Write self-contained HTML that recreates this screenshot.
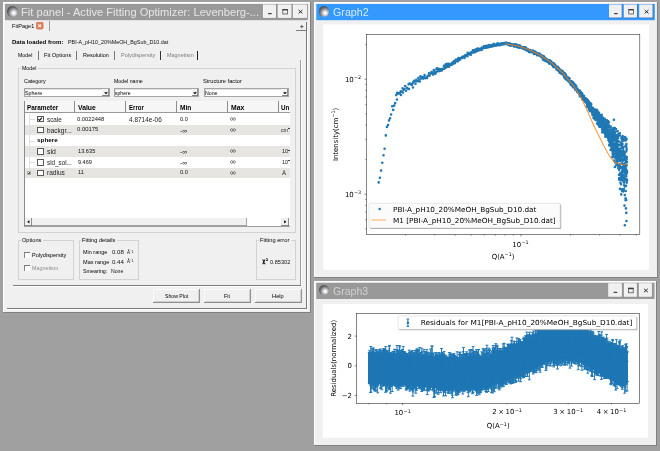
<!DOCTYPE html>
<html lang="en"><head><meta charset="utf-8"><title>SasView - Fit panel</title>
<style>
html,body{margin:0;padding:0;}
body{width:660px;height:451px;overflow:hidden;background:#a0a0a0;position:relative;font-family:"Liberation Sans",sans-serif;}
#root{position:absolute;left:0;top:0;width:660px;height:451px;will-change:transform;}
.r{position:absolute;display:block;}
.t{position:absolute;display:block;white-space:nowrap;}
</style></head><body><div id="root">
<div class="r" style="left:3.00px;top:2.00px;width:307.00px;height:310.30px;background:#f0f0f0;box-shadow:0.6px 0.6px 0 0.4px #808080;"></div>
<div class="r" style="left:3.00px;top:2.00px;width:307.00px;height:1.00px;background:#ffffff;"></div>
<div class="r" style="left:3.00px;top:2.00px;width:1.00px;height:310.30px;background:#ffffff;"></div>
<svg class="r" style="left:0;top:0" width="660" height="451" viewBox="0 0 660 451"><rect x="5.00" y="4.00" width="302.80" height="16.2" fill="#999999"/><rect x="263.00" y="4.50" width="13.50" height="13.80" fill="#8a8a8a"/><rect x="263.00" y="4.50" width="12.90" height="13.20" fill="#ffffff"/><rect x="263.50" y="5.00" width="12.40" height="12.70" fill="#f0f0f0"/><rect x="268.15" y="13.00" width="3.5" height="1.2" fill="#3a3a3a"/><rect x="277.70" y="4.50" width="14.20" height="13.80" fill="#8a8a8a"/><rect x="277.70" y="4.50" width="13.60" height="13.20" fill="#ffffff"/><rect x="278.20" y="5.00" width="13.10" height="12.70" fill="#f0f0f0"/><rect x="282.80" y="9.40" width="4.6" height="4.6" stroke="#4a4a4a" stroke-width="0.75" fill="none"/><rect x="282.50" y="9.00" width="5.2" height="1.4" fill="#3a3a3a"/><rect x="293.00" y="4.50" width="14.40" height="13.80" fill="#8a8a8a"/><rect x="293.00" y="4.50" width="13.80" height="13.20" fill="#ffffff"/><rect x="293.50" y="5.00" width="13.30" height="12.70" fill="#f0f0f0"/><path d="M298.60 10.00 L302.40 13.40 M302.40 10.00 L298.60 13.40" stroke="#2c2c2c" stroke-width="1.0" fill="none"/></svg>
<div class="r" style="left:7.20px;top:6.00px;width:10.6px;height:10.6px;border-radius:50%;background:radial-gradient(circle at 62% 64%, #ffffff 0%, #f4f4f4 13%, #b0b0b4 34%, #66666c 58%, #44444a 80%, #3a3a40 100%);"></div>
<span class="t" style="left:21.30px;top:5.96px;font-size:11.4px;line-height:13.68px;color:#e6e6e6;font-family:'Liberation Sans', sans-serif;transform:scaleX(0.9765);transform-origin:0 50%;">Fit panel - Active Fitting Optimizer: Levenberg-...</span>
<span class="t" style="left:12.00px;top:22.72px;font-size:5.8px;line-height:6.96px;color:#000;font-family:'Liberation Sans', sans-serif;transform:scaleX(0.9606);transform-origin:0 50%;">FitPage1</span>
<svg class="r" style="left:36.3px;top:22.3px" width="7.4" height="7.4" viewBox="0 0 7.4 7.4"><rect x="0.3" y="0.3" width="6.8" height="6.8" rx="1.4" fill="#e0805c" stroke="#c8623c" stroke-width="0.6"/><path d="M2.3 2.3 L5.1 5.1 M5.1 2.3 L2.3 5.1" stroke="#fff4e8" stroke-width="1.1"/></svg>
<div class="r" style="left:49.00px;top:21.30px;width:1.10px;height:10.00px;background:#9c9c9c;"></div>
<div class="r" style="left:296.40px;top:21.80px;width:10.40px;height:9.00px;background:#f0f0f0;box-shadow:inset -0.8px -0.8px 0 #555;"></div>
<svg class="r" style="left:298px;top:23px" width="8" height="8" viewBox="0 0 8 8"><path d="M2.1 3.6h3.4M3.8 1.9v3.4" stroke="#333" stroke-width="0.7" fill="none"/></svg>
<div class="r" style="left:306.20px;top:30.00px;width:0.80px;height:279.00px;background:#7a7a7a;"></div>
<div class="r" style="left:307.00px;top:30.00px;width:0.80px;height:279.80px;background:#ffffff;"></div>
<div class="r" style="left:7.00px;top:308.20px;width:300.00px;height:0.80px;background:#7a7a7a;"></div>
<div class="r" style="left:7.00px;top:309.00px;width:300.80px;height:0.80px;background:#ffffff;"></div>
<span class="t" style="left:12.00px;top:38.72px;font-size:5.8px;line-height:6.96px;color:#000;font-weight:bold;font-family:'Liberation Sans', sans-serif;transform:scaleX(1.0445);transform-origin:0 50%;">Data loaded from:</span>
<span class="t" style="left:68.00px;top:38.72px;font-size:5.8px;line-height:6.96px;color:#111;font-family:'Liberation Sans', sans-serif;transform:scaleX(0.9286);transform-origin:0 50%;">PBI-A_pH10_20%MeOH_BgSub_D10.dat</span>
<span class="t" style="left:18.00px;top:51.92px;font-size:5.8px;line-height:6.96px;color:#000;font-family:'Liberation Sans', sans-serif;transform:scaleX(0.9052);transform-origin:0 50%;">Model</span>
<div class="r" style="left:38.20px;top:51.00px;width:0.80px;height:9.00px;background:#777;"></div>
<span class="t" style="left:44.00px;top:51.92px;font-size:5.8px;line-height:6.96px;color:#000;font-family:'Liberation Sans', sans-serif;transform:scaleX(0.9735);transform-origin:0 50%;">Fit Options</span>
<div class="r" style="left:76.40px;top:51.00px;width:0.80px;height:9.00px;background:#777;"></div>
<span class="t" style="left:83.00px;top:51.92px;font-size:5.8px;line-height:6.96px;color:#000;font-family:'Liberation Sans', sans-serif;transform:scaleX(0.9414);transform-origin:0 50%;">Resolution</span>
<div class="r" style="left:114.20px;top:51.00px;width:0.80px;height:9.00px;background:#777;"></div>
<span class="t" style="left:120.50px;top:51.92px;font-size:5.8px;line-height:6.96px;color:#7c7c7c;font-family:'Liberation Sans', sans-serif;transform:scaleX(0.9586);transform-origin:0 50%;">Polydispersity</span>
<div class="r" style="left:160.10px;top:51.00px;width:0.80px;height:9.00px;background:#333;"></div>
<span class="t" style="left:166.50px;top:51.92px;font-size:5.8px;line-height:6.96px;color:#7c7c7c;font-family:'Liberation Sans', sans-serif;transform:scaleX(0.9413);transform-origin:0 50%;">Magnetism</span>
<div class="r" style="left:197.30px;top:51.00px;width:0.80px;height:9.00px;background:#222;"></div>
<div class="r" style="left:300.20px;top:60.00px;width:0.80px;height:225.60px;background:#9c9c9c;"></div>
<div class="r" style="left:301.00px;top:60.00px;width:0.80px;height:226.40px;background:#ffffff;"></div>
<div class="r" style="left:12.50px;top:285.00px;width:288.50px;height:0.80px;background:#7a7a7a;"></div>
<div class="r" style="left:12.50px;top:285.80px;width:289.30px;height:0.80px;background:#ffffff;"></div>
<div class="r" style="left:18.00px;top:68.00px;width:277.80px;height:164.60px;border:0.7px solid #d2d2d2;box-sizing:border-box;"></div>
<div class="r" style="left:20.50px;top:65.00px;width:17.00px;height:6.00px;background:#f0f0f0;"></div>
<span class="t" style="left:22.00px;top:64.72px;font-size:5.8px;line-height:6.96px;color:#000;font-family:'Liberation Sans', sans-serif;transform:scaleX(0.9052);transform-origin:0 50%;">Model</span>
<span class="t" style="left:23.50px;top:77.82px;font-size:5.8px;line-height:6.96px;color:#000;font-family:'Liberation Sans', sans-serif;transform:scaleX(0.9263);transform-origin:0 50%;">Category</span>
<span class="t" style="left:113.50px;top:77.82px;font-size:5.8px;line-height:6.96px;color:#000;font-family:'Liberation Sans', sans-serif;transform:scaleX(0.9023);transform-origin:0 50%;">Model name</span>
<span class="t" style="left:203.00px;top:77.82px;font-size:5.8px;line-height:6.96px;color:#000;font-family:'Liberation Sans', sans-serif;transform:scaleX(0.9786);transform-origin:0 50%;">Structure factor</span>
<div class="r" style="left:23.50px;top:87.60px;width:86.30px;height:9.90px;background:#ffffff;border:0.7px solid #a4a4a4;box-sizing:border-box;box-shadow:inset 0.5px 0.5px 0 #c4c4c4;"></div>
<span class="t" style="left:25.00px;top:89.62px;font-size:5.8px;line-height:6.96px;color:#000;font-family:'Liberation Sans', sans-serif;transform:scaleX(0.9196);transform-origin:0 50%;">Sphere</span>
<div class="r" style="left:102.40px;top:89.00px;width:6.60px;height:7.20px;background:#f0f0f0;box-shadow:inset -0.7px -0.7px 0 #666, inset 0.5px 0.5px 0 #fff;"></div>
<svg class="r" style="left:103.70px;top:91.6px" width="4" height="2.6" viewBox="0 0 4 2.6"><path d="M0.2 0.2 L3.8 0.2 L2 2.4 Z" fill="#000"/></svg>
<div class="r" style="left:113.50px;top:87.60px;width:85.50px;height:9.90px;background:#ffffff;border:0.7px solid #a4a4a4;box-sizing:border-box;box-shadow:inset 0.5px 0.5px 0 #c4c4c4;"></div>
<span class="t" style="left:115.00px;top:89.62px;font-size:5.8px;line-height:6.96px;color:#000;font-family:'Liberation Sans', sans-serif;transform:scaleX(0.8740);transform-origin:0 50%;">sphere</span>
<div class="r" style="left:191.60px;top:89.00px;width:6.60px;height:7.20px;background:#f0f0f0;box-shadow:inset -0.7px -0.7px 0 #666, inset 0.5px 0.5px 0 #fff;"></div>
<svg class="r" style="left:192.90px;top:91.6px" width="4" height="2.6" viewBox="0 0 4 2.6"><path d="M0.2 0.2 L3.8 0.2 L2 2.4 Z" fill="#000"/></svg>
<div class="r" style="left:203.50px;top:87.60px;width:85.50px;height:9.90px;background:#ffffff;border:0.7px solid #a4a4a4;box-sizing:border-box;box-shadow:inset 0.5px 0.5px 0 #c4c4c4;"></div>
<span class="t" style="left:205.00px;top:89.62px;font-size:5.8px;line-height:6.96px;color:#000;font-family:'Liberation Sans', sans-serif;transform:scaleX(0.9015);transform-origin:0 50%;">None</span>
<div class="r" style="left:281.60px;top:89.00px;width:6.60px;height:7.20px;background:#f0f0f0;box-shadow:inset -0.7px -0.7px 0 #666, inset 0.5px 0.5px 0 #fff;"></div>
<svg class="r" style="left:282.90px;top:91.6px" width="4" height="2.6" viewBox="0 0 4 2.6"><path d="M0.2 0.2 L3.8 0.2 L2 2.4 Z" fill="#000"/></svg>
<div class="r" style="left:24.00px;top:100.50px;width:265.60px;height:126.00px;background:#ffffff;border-left:0.7px solid #8a8a8a;border-top:0.7px solid #8a8a8a;border-bottom:0.7px solid #a0a0a0;box-sizing:border-box;"></div>
<div class="r" style="left:24.80px;top:101.30px;width:264.80px;height:12.20px;background:#f6f6f6;border-bottom:0.8px solid #9a9a9a;box-sizing:border-box;"></div>
<div class="r" style="left:74.30px;top:101.30px;width:0.90px;height:12.00px;background:#8c8c8c;"></div>
<div class="r" style="left:125.40px;top:101.30px;width:0.90px;height:12.00px;background:#8c8c8c;"></div>
<div class="r" style="left:176.40px;top:101.30px;width:0.90px;height:12.00px;background:#8c8c8c;"></div>
<div class="r" style="left:227.40px;top:101.30px;width:0.90px;height:12.00px;background:#8c8c8c;"></div>
<div class="r" style="left:278.40px;top:101.30px;width:0.90px;height:12.00px;background:#8c8c8c;"></div>
<span class="t" style="left:27.00px;top:104.33px;font-size:6.61px;line-height:7.93px;color:#000;font-weight:bold;font-family:'Liberation Sans', sans-serif;transform:scaleX(0.9679);transform-origin:0 50%;">Parameter</span>
<span class="t" style="left:77.50px;top:104.33px;font-size:6.61px;line-height:7.93px;color:#000;font-weight:bold;font-family:'Liberation Sans', sans-serif;transform:scaleX(1.0306);transform-origin:0 50%;">Value</span>
<span class="t" style="left:129.00px;top:104.33px;font-size:6.61px;line-height:7.93px;color:#000;font-weight:bold;font-family:'Liberation Sans', sans-serif;transform:scaleX(0.9156);transform-origin:0 50%;">Error</span>
<span class="t" style="left:180.00px;top:104.33px;font-size:6.61px;line-height:7.93px;color:#000;font-weight:bold;font-family:'Liberation Sans', sans-serif;transform:scaleX(0.9929);transform-origin:0 50%;">Min</span>
<span class="t" style="left:230.50px;top:104.33px;font-size:6.61px;line-height:7.93px;color:#000;font-weight:bold;font-family:'Liberation Sans', sans-serif;transform:scaleX(1.0343);transform-origin:0 50%;">Max</span>
<div class="r" style="left:281px;top:102px;width:8.4px;height:11px;overflow:hidden">
<span class="t" style="left:0;top:2.3px;font-size:6.6px;line-height:7.9px;font-weight:bold;font-family:'Liberation Sans', sans-serif;transform:scaleX(0.94);transform-origin:0 50%">Units</span></div>
<div class="r" style="left:24.80px;top:124.60px;width:264.80px;height:10.90px;background:#e6e5e2;"></div>
<div class="r" style="left:24.80px;top:146.20px;width:264.80px;height:10.80px;background:#e6e5e2;"></div>
<div class="r" style="left:24.80px;top:167.60px;width:264.80px;height:10.60px;background:#e6e5e2;"></div>
<div class="r" style="left:28.50px;top:114.00px;width:0.50px;height:59.00px;background:#e2e2e2;"></div>
<div class="r" style="left:28.50px;top:119.30px;width:6.00px;height:0.50px;background:#dedede;"></div>
<div class="r" style="left:28.50px;top:130.20px;width:6.00px;height:0.50px;background:#dedede;"></div>
<div class="r" style="left:28.50px;top:141.00px;width:6.00px;height:0.50px;background:#dedede;"></div>
<div class="r" style="left:28.50px;top:151.60px;width:6.00px;height:0.50px;background:#dedede;"></div>
<div class="r" style="left:28.50px;top:162.40px;width:6.00px;height:0.50px;background:#dedede;"></div>
<div class="r" style="left:28.50px;top:173.00px;width:6.00px;height:0.50px;background:#dedede;"></div>
<div class="r" style="left:37.40px;top:116.10px;width:6.20px;height:6.40px;background:#ffffff;border:0.65px solid #5a5a5a;box-sizing:border-box;"></div>
<svg class="r" style="left:37.40px;top:116.10px" width="6.2" height="6.4" viewBox="0 0 6.2 6.4"><path d="M1.4 3.1 L2.6 4.5 L4.9 1.7" stroke="#000" stroke-width="1.1" fill="none"/></svg>
<span class="t" style="left:46.50px;top:115.60px;font-size:6.5px;line-height:7.80px;color:#222;font-family:'Liberation Sans', sans-serif;transform:scaleX(0.9753);transform-origin:0 50%;">scale</span>
<span class="t" style="left:77.00px;top:115.52px;font-size:5.8px;line-height:6.96px;color:#111;font-family:'Liberation Sans', sans-serif;transform:scaleX(0.9957);transform-origin:0 50%;">0.0022448</span>
<span class="t" style="left:128.50px;top:115.70px;font-size:6.5px;line-height:7.80px;color:#222;font-family:'Liberation Sans', sans-serif;transform:scaleX(0.9972);transform-origin:0 50%;">4.8714e-06</span>
<span class="t" style="left:179.50px;top:115.52px;font-size:5.8px;line-height:6.96px;color:#111;font-family:'Liberation Sans', sans-serif;transform:scaleX(0.9674);transform-origin:0 50%;">0.0</span>
<span class="t" style="left:230.00px;top:115.16px;font-size:7.4px;line-height:8.88px;color:#1a1a1a;font-family:'Liberation Sans', sans-serif;transform:scaleX(1.1200);transform-origin:0 50%;">∞</span>
<div class="r" style="left:37.40px;top:127.00px;width:6.20px;height:6.40px;background:#ffffff;border:0.65px solid #5a5a5a;box-sizing:border-box;"></div>
<span class="t" style="left:46.50px;top:126.50px;font-size:6.5px;line-height:7.80px;color:#222;font-family:'Liberation Sans', sans-serif;transform:scaleX(1.0094);transform-origin:0 50%;">backgr...</span>
<span class="t" style="left:77.00px;top:126.42px;font-size:5.8px;line-height:6.96px;color:#111;font-family:'Liberation Sans', sans-serif;transform:scaleX(1.0159);transform-origin:0 50%;">0.00175</span>
<span class="t" style="left:180.00px;top:126.60px;font-size:6.5px;line-height:7.80px;color:#1a1a1a;font-family:'Liberation Sans', sans-serif;transform:scaleX(1.0296);transform-origin:0 50%;">-∞</span>
<span class="t" style="left:230.00px;top:126.06px;font-size:7.4px;line-height:8.88px;color:#1a1a1a;font-family:'Liberation Sans', sans-serif;transform:scaleX(1.1200);transform-origin:0 50%;">∞</span>
<span class="t" style="left:281.00px;top:127.02px;font-size:5.8px;line-height:6.96px;color:#222;font-family:'Liberation Sans', sans-serif;transform:scaleX(0.9054);transform-origin:0 50%;">cm</span>
<div class="r" style="left:288.40px;top:128.20px;width:1.20px;height:0.50px;background:#444;"></div>
<span class="t" style="left:37.00px;top:137.40px;font-size:6.0px;line-height:7.20px;color:#000;font-weight:bold;font-family:'Liberation Sans', sans-serif;transform:scaleX(1.0571);transform-origin:0 50%;">sphere</span>
<div class="r" style="left:37.40px;top:148.40px;width:6.20px;height:6.40px;background:#ffffff;border:0.65px solid #5a5a5a;box-sizing:border-box;"></div>
<span class="t" style="left:46.50px;top:147.90px;font-size:6.5px;line-height:7.80px;color:#222;font-family:'Liberation Sans', sans-serif;transform:scaleX(1.0590);transform-origin:0 50%;">sld</span>
<span class="t" style="left:77.50px;top:147.82px;font-size:5.8px;line-height:6.96px;color:#111;font-family:'Liberation Sans', sans-serif;transform:scaleX(0.9752);transform-origin:0 50%;">13.635</span>
<span class="t" style="left:180.00px;top:148.00px;font-size:6.5px;line-height:7.80px;color:#1a1a1a;font-family:'Liberation Sans', sans-serif;transform:scaleX(1.0296);transform-origin:0 50%;">-∞</span>
<span class="t" style="left:230.00px;top:147.46px;font-size:7.4px;line-height:8.88px;color:#1a1a1a;font-family:'Liberation Sans', sans-serif;transform:scaleX(1.1200);transform-origin:0 50%;">∞</span>
<span class="t" style="left:281.50px;top:148.32px;font-size:5.8px;line-height:6.96px;color:#222;font-family:'Liberation Sans', sans-serif;transform:scaleX(0.9455);transform-origin:0 50%;">10</span>
<div class="r" style="left:288.00px;top:149.60px;width:1.60px;height:0.50px;background:#444;"></div>
<div class="r" style="left:37.40px;top:159.20px;width:6.20px;height:6.40px;background:#ffffff;border:0.65px solid #5a5a5a;box-sizing:border-box;"></div>
<span class="t" style="left:46.50px;top:158.70px;font-size:6.5px;line-height:7.80px;color:#222;font-family:'Liberation Sans', sans-serif;transform:scaleX(0.9668);transform-origin:0 50%;">sld_sol...</span>
<span class="t" style="left:77.50px;top:158.62px;font-size:5.8px;line-height:6.96px;color:#111;font-family:'Liberation Sans', sans-serif;transform:scaleX(0.9508);transform-origin:0 50%;">9.469</span>
<span class="t" style="left:180.00px;top:158.80px;font-size:6.5px;line-height:7.80px;color:#1a1a1a;font-family:'Liberation Sans', sans-serif;transform:scaleX(1.0296);transform-origin:0 50%;">-∞</span>
<span class="t" style="left:230.00px;top:158.26px;font-size:7.4px;line-height:8.88px;color:#1a1a1a;font-family:'Liberation Sans', sans-serif;transform:scaleX(1.1200);transform-origin:0 50%;">∞</span>
<span class="t" style="left:281.50px;top:159.12px;font-size:5.8px;line-height:6.96px;color:#222;font-family:'Liberation Sans', sans-serif;transform:scaleX(0.9455);transform-origin:0 50%;">10</span>
<div class="r" style="left:288.00px;top:160.40px;width:1.60px;height:0.50px;background:#444;"></div>
<div class="r" style="left:37.40px;top:169.80px;width:6.20px;height:6.40px;background:#ffffff;border:0.65px solid #5a5a5a;box-sizing:border-box;"></div>
<span class="t" style="left:46.50px;top:169.30px;font-size:6.5px;line-height:7.80px;color:#222;font-family:'Liberation Sans', sans-serif;transform:scaleX(1.0054);transform-origin:0 50%;">radius</span>
<span class="t" style="left:77.50px;top:169.22px;font-size:5.8px;line-height:6.96px;color:#111;font-family:'Liberation Sans', sans-serif;transform:scaleX(0.9633);transform-origin:0 50%;">11</span>
<span class="t" style="left:179.50px;top:169.22px;font-size:5.8px;line-height:6.96px;color:#111;font-family:'Liberation Sans', sans-serif;transform:scaleX(0.9674);transform-origin:0 50%;">0.0</span>
<span class="t" style="left:230.00px;top:168.86px;font-size:7.4px;line-height:8.88px;color:#1a1a1a;font-family:'Liberation Sans', sans-serif;transform:scaleX(1.1200);transform-origin:0 50%;">∞</span>
<span class="t" style="left:282.20px;top:169.72px;font-size:5.8px;line-height:6.96px;color:#222;font-family:'Liberation Sans', sans-serif;transform:scaleX(1.0856);transform-origin:0 50%;">Å</span>
<div class="r" style="left:26.80px;top:170.70px;width:4.60px;height:4.60px;background:#fff;border:0.5px solid #b0b0b0;box-sizing:border-box;"></div>
<div class="r" style="left:27.90px;top:172.70px;width:2.40px;height:0.60px;background:#555;"></div>
<div class="r" style="left:28.80px;top:171.80px;width:0.60px;height:2.40px;background:#555;"></div>
<div class="r" style="left:24.80px;top:218.00px;width:264.80px;height:7.80px;background:#ffffff;"></div>
<div class="r" style="left:24.80px;top:218.00px;width:7.40px;height:7.80px;background:#f0f0f0;box-shadow:inset -0.7px -0.7px 0 #666;"></div>
<svg class="r" style="left:27px;top:220.4px" width="2.6" height="3.6" viewBox="0 0 2.6 3.6"><path d="M2.4 0.2 L2.4 3.4 L0.2 1.8 Z" fill="#000"/></svg>
<div class="r" style="left:32.20px;top:218.00px;width:215.00px;height:7.80px;background:#f0f0f0;box-shadow:inset -0.7px -0.7px 0 #888;"></div>
<div class="r" style="left:281.40px;top:218.00px;width:7.60px;height:7.80px;background:#f0f0f0;box-shadow:inset -0.7px -0.7px 0 #666;"></div>
<svg class="r" style="left:284px;top:220.4px" width="2.6" height="3.6" viewBox="0 0 2.6 3.6"><path d="M0.2 0.2 L0.2 3.4 L2.4 1.8 Z" fill="#000"/></svg>
<div class="r" style="left:18.00px;top:240.00px;width:56.20px;height:39.60px;border:0.7px solid #d2d2d2;box-sizing:border-box;"></div>
<div class="r" style="left:20.50px;top:237.00px;width:22.00px;height:6.00px;background:#f0f0f0;"></div>
<span class="t" style="left:22.00px;top:236.72px;font-size:5.8px;line-height:6.96px;color:#000;font-family:'Liberation Sans', sans-serif;transform:scaleX(0.9655);transform-origin:0 50%;">Options</span>
<div class="r" style="left:24.00px;top:252.00px;width:5.60px;height:5.80px;background:#ffffff;box-shadow:inset 0.9px 0.9px 0 #777;"></div>
<span class="t" style="left:32.00px;top:251.82px;font-size:5.8px;line-height:6.96px;color:#000;font-family:'Liberation Sans', sans-serif;transform:scaleX(0.9586);transform-origin:0 50%;">Polydispersity</span>
<div class="r" style="left:24.00px;top:265.00px;width:5.60px;height:5.80px;background:#ffffff;box-shadow:inset 0.9px 0.9px 0 #777;"></div>
<span class="t" style="left:32.00px;top:264.72px;font-size:5.8px;line-height:6.96px;color:#8e8e8e;font-family:'Liberation Sans', sans-serif;transform:scaleX(0.9271);transform-origin:0 50%;">Magnetism</span>
<div class="r" style="left:78.50px;top:240.00px;width:60.10px;height:39.60px;border:0.7px solid #d2d2d2;box-sizing:border-box;"></div>
<div class="r" style="left:80.50px;top:237.00px;width:36.00px;height:6.00px;background:#f0f0f0;"></div>
<span class="t" style="left:82.00px;top:236.72px;font-size:5.8px;line-height:6.96px;color:#000;font-family:'Liberation Sans', sans-serif;transform:scaleX(0.9745);transform-origin:0 50%;">Fitting details</span>
<span class="t" style="left:83.00px;top:249.12px;font-size:5.8px;line-height:6.96px;color:#000;font-family:'Liberation Sans', sans-serif;transform:scaleX(0.9421);transform-origin:0 50%;">Min range</span>
<span class="t" style="left:112.00px;top:249.12px;font-size:5.8px;line-height:6.96px;color:#111;font-family:'Liberation Sans', sans-serif;transform:scaleX(1.0453);transform-origin:0 50%;">0.08</span>
<span class="t" style="left:127.00px;top:248.72px;font-size:5.8px;line-height:6.96px;color:#111;font-family:'Liberation Sans', sans-serif;transform:scaleX(0.8000);transform-origin:0 50%;">Å⁻¹</span>
<span class="t" style="left:83.00px;top:258.62px;font-size:5.8px;line-height:6.96px;color:#000;font-family:'Liberation Sans', sans-serif;transform:scaleX(0.9597);transform-origin:0 50%;">Max range</span>
<span class="t" style="left:112.00px;top:258.62px;font-size:5.8px;line-height:6.96px;color:#111;font-family:'Liberation Sans', sans-serif;transform:scaleX(1.0453);transform-origin:0 50%;">0.44</span>
<span class="t" style="left:127.00px;top:258.22px;font-size:5.8px;line-height:6.96px;color:#111;font-family:'Liberation Sans', sans-serif;transform:scaleX(0.8000);transform-origin:0 50%;">Å⁻¹</span>
<span class="t" style="left:83.00px;top:268.12px;font-size:5.8px;line-height:6.96px;color:#000;font-family:'Liberation Sans', sans-serif;transform:scaleX(0.9192);transform-origin:0 50%;">Smearing:</span>
<span class="t" style="left:111.00px;top:268.12px;font-size:5.8px;line-height:6.96px;color:#111;font-family:'Liberation Sans', sans-serif;transform:scaleX(0.8871);transform-origin:0 50%;">None</span>
<div class="r" style="left:256.30px;top:240.00px;width:39.30px;height:39.60px;border:0.7px solid #d2d2d2;box-sizing:border-box;"></div>
<div class="r" style="left:258.50px;top:237.00px;width:32.00px;height:6.00px;background:#f0f0f0;"></div>
<span class="t" style="left:260.00px;top:236.72px;font-size:5.8px;line-height:6.96px;color:#000;font-family:'Liberation Sans', sans-serif;transform:scaleX(0.9881);transform-origin:0 50%;">Fitting error</span>
<span class="t" style="left:261.50px;top:257.70px;font-size:6.5px;line-height:7.80px;color:#000;font-weight:bold;font-family:'DejaVu Sans', 'Liberation Sans', sans-serif;transform:scaleX(0.8666);transform-origin:0 50%;">χ²</span>
<span class="t" style="left:270.00px;top:258.72px;font-size:5.8px;line-height:6.96px;color:#111;font-family:'Liberation Sans', sans-serif;transform:scaleX(0.9682);transform-origin:0 50%;">0.85302</span>
<div class="r" style="left:153.00px;top:289.00px;width:47.30px;height:14.00px;background:#f0f0f0;box-shadow:inset -0.9px -0.9px 0 #8e8e8e, inset 0.7px 0.7px 0 #fff, inset -1.7px -1.7px 0 #c6c6c6;"></div>
<span class="t" style="left:165.30px;top:293.22px;font-size:5.8px;line-height:6.96px;color:#000;font-family:'Liberation Sans', sans-serif;transform:scaleX(0.8884);transform-origin:0 50%;">Show Plot</span>
<div class="r" style="left:203.60px;top:289.00px;width:47.50px;height:14.00px;background:#f0f0f0;box-shadow:inset -0.9px -0.9px 0 #8e8e8e, inset 0.7px 0.7px 0 #fff, inset -1.7px -1.7px 0 #c6c6c6;"></div>
<span class="t" style="left:223.70px;top:293.22px;font-size:5.8px;line-height:6.96px;color:#000;font-family:'Liberation Sans', sans-serif;transform:scaleX(0.9157);transform-origin:0 50%;">Fit</span>
<div class="r" style="left:254.50px;top:289.00px;width:47.30px;height:14.00px;background:#f0f0f0;box-shadow:inset -0.9px -0.9px 0 #8e8e8e, inset 0.7px 0.7px 0 #fff, inset -1.7px -1.7px 0 #c6c6c6;"></div>
<span class="t" style="left:272.00px;top:293.22px;font-size:5.8px;line-height:6.96px;color:#000;font-family:'Liberation Sans', sans-serif;transform:scaleX(0.9892);transform-origin:0 50%;">Help</span>
<div class="r" style="left:314.30px;top:2.00px;width:342.50px;height:275.00px;background:#f0f0f0;box-shadow:0.6px 0.6px 0 0.4px #808080;"></div>
<div class="r" style="left:314.30px;top:2.00px;width:342.50px;height:1.00px;background:#ffffff;"></div>
<div class="r" style="left:314.30px;top:2.00px;width:1.00px;height:275.00px;background:#ffffff;"></div>
<svg class="r" style="left:0;top:0" width="660" height="451" viewBox="0 0 660 451"><rect x="316.30" y="4.00" width="338.50" height="16.2" fill="#3399ff"/><rect x="609.10" y="4.50" width="13.30" height="13.80" fill="#3c76b4"/><rect x="609.10" y="4.50" width="12.30" height="12.80" fill="#ffffff"/><rect x="609.60" y="5.00" width="11.80" height="12.30" fill="#f0f0f0"/><rect x="614.15" y="13.00" width="3.5" height="1.2" fill="#3a3a3a"/><rect x="623.80" y="4.50" width="14.00" height="13.80" fill="#3c76b4"/><rect x="623.80" y="4.50" width="13.00" height="12.80" fill="#ffffff"/><rect x="624.30" y="5.00" width="12.50" height="12.30" fill="#f0f0f0"/><rect x="628.80" y="9.40" width="4.6" height="4.6" stroke="#4a4a4a" stroke-width="0.75" fill="none"/><rect x="628.50" y="9.00" width="5.2" height="1.4" fill="#3a3a3a"/><rect x="639.30" y="4.50" width="14.00" height="13.80" fill="#3c76b4"/><rect x="639.30" y="4.50" width="13.00" height="12.80" fill="#ffffff"/><rect x="639.80" y="5.00" width="12.50" height="12.30" fill="#f0f0f0"/><path d="M644.70 10.00 L648.50 13.40 M648.50 10.00 L644.70 13.40" stroke="#2c2c2c" stroke-width="1.0" fill="none"/></svg>
<div class="r" style="left:318.50px;top:6.00px;width:10.6px;height:10.6px;border-radius:50%;background:radial-gradient(circle at 62% 64%, #ffffff 0%, #f4f4f4 13%, #b0b0b4 34%, #66666c 58%, #44444a 80%, #3a3a40 100%);"></div>
<span class="t" style="left:332.60px;top:5.96px;font-size:11.4px;line-height:13.68px;color:#d6eaff;font-family:'Liberation Sans', sans-serif;transform:scaleX(0.9389);transform-origin:0 50%;">Graph2</span>
<div class="r" style="left:314.30px;top:280.80px;width:341.70px;height:164.50px;background:#f0f0f0;box-shadow:0.6px 0.6px 0 0.4px #808080;"></div>
<div class="r" style="left:314.30px;top:280.80px;width:341.70px;height:1.00px;background:#ffffff;"></div>
<div class="r" style="left:314.30px;top:280.80px;width:1.00px;height:164.50px;background:#ffffff;"></div>
<svg class="r" style="left:0;top:0" width="660" height="451" viewBox="0 0 660 451"><rect x="316.30" y="282.80" width="338.20" height="16.2" fill="#999999"/><rect x="608.30" y="283.30" width="14.00" height="13.80" fill="#8a8a8a"/><rect x="608.30" y="283.30" width="13.40" height="13.20" fill="#ffffff"/><rect x="608.80" y="283.80" width="12.90" height="12.70" fill="#f0f0f0"/><rect x="613.70" y="291.80" width="3.5" height="1.2" fill="#3a3a3a"/><rect x="623.90" y="283.30" width="13.40" height="13.80" fill="#8a8a8a"/><rect x="623.90" y="283.30" width="12.80" height="13.20" fill="#ffffff"/><rect x="624.40" y="283.80" width="12.30" height="12.70" fill="#f0f0f0"/><rect x="628.60" y="288.20" width="4.6" height="4.6" stroke="#4a4a4a" stroke-width="0.75" fill="none"/><rect x="628.30" y="287.80" width="5.2" height="1.4" fill="#3a3a3a"/><rect x="638.90" y="283.30" width="13.40" height="13.80" fill="#8a8a8a"/><rect x="638.90" y="283.30" width="12.80" height="13.20" fill="#ffffff"/><rect x="639.40" y="283.80" width="12.30" height="12.70" fill="#f0f0f0"/><path d="M644.00 288.80 L647.80 292.20 M647.80 288.80 L644.00 292.20" stroke="#2c2c2c" stroke-width="1.0" fill="none"/></svg>
<div class="r" style="left:318.50px;top:284.80px;width:10.6px;height:10.6px;border-radius:50%;background:radial-gradient(circle at 62% 64%, #ffffff 0%, #f4f4f4 13%, #b0b0b4 34%, #66666c 58%, #44444a 80%, #3a3a40 100%);"></div>
<span class="t" style="left:332.60px;top:284.76px;font-size:11.4px;line-height:13.68px;color:#d2d2d2;font-family:'Liberation Sans', sans-serif;transform:scaleX(0.9257);transform-origin:0 50%;">Graph3</span>
<svg class="r" style="left:0;top:0" width="660" height="451" viewBox="0 0 660 451" font-family='"DejaVu Sans", "Liberation Sans", sans-serif' fill="#000">
<rect x="323.2" y="24.5" width="325.8" height="245.4" fill="#fff"/>
<clipPath id="c2"><rect x="366.4" y="34.4" width="273.4" height="200.1"/></clipPath>
<path clip-path="url(#c2)" d="M378.7 182.4h0M379.9 177.8h0M381.1 170.6h0M382.3 162.8h0M383.5 155.3h0M384.6 148.7h0M385.8 135.4h0M386.9 127.0h0M388.0 125.0h0M389.0 120.4h0M390.1 118.2h0M391.1 114.5h0M392.2 106.2h0M393.2 109.9h0M394.2 105.6h0M395.2 103.1h0M396.2 95.1h0M397.1 92.9h0M398.1 93.4h0M399.0 93.0h0M399.9 93.5h0M400.8 91.3h0M401.7 91.8h0M402.6 88.3h0M403.5 89.7h0M404.4 89.0h0M405.2 86.0h0M406.1 90.7h0M406.9 87.7h0M407.7 88.5h0M408.6 84.3h0M409.4 83.6h0M410.2 83.9h0M411.0 83.9h0M411.8 84.9h0M412.5 83.7h0M413.3 82.1h0M414.1 80.8h0M414.8 81.2h0M415.5 83.8h0M416.3 79.9h0M417.0 81.3h0M417.7 81.2h0M418.4 77.9h0M419.1 79.9h0M419.8 81.5h0M420.5 76.2h0M421.2 78.4h0M421.9 78.3h0M422.6 77.0h0M423.2 78.6h0M423.9 77.4h0M424.6 75.1h0M425.2 78.1h0M425.8 77.5h0M426.5 77.6h0M427.1 78.0h0M427.7 76.1h0M428.4 75.5h0M429.0 73.2h0M429.6 75.6h0M430.2 73.6h0M430.8 73.5h0M431.4 72.1h0M432.0 72.2h0M432.6 72.5h0M433.1 74.6h0M433.7 70.0h0M434.3 70.5h0M434.9 72.4h0M435.4 73.7h0M436.0 72.3h0M436.5 68.9h0M437.1 68.4h0M437.6 71.2h0M438.2 69.5h0M438.7 68.8h0M439.2 71.1h0M439.8 71.0h0M440.3 69.6h0M440.8 69.4h0M441.3 69.4h0M441.8 70.5h0M442.3 69.1h0M442.9 68.7h0M443.4 68.5h0M443.9 65.8h0M444.3 68.8h0M444.8 68.2h0M445.3 67.5h0M445.8 64.4h0M446.3 65.7h0M446.8 67.1h0M447.3 63.9h0M447.7 65.4h0M448.2 66.5h0M448.7 63.7h0M449.1 66.7h0M449.6 65.3h0M450.0 64.3h0M450.5 64.6h0M451.0 64.7h0M451.4 63.9h0M451.8 64.7h0M452.3 62.5h0M452.7 62.5h0M453.2 63.8h0M453.6 62.4h0M454.0 61.2h0M454.5 62.8h0M454.9 63.1h0M455.3 60.9h0M455.7 59.7h0M456.2 60.7h0M456.6 60.5h0M457.0 60.1h0M457.4 61.5h0M457.8 58.8h0M458.2 60.8h0M458.6 58.1h0M459.0 58.4h0M459.4 59.5h0M459.8 59.7h0M460.2 59.2h0M460.6 58.5h0M461.0 58.0h0M461.4 57.8h0M461.8 57.9h0M462.2 57.0h0M462.6 57.3h0M463.0 57.3h0M463.3 56.6h0M463.7 57.1h0M464.1 56.8h0M464.5 57.9h0M464.8 56.2h0M465.2 55.4h0M465.6 55.2h0M465.9 55.4h0M466.3 56.0h0M466.7 54.7h0M467.0 55.2h0M467.4 56.2h0M467.7 52.7h0M468.1 53.4h0M468.5 54.3h0M468.8 54.3h0M469.2 54.0h0M469.5 53.3h0M469.9 54.0h0M470.2 53.5h0M470.5 52.7h0M470.9 54.8h0M471.2 53.0h0M471.6 52.2h0M471.9 52.4h0M472.2 52.1h0M472.6 52.1h0M472.9 50.3h0M473.2 51.4h0M473.6 52.4h0M473.9 50.6h0M474.2 51.3h0M474.5 51.9h0M474.9 51.7h0M475.2 52.1h0M475.5 49.6h0M475.8 50.4h0M476.1 50.3h0M476.5 50.9h0M476.8 51.1h0M477.1 48.7h0M477.4 50.9h0M477.7 48.9h0M478.0 50.3h0M478.3 48.6h0M478.6 49.7h0M478.9 50.3h0M479.3 49.2h0M479.6 49.3h0M479.9 49.6h0M480.2 49.1h0M480.5 48.8h0M480.8 49.8h0M481.0 49.3h0M481.3 48.3h0M481.6 49.9h0M481.9 47.5h0M482.2 48.7h0M482.5 47.8h0M482.8 48.0h0M483.1 48.2h0M483.4 47.8h0M483.7 48.0h0M484.0 46.4h0M484.2 46.3h0M484.5 47.6h0M484.8 46.5h0M485.1 46.3h0M485.4 46.0h0M485.6 47.7h0M485.9 47.3h0M486.2 47.7h0M486.5 46.1h0M486.7 46.6h0M487.0 45.9h0M487.3 47.0h0M487.6 47.5h0M487.8 45.9h0M488.1 47.3h0M488.4 46.9h0M488.6 46.2h0M488.9 45.0h0M489.2 47.0h0M489.4 46.0h0M489.7 45.7h0M489.9 46.2h0M490.2 46.2h0M490.5 46.8h0M490.7 45.2h0M491.0 46.5h0M491.2 46.6h0M491.5 46.5h0M491.8 45.5h0M492.0 45.2h0M492.3 46.1h0M492.5 45.5h0M492.8 45.5h0M493.0 46.2h0M493.3 45.2h0M493.5 44.1h0M493.8 45.0h0M494.0 44.1h0M494.3 45.6h0M494.5 45.3h0M494.8 44.7h0M495.0 45.0h0M495.2 45.4h0M495.5 44.9h0M495.7 45.6h0M496.0 44.8h0M496.2 45.3h0M496.4 45.5h0M496.7 45.5h0M496.9 44.3h0M497.2 45.1h0M497.4 43.6h0M497.6 44.0h0M497.9 43.5h0M498.1 45.1h0M498.3 43.8h0M498.6 44.4h0M498.8 44.3h0M499.0 44.4h0M499.3 44.1h0M499.5 44.5h0M499.7 45.2h0M499.9 44.3h0M500.2 44.5h0M500.4 44.6h0M500.6 44.1h0M500.8 43.7h0M501.1 43.9h0M501.3 44.6h0M501.5 43.4h0M501.7 43.8h0M502.0 44.5h0M502.2 44.4h0M502.4 44.0h0M502.6 44.3h0M502.8 44.0h0M503.1 43.4h0M503.3 43.2h0M503.5 43.6h0M503.7 44.3h0M503.9 43.6h0M504.1 43.4h0M504.4 43.4h0M504.6 43.1h0M504.8 43.7h0M505.0 43.2h0M505.2 43.9h0M505.4 42.7h0M505.6 43.8h0M505.8 43.3h0M506.0 42.7h0M506.3 44.0h0M506.5 43.6h0M506.7 42.7h0M506.9 43.4h0M507.1 44.0h0M507.3 43.6h0M507.5 44.3h0M507.7 44.3h0M507.9 44.3h0M508.1 44.2h0M508.3 44.7h0M508.5 44.4h0M508.7 44.4h0M508.9 43.2h0M509.1 44.7h0M509.3 44.9h0M509.5 44.2h0M509.7 44.1h0M509.9 45.4h0M510.1 43.5h0M510.3 44.7h0M510.5 45.7h0M510.7 44.1h0M510.9 45.0h0M511.1 45.6h0M511.3 44.6h0M511.5 45.0h0M511.7 45.2h0M511.9 44.3h0M512.1 44.8h0M512.2 45.0h0M512.4 45.3h0M512.6 44.9h0M512.8 44.9h0M513.0 44.5h0M513.2 44.9h0M513.4 45.6h0M513.6 45.2h0M513.8 44.7h0M513.9 44.8h0M514.1 46.5h0M514.3 45.9h0M514.5 45.7h0M514.7 44.2h0M514.9 45.8h0M515.1 45.7h0M515.2 46.4h0M515.4 45.8h0M515.6 45.5h0M515.8 45.9h0M516.0 44.5h0M516.2 46.3h0M516.3 45.9h0M516.5 45.3h0M516.7 46.5h0M516.9 46.9h0M517.1 45.0h0M517.2 45.5h0M517.4 46.1h0M517.6 46.1h0M517.8 45.8h0M517.9 45.6h0M518.1 47.5h0M518.3 46.9h0M518.5 45.6h0M518.7 45.6h0M518.8 47.5h0M519.0 47.1h0M519.2 47.7h0M519.3 47.1h0M519.5 46.2h0M519.7 46.9h0M519.9 45.6h0M520.0 46.4h0M520.2 46.9h0M520.4 47.3h0M520.6 46.6h0M520.7 47.1h0M520.9 47.5h0M521.1 47.5h0M521.2 47.7h0M521.4 47.5h0M521.6 47.2h0M521.7 48.0h0M521.9 47.6h0M522.1 47.1h0M522.2 47.3h0M522.4 47.8h0M522.6 47.7h0M522.7 48.0h0M522.9 47.9h0M523.1 48.1h0M523.2 48.0h0M523.4 47.3h0M523.6 48.4h0M523.7 48.9h0M523.9 48.6h0M524.1 48.2h0M524.2 48.7h0M524.4 47.8h0M524.5 47.3h0M524.7 48.6h0M524.9 48.0h0M525.0 49.2h0M525.2 48.0h0M525.3 47.4h0M525.5 48.2h0M525.7 50.0h0M525.8 48.7h0M526.0 48.1h0M526.1 48.6h0M526.3 49.5h0M526.4 49.6h0M526.6 49.4h0M526.8 50.3h0M526.9 49.9h0M527.1 49.4h0M527.2 49.9h0M527.4 50.7h0M527.5 50.3h0M527.7 50.4h0M527.8 49.0h0M528.0 49.7h0M528.2 50.3h0M528.3 49.7h0M528.5 50.7h0M528.6 50.4h0M528.8 50.7h0M528.9 50.0h0M529.1 51.9h0M529.2 51.2h0M529.4 50.2h0M529.5 50.5h0M529.7 52.2h0M529.8 50.3h0M530.0 51.3h0M530.1 51.4h0M530.3 50.8h0M530.4 50.0h0M530.6 51.1h0M530.7 51.3h0M530.9 51.9h0M531.0 51.7h0M531.2 51.3h0M531.3 51.9h0M531.5 51.8h0M531.6 51.6h0M531.7 51.6h0M531.9 51.4h0M532.0 52.2h0M532.2 50.9h0M532.3 51.3h0M532.5 51.9h0M532.6 50.8h0M532.8 51.7h0M532.9 50.6h0M533.0 51.6h0M533.2 52.6h0M533.3 52.7h0M533.5 52.3h0M533.6 52.2h0M533.8 51.4h0M533.9 53.9h0M534.0 53.0h0M534.2 53.5h0M534.3 52.1h0M534.5 52.7h0M534.6 51.5h0M534.7 53.6h0M534.9 53.8h0M535.0 51.6h0M535.2 53.1h0M535.3 53.7h0M535.4 51.9h0M535.6 52.0h0M535.7 52.6h0M535.9 53.0h0M536.0 52.5h0M536.1 53.7h0M536.3 53.9h0M536.4 54.3h0M536.5 54.4h0M536.7 55.1h0M536.8 54.9h0M537.0 53.0h0M537.1 53.7h0M537.2 53.3h0M537.4 53.4h0M537.5 54.2h0M537.6 54.4h0M537.8 54.8h0M537.9 53.2h0M538.0 53.6h0M538.2 54.6h0M538.3 54.5h0M538.4 54.5h0M538.6 54.8h0M538.7 54.3h0M538.8 55.5h0M539.0 55.3h0M539.1 55.0h0M539.2 54.6h0M539.4 55.0h0M539.5 53.5h0M539.6 54.5h0M539.7 55.4h0M539.9 54.2h0M540.0 55.7h0M540.1 55.7h0M540.3 54.5h0M540.4 55.6h0M540.5 55.6h0M540.7 56.3h0M540.8 56.5h0M540.9 56.1h0M541.0 55.5h0M541.2 56.1h0M541.3 56.3h0M541.4 57.1h0M541.6 56.8h0M541.7 56.0h0M541.8 55.5h0M541.9 56.5h0M542.1 56.2h0M542.2 56.0h0M542.3 56.9h0M542.4 56.7h0M542.6 57.3h0M542.7 57.7h0M542.8 57.0h0M542.9 59.4h0M543.1 57.2h0M543.2 58.5h0M543.3 57.8h0M543.4 58.7h0M543.6 56.0h0M543.7 57.3h0M543.8 58.2h0M543.9 58.6h0M544.1 60.2h0M544.2 58.5h0M544.3 59.4h0M544.4 59.1h0M544.5 59.3h0M544.7 59.0h0M544.8 58.5h0M544.9 59.2h0M545.0 57.9h0M545.2 59.9h0M545.3 58.1h0M545.4 59.3h0M545.5 61.0h0M545.6 59.0h0M545.8 59.3h0M545.9 60.4h0M546.0 59.5h0M546.1 58.8h0M546.2 59.8h0M546.4 60.2h0M546.5 60.4h0M546.6 59.1h0M546.7 61.5h0M546.8 61.5h0M546.9 60.1h0M547.1 60.4h0M547.2 59.8h0M547.3 61.6h0M547.4 59.7h0M547.5 61.1h0M547.6 60.1h0M547.8 60.0h0M547.9 61.3h0M548.0 62.0h0M548.1 60.8h0M548.2 60.3h0M548.3 61.7h0M548.5 61.0h0M548.6 61.4h0M548.7 62.6h0M548.8 62.3h0M548.9 60.9h0M549.0 63.5h0M549.2 61.5h0M549.3 62.3h0M549.4 61.1h0M549.5 61.7h0M549.6 60.2h0M549.7 63.6h0M549.8 63.2h0M549.9 60.9h0M550.1 60.7h0M550.2 60.7h0M550.3 63.4h0M550.4 61.9h0M550.5 62.4h0M550.6 62.2h0M550.7 62.4h0M550.8 61.6h0M551.0 62.7h0M551.1 61.4h0M551.2 62.8h0M551.3 63.2h0M551.4 63.4h0M551.5 62.9h0M551.6 62.3h0M551.7 63.5h0M551.8 62.9h0M552.0 65.0h0M552.1 64.3h0M552.2 63.6h0M552.3 63.4h0M552.4 63.2h0M552.5 63.1h0M552.6 63.8h0M552.7 64.5h0M552.8 64.8h0M552.9 64.9h0M553.1 66.5h0M553.2 63.9h0M553.3 64.7h0M553.4 67.0h0M553.5 63.1h0M553.6 64.5h0M553.7 65.2h0M553.8 65.3h0M553.9 65.7h0M554.0 65.1h0M554.1 65.8h0M554.2 65.6h0M554.3 66.4h0M554.4 63.9h0M554.6 65.0h0M554.7 65.9h0M554.8 65.0h0M554.9 65.1h0M555.0 66.8h0M555.1 65.7h0M555.2 67.0h0M555.3 67.2h0M555.4 66.9h0M555.5 67.2h0M555.6 66.7h0M555.7 65.5h0M555.8 67.0h0M555.9 67.5h0M556.0 66.6h0M556.1 67.2h0M556.2 68.1h0M556.3 66.6h0M556.4 68.2h0M556.5 69.5h0M556.6 67.2h0M556.7 68.0h0M556.9 67.8h0M557.0 69.6h0M557.1 68.4h0M557.2 69.1h0M557.3 67.6h0M557.4 68.4h0M557.5 68.5h0M557.6 66.8h0M557.7 70.1h0M557.8 69.7h0M557.9 67.1h0M558.0 69.7h0M558.1 68.9h0M558.2 69.6h0M558.3 69.6h0M558.4 67.8h0M558.5 69.2h0M558.6 71.0h0M558.7 69.0h0M558.8 68.6h0M558.9 68.4h0M559.0 68.6h0M559.1 70.3h0M559.2 71.8h0M559.3 70.6h0M559.4 70.5h0M559.5 72.6h0M559.6 69.8h0M559.7 69.8h0M559.8 71.1h0M559.9 71.2h0M560.0 69.7h0M560.1 69.6h0M560.2 71.2h0M560.3 71.3h0M560.4 69.7h0M560.5 71.0h0M560.6 70.7h0M560.7 71.8h0M560.8 71.3h0M560.8 71.4h0M560.9 71.2h0M561.0 72.8h0M561.1 73.2h0M561.2 71.5h0M561.3 72.9h0M561.4 71.3h0M561.5 72.2h0M561.6 73.0h0M561.7 73.9h0M561.8 72.0h0M561.9 72.4h0M562.0 72.8h0M562.1 71.1h0M562.2 72.8h0M562.3 72.1h0M562.4 73.3h0M562.5 71.8h0M562.6 71.0h0M562.7 73.2h0M562.8 73.6h0M562.9 72.8h0M563.0 74.4h0M563.1 73.3h0M563.1 73.0h0M563.2 74.3h0M563.3 72.2h0M563.4 73.3h0M563.5 74.1h0M563.6 75.1h0M563.7 74.1h0M563.8 74.7h0M563.9 73.8h0M564.0 74.9h0M564.1 76.5h0M564.2 74.1h0M564.3 77.4h0M564.4 74.3h0M564.5 75.2h0M564.5 75.4h0M564.6 76.5h0M564.7 74.1h0M564.8 73.3h0M564.9 76.3h0M565.0 76.6h0M565.1 76.5h0M565.2 78.5h0M565.3 76.3h0M565.4 76.4h0M565.5 77.3h0M565.6 76.8h0M565.6 78.3h0M565.7 75.2h0M565.8 76.2h0M565.9 74.5h0M566.0 77.8h0M566.1 76.5h0M566.2 78.1h0M566.3 79.5h0M566.4 77.3h0M566.5 77.1h0M566.5 76.9h0M566.6 76.6h0M566.7 77.0h0M566.8 78.5h0M566.9 77.9h0M567.0 78.0h0M567.1 77.9h0M567.2 79.2h0M567.3 78.8h0M567.4 78.2h0M567.4 79.2h0M567.5 78.4h0M567.6 77.4h0M567.7 80.4h0M567.8 79.4h0M567.9 77.9h0M568.0 80.2h0M568.1 79.5h0M568.1 77.5h0M568.2 81.1h0M568.3 79.8h0M568.4 80.5h0M568.5 79.8h0M568.6 79.5h0M568.7 78.1h0M568.8 81.0h0M568.8 80.0h0M568.9 79.8h0M569.0 80.6h0M569.1 80.4h0M569.2 81.1h0M569.3 80.1h0M569.4 80.5h0M569.5 78.3h0M569.5 80.3h0M569.6 81.6h0M569.7 82.5h0M569.8 80.6h0M569.9 81.0h0M570.0 83.0h0M570.1 81.0h0M570.1 82.3h0M570.2 83.4h0M570.3 81.7h0M570.4 83.1h0M570.5 81.0h0M570.6 82.1h0M570.6 81.9h0M570.7 82.2h0M570.8 83.5h0M570.9 84.9h0M571.0 81.6h0M571.1 81.8h0M571.2 83.1h0M571.2 81.4h0M571.3 83.3h0M571.4 83.5h0M571.5 82.6h0M571.6 83.6h0M571.7 81.3h0M571.7 84.1h0M571.8 81.5h0M571.9 82.6h0M572.0 82.8h0M572.1 83.1h0M572.2 84.7h0M572.2 83.8h0M572.3 83.4h0M572.4 84.6h0M572.5 85.9h0M572.6 84.1h0M572.7 84.6h0M572.7 85.8h0M572.8 84.7h0M572.9 83.0h0M573.0 87.3h0M573.1 87.3h0M573.1 82.4h0M573.2 84.8h0M573.3 85.4h0M573.4 86.2h0M573.5 85.9h0M573.6 84.9h0M573.6 84.1h0M573.7 85.5h0M573.8 86.7h0M573.9 84.3h0M574.0 84.4h0M574.0 85.7h0M574.1 83.6h0M574.2 85.7h0M574.3 85.5h0M574.4 86.7h0M574.4 85.4h0M574.5 85.3h0M574.6 86.0h0M574.7 86.5h0M574.8 85.9h0M574.8 86.8h0M574.9 87.8h0M575.0 88.4h0M575.1 89.1h0M575.2 86.3h0M575.2 86.8h0M575.3 84.9h0M575.4 89.8h0M575.5 86.7h0M575.6 87.7h0M575.6 88.4h0M575.7 86.3h0M575.8 88.6h0M575.9 88.1h0M576.0 86.0h0M576.0 88.7h0M576.1 89.9h0M576.2 86.3h0M576.3 89.6h0M576.4 89.0h0M576.4 89.4h0M576.5 89.5h0M576.6 90.6h0M576.7 88.9h0M576.7 90.3h0M576.8 88.8h0M576.9 90.3h0M577.0 88.5h0M577.1 89.5h0M577.1 91.8h0M577.2 90.4h0M577.3 89.7h0M577.4 88.6h0M577.4 89.2h0M577.5 90.5h0M577.6 91.5h0M577.7 90.9h0M577.7 91.2h0M577.8 90.6h0M577.9 92.4h0M578.0 90.3h0M578.1 90.2h0M578.1 92.1h0M578.2 91.2h0M578.3 90.9h0M578.4 90.6h0M578.4 91.1h0M578.5 92.3h0M578.6 92.0h0M578.7 90.2h0M578.7 92.3h0M578.8 92.1h0M578.9 90.8h0M579.0 93.0h0M579.0 91.8h0M579.1 91.9h0M579.2 93.4h0M579.3 94.1h0M579.3 91.7h0M579.4 93.2h0M579.5 91.7h0M579.6 95.7h0M579.6 92.3h0M579.7 94.5h0M579.8 92.3h0M579.9 94.3h0M579.9 96.1h0M580.0 90.8h0M580.1 93.0h0M580.2 94.3h0M580.2 93.6h0M580.3 93.0h0M580.4 96.6h0M580.5 94.1h0M580.5 92.0h0M580.6 95.3h0M580.7 92.1h0M580.8 95.8h0M580.8 93.8h0M580.9 94.8h0M581.0 96.3h0M581.0 94.9h0M581.1 93.1h0M581.2 92.8h0M581.3 96.5h0M581.3 96.1h0M581.4 94.2h0M581.5 96.4h0M581.6 96.1h0M581.6 96.3h0M581.7 93.0h0M581.8 95.3h0M581.9 96.9h0M581.9 96.8h0M582.0 97.1h0M582.1 93.4h0M582.1 96.4h0M582.2 96.9h0M582.3 99.3h0M582.4 95.2h0M582.4 96.1h0M582.5 96.7h0M582.6 97.9h0M582.6 96.3h0M582.7 98.4h0M582.8 96.0h0M582.9 97.4h0M582.9 96.5h0M583.0 97.5h0M583.1 96.5h0M583.1 95.4h0M583.2 99.0h0M583.3 98.0h0M583.4 97.0h0M583.4 98.1h0M583.5 99.2h0M583.6 96.8h0M583.6 98.0h0M583.7 98.9h0M583.8 99.0h0M583.9 97.9h0M583.9 95.8h0M584.0 100.2h0M584.1 99.1h0M584.1 98.8h0M584.2 98.5h0M584.3 99.3h0M584.3 98.5h0M584.4 97.8h0M584.5 98.2h0M584.6 98.5h0M584.6 98.6h0M584.7 98.0h0M584.8 100.4h0M584.8 97.9h0M584.9 100.6h0M585.0 98.5h0M585.0 100.4h0M585.1 101.8h0M585.2 100.4h0M585.3 99.2h0M585.3 100.3h0M585.4 100.6h0M585.5 98.1h0M585.5 99.7h0M585.6 100.9h0M585.7 100.1h0M585.7 100.9h0M585.8 102.0h0M585.9 102.1h0M585.9 102.4h0M586.0 102.1h0M586.1 100.9h0M586.1 101.4h0M586.2 101.1h0M586.3 101.2h0M586.3 101.5h0M586.4 99.2h0M586.5 101.4h0M586.6 102.0h0M586.6 100.6h0M586.7 102.2h0M586.8 103.1h0M586.8 102.2h0M586.9 105.8h0M587.0 99.3h0M587.0 102.4h0M587.1 99.9h0M587.2 104.5h0M587.2 106.8h0M587.3 99.6h0M587.4 103.4h0M587.4 104.2h0M587.5 102.9h0M587.6 104.4h0M587.6 100.0h0M587.7 105.1h0M587.8 104.4h0M587.8 103.9h0M587.9 102.9h0M588.0 105.2h0M588.0 103.3h0M588.1 104.6h0M588.2 103.4h0M588.2 100.7h0M588.3 104.5h0M588.4 105.0h0M588.4 106.1h0M588.5 103.2h0M588.6 104.9h0M588.6 106.2h0M588.7 105.4h0M588.8 107.5h0M588.8 109.0h0M588.9 103.7h0M589.0 101.9h0M589.0 107.2h0M589.1 108.6h0M589.2 107.6h0M589.2 107.4h0M589.3 104.8h0M589.4 104.7h0M589.4 107.9h0M589.5 104.5h0M589.5 102.8h0M589.6 104.5h0M589.7 111.1h0M589.7 110.5h0M589.8 105.3h0M589.9 105.3h0M589.9 107.4h0M590.0 105.5h0M590.1 109.8h0M590.1 107.0h0M590.2 105.0h0M590.3 110.1h0M590.3 106.2h0M590.4 108.0h0M590.5 107.6h0M590.5 107.1h0M590.6 108.5h0M590.6 106.4h0M590.7 104.0h0M590.8 103.6h0M590.8 105.5h0M590.9 106.6h0M591.0 108.3h0M591.0 108.6h0M591.1 109.8h0M591.2 108.9h0M591.2 107.0h0M591.3 107.3h0M591.3 104.2h0M591.4 108.7h0M591.5 110.2h0M591.5 110.4h0M591.6 109.0h0M591.7 109.0h0M591.7 111.7h0M591.8 109.6h0M591.9 111.4h0M591.9 111.1h0M592.0 110.4h0M592.0 113.0h0M592.1 108.7h0M592.2 109.3h0M592.2 108.3h0M592.3 108.4h0M592.4 114.1h0M592.4 114.7h0M592.5 110.6h0M592.5 112.1h0M592.6 113.6h0M592.7 112.8h0M592.7 113.9h0M592.8 107.9h0M592.9 109.5h0M592.9 112.3h0M593.0 114.9h0M593.0 111.7h0M593.1 109.3h0M593.2 110.7h0M593.2 110.0h0M593.3 109.6h0M593.4 115.7h0M593.4 110.3h0M593.5 112.1h0M593.5 117.7h0M593.6 115.3h0M593.7 113.2h0M593.7 110.8h0M593.8 113.5h0M593.8 116.8h0M593.9 114.3h0M594.0 116.1h0M594.0 113.1h0M594.1 114.3h0M594.2 112.5h0M594.2 114.2h0M594.3 116.7h0M594.3 109.4h0M594.4 113.2h0M594.5 114.1h0M594.5 112.0h0M594.6 112.8h0M594.6 115.8h0M594.7 119.3h0M594.8 115.6h0M594.8 114.8h0M594.9 109.7h0M594.9 119.4h0M595.0 114.4h0M595.1 114.1h0M595.1 111.2h0M595.2 114.2h0M595.2 111.4h0M595.3 114.7h0M595.4 115.9h0M595.4 114.8h0M595.5 115.6h0M595.5 112.4h0M595.6 119.1h0M595.7 113.1h0M595.7 109.8h0M595.8 114.6h0M595.8 113.0h0M595.9 112.3h0M596.0 114.3h0M596.0 116.3h0M596.1 112.0h0M596.1 115.2h0M596.2 119.9h0M596.3 117.8h0M596.3 115.4h0M596.4 116.3h0M596.4 115.6h0M596.5 115.9h0M596.6 118.4h0M596.6 116.0h0M596.7 109.9h0M596.7 116.3h0M596.8 113.7h0M596.8 118.5h0M596.9 114.7h0M597.0 117.1h0M597.0 123.5h0M597.1 113.6h0M597.1 113.4h0M597.2 112.6h0M597.3 110.5h0M597.3 111.2h0M597.4 118.4h0M597.4 115.3h0M597.5 111.4h0M597.6 112.7h0M597.6 119.5h0M597.7 115.1h0M597.7 116.5h0M597.8 118.8h0M597.8 122.2h0M597.9 124.2h0M598.0 121.3h0M598.0 118.5h0M598.1 118.7h0M598.1 124.1h0M598.2 123.0h0M598.2 117.3h0M598.3 119.9h0M598.4 119.4h0M598.4 118.7h0M598.5 117.0h0M598.5 114.3h0M598.6 117.0h0M598.6 113.7h0M598.7 123.1h0M598.8 120.8h0M598.8 115.0h0M598.9 123.9h0M598.9 122.3h0M599.0 112.8h0M599.0 125.7h0M599.1 122.2h0M599.2 126.6h0M599.2 115.4h0M599.3 121.5h0M599.3 121.2h0M599.4 120.5h0M599.4 120.5h0M599.5 123.6h0M599.6 114.8h0M599.6 115.8h0M599.7 115.3h0M599.7 118.3h0M599.8 118.2h0M599.8 121.7h0M599.9 121.4h0M600.0 120.7h0M600.0 118.2h0M600.1 119.1h0M600.1 124.2h0M600.2 123.6h0M600.2 121.3h0M600.3 119.8h0M600.3 126.7h0M600.4 119.0h0M600.5 123.6h0M600.5 125.5h0M600.6 120.4h0M600.6 124.4h0M600.7 117.4h0M600.7 125.3h0M600.8 122.4h0M600.9 115.9h0M600.9 124.3h0M601.0 118.6h0M601.0 126.7h0M601.1 119.5h0M601.1 121.5h0M601.2 123.2h0M601.2 121.0h0M601.3 123.3h0M601.4 120.3h0M601.4 125.0h0M601.5 122.5h0M601.5 123.4h0M601.6 114.7h0M601.6 127.1h0M601.7 122.9h0M601.7 116.1h0M601.8 123.3h0M601.8 124.8h0M601.9 127.2h0M602.0 119.0h0M602.0 129.2h0M602.1 122.7h0M602.1 132.3h0M602.2 122.9h0M602.2 126.1h0M602.3 122.1h0M602.3 119.3h0M602.4 128.0h0M602.4 127.3h0M602.5 129.9h0M602.6 127.3h0M602.6 121.7h0M602.7 117.5h0M602.7 121.6h0M602.8 121.5h0M602.8 121.0h0M602.9 126.7h0M602.9 125.7h0M603.0 123.4h0M603.0 125.3h0M603.1 124.1h0M603.2 125.6h0M603.2 127.8h0M603.3 128.8h0M603.3 122.2h0M603.4 118.9h0M603.4 130.9h0M603.5 125.6h0M603.5 129.8h0M603.6 118.6h0M603.6 124.0h0M603.7 125.6h0M603.7 119.6h0M603.8 123.5h0M603.8 128.7h0M603.9 130.3h0M604.0 132.5h0M604.0 122.3h0M604.1 120.1h0M604.1 128.3h0M604.2 130.1h0M604.2 127.0h0M604.3 120.7h0M604.3 129.7h0M604.4 129.8h0M604.4 128.9h0M604.5 124.5h0M604.5 128.0h0M604.6 130.1h0M604.6 124.4h0M604.7 118.9h0M604.7 128.4h0M604.8 129.1h0M604.9 127.2h0M604.9 131.1h0M605.0 124.7h0M605.0 127.0h0M605.1 126.0h0M605.1 130.0h0M605.2 134.6h0M605.2 126.5h0M605.3 136.8h0M605.3 134.6h0M605.4 131.4h0M605.4 130.5h0M605.5 135.9h0M605.5 127.2h0M605.6 127.6h0M605.6 123.4h0M605.7 130.4h0M605.7 134.5h0M605.8 130.8h0M605.8 130.4h0M605.9 127.6h0M606.0 129.4h0M606.0 122.1h0M606.1 133.6h0M606.1 127.0h0M606.2 123.8h0M606.2 125.5h0M606.3 125.2h0M606.3 133.1h0M606.4 134.2h0M606.4 122.9h0M606.5 133.7h0M606.5 133.6h0M606.6 126.8h0M606.6 122.5h0M606.7 126.1h0M606.7 126.7h0M606.8 131.4h0M606.8 128.2h0M606.9 120.2h0M606.9 131.1h0M607.0 122.7h0M607.0 134.5h0M607.1 124.4h0M607.1 126.9h0M607.2 126.2h0M607.2 127.8h0M607.3 136.8h0M607.3 134.7h0M607.4 133.6h0M607.4 132.3h0M607.5 123.2h0M607.5 128.3h0M607.6 128.2h0M607.6 126.2h0M607.7 133.6h0M607.7 127.5h0M607.8 127.7h0M607.8 126.1h0M607.9 121.1h0M607.9 134.4h0M608.0 138.1h0M608.0 132.5h0M608.1 126.8h0M608.1 121.2h0M608.2 132.7h0M608.2 138.2h0M608.3 133.6h0M608.3 136.9h0M608.4 139.9h0M608.4 138.2h0M608.5 130.1h0M608.5 138.0h0M608.6 136.7h0M608.6 124.7h0M608.7 130.7h0M608.7 125.4h0M608.8 132.4h0M608.8 136.2h0M608.9 127.5h0M608.9 122.3h0M609.0 140.3h0M609.0 135.5h0M609.1 141.5h0M609.1 126.5h0M609.2 139.5h0M609.2 145.2h0M609.3 144.9h0M609.3 132.9h0M609.4 135.6h0M609.4 133.3h0M609.5 139.8h0M609.5 140.2h0M609.6 135.0h0M609.6 126.9h0M609.7 138.8h0M609.7 132.1h0M609.8 138.4h0M609.8 136.4h0M609.9 144.3h0M609.9 141.6h0M610.0 132.6h0M610.0 137.3h0M610.1 145.6h0M610.1 132.4h0M610.2 138.1h0M610.2 142.6h0M610.3 143.1h0M610.3 138.9h0M610.4 128.2h0M610.4 128.6h0M610.5 137.6h0M610.5 138.5h0M610.6 150.0h0M610.6 131.3h0M610.7 143.3h0M610.7 141.2h0M610.8 126.6h0M610.8 131.8h0M610.9 137.9h0M610.9 133.9h0M611.0 136.1h0M611.0 140.0h0M611.1 132.2h0M611.1 140.2h0M611.1 133.5h0M611.2 134.1h0M611.2 140.9h0M611.3 134.1h0M611.3 139.6h0M611.4 147.9h0M611.4 138.1h0M611.5 137.1h0M611.5 142.8h0M611.6 135.9h0M611.6 145.2h0M611.7 130.2h0M611.7 142.4h0M611.8 135.3h0M611.8 133.5h0M611.9 150.2h0M611.9 133.3h0M612.0 150.3h0M612.0 143.8h0M612.1 149.8h0M612.1 132.8h0M612.2 148.2h0M612.2 150.3h0M612.2 138.8h0M612.3 138.8h0M612.3 157.1h0M612.4 141.2h0M612.4 137.1h0M612.5 135.8h0M612.5 143.6h0M612.6 142.8h0M612.6 141.8h0M612.7 153.9h0M612.7 138.3h0M612.8 144.4h0M612.8 152.3h0M612.9 133.9h0M612.9 149.3h0M613.0 155.7h0M613.0 131.6h0M613.0 133.5h0M613.1 134.0h0M613.1 128.3h0M613.2 145.4h0M613.2 128.3h0M613.3 146.0h0M613.3 153.9h0M613.4 130.2h0M613.4 139.9h0M613.5 128.1h0M613.5 148.9h0M613.6 137.0h0M613.6 140.6h0M613.7 143.2h0M613.7 147.5h0M613.7 140.3h0M613.8 143.2h0M613.8 139.0h0M613.9 144.2h0M613.9 134.3h0M614.0 144.0h0M614.0 128.6h0M614.1 139.8h0M614.1 160.6h0M614.2 144.6h0M614.2 134.0h0M614.3 146.4h0M614.3 136.5h0M614.4 131.1h0M614.4 138.5h0M614.4 151.1h0M614.5 148.1h0M614.5 143.9h0M614.6 137.3h0M614.6 136.1h0M614.7 157.4h0M614.7 147.4h0M614.8 137.4h0M614.8 128.0h0M614.9 134.1h0M614.9 166.9h0M614.9 136.0h0M615.0 145.1h0M615.0 147.8h0M615.1 144.6h0M615.1 143.7h0M615.2 134.5h0M615.2 137.3h0M615.3 162.5h0M615.3 140.0h0M615.4 154.7h0M615.4 132.0h0M615.4 144.4h0M615.5 149.4h0M615.5 157.1h0M615.6 137.3h0M615.6 153.0h0M615.7 151.1h0M615.7 140.9h0M615.8 152.2h0M615.8 139.6h0M615.9 140.6h0M615.9 147.6h0M615.9 129.0h0M616.0 147.0h0M616.0 139.1h0M616.1 135.0h0M616.1 144.5h0M616.2 156.2h0M616.2 144.9h0M616.3 161.7h0M616.3 138.1h0M616.4 136.8h0M616.4 165.1h0M616.4 153.3h0M616.5 159.2h0M616.5 141.7h0M616.6 158.0h0M616.6 152.4h0M616.7 156.6h0M616.7 150.2h0M616.8 162.8h0M616.8 143.9h0M616.8 141.0h0M616.9 136.2h0M616.9 163.0h0M617.0 143.5h0M617.0 140.6h0M617.1 141.7h0M617.1 146.6h0M617.2 138.7h0M617.2 148.3h0M617.2 145.1h0M617.3 146.0h0M617.3 142.1h0M617.4 152.1h0M617.4 147.2h0M617.5 153.2h0M617.5 154.8h0M617.6 156.0h0M617.6 131.1h0M617.6 147.0h0M617.7 144.4h0M617.7 161.4h0M617.8 136.7h0M617.8 145.5h0M617.9 149.9h0M617.9 149.6h0M617.9 164.6h0M618.0 148.7h0M618.0 164.6h0M618.1 138.3h0M618.1 134.8h0M618.2 168.0h0M618.2 159.0h0M618.3 159.7h0M618.3 155.6h0M618.3 160.0h0M618.4 141.5h0M618.4 165.8h0M618.5 148.9h0M618.5 166.5h0M618.6 155.9h0M618.6 133.7h0M618.6 141.2h0M618.7 168.8h0M618.7 153.8h0M618.8 151.1h0M618.8 158.5h0M618.9 151.0h0M618.9 149.8h0M618.9 157.1h0M619.0 157.8h0M619.0 174.8h0M619.1 156.7h0M619.1 179.6h0M619.2 178.9h0M619.2 178.0h0M619.2 169.9h0M619.3 158.3h0M619.3 158.5h0M619.4 155.3h0M619.4 148.7h0M619.5 156.3h0M619.5 149.9h0M619.5 178.3h0M619.6 164.3h0M619.6 152.3h0M619.7 135.4h0M619.7 157.1h0M619.8 152.9h0M619.8 145.2h0M619.8 144.7h0M619.9 133.4h0M619.9 165.7h0M620.0 157.5h0M620.0 188.9h0M620.1 158.1h0M620.1 156.8h0M620.1 178.0h0M620.2 160.6h0M620.2 161.1h0M620.3 154.5h0M620.3 151.8h0M620.4 179.5h0M620.4 172.9h0M620.4 182.8h0M620.5 155.2h0M620.5 160.0h0M620.6 148.8h0M620.6 173.1h0M620.7 142.6h0M620.7 167.8h0M620.7 175.3h0M620.8 179.9h0M620.8 148.5h0M620.9 175.7h0M620.9 151.5h0M621.0 151.0h0M621.0 143.9h0M621.0 177.2h0M621.1 184.3h0M621.1 153.4h0M621.2 151.3h0M621.2 156.8h0M621.2 194.4h0M621.3 175.8h0M621.3 154.4h0M621.4 138.2h0M621.4 152.9h0M621.5 179.1h0M621.5 189.2h0M621.5 158.4h0M621.6 152.9h0M621.6 155.4h0M621.7 137.3h0M621.7 175.8h0M621.7 148.0h0M621.8 178.4h0M621.8 139.8h0M621.9 145.7h0M621.9 167.1h0M622.0 152.6h0M622.0 174.8h0M622.0 163.2h0M622.1 147.2h0M622.1 172.7h0M622.2 176.1h0M622.2 137.3h0M622.2 191.3h0M622.3 171.1h0M622.3 175.2h0M622.4 138.2h0M622.4 153.9h0M622.4 159.0h0M622.5 180.5h0M622.5 143.9h0M622.6 151.9h0M622.6 136.1h0M622.7 160.9h0M622.7 169.6h0M622.7 141.0h0M622.8 156.2h0M622.8 172.4h0M622.9 189.3h0M622.9 175.0h0M622.9 160.5h0M623.0 148.3h0M623.0 151.8h0M623.1 155.6h0M623.1 167.3h0M623.1 164.4h0M623.2 191.5h0M623.2 169.8h0M623.3 150.2h0M623.3 189.9h0M623.3 180.5h0M623.4 167.2h0M623.4 155.4h0M623.5 139.1h0M623.5 151.2h0M623.6 180.4h0M623.6 154.4h0M623.6 147.1h0M623.7 169.2h0M623.7 170.1h0M623.8 176.0h0M623.8 176.9h0M623.8 189.1h0M623.9 154.3h0M623.9 182.4h0M624.0 152.3h0M624.0 177.9h0M624.0 169.6h0M624.1 170.8h0M624.1 182.7h0M624.2 166.7h0M624.2 185.2h0M624.2 181.4h0M624.3 169.4h0M624.3 158.9h0M624.4 156.3h0M624.4 159.6h0M624.4 164.5h0M624.5 167.2h0M624.5 205.6h0M624.6 178.3h0M624.6 180.5h0M624.6 155.1h0M624.7 157.4h0M624.7 163.2h0M624.8 171.3h0M624.8 152.7h0M624.8 195.1h0M624.9 159.9h0M624.9 186.4h0M625.0 137.0h0M625.0 168.4h0M625.0 173.2h0M625.1 171.8h0M625.1 178.8h0M625.2 173.4h0M625.2 171.5h0M625.2 140.4h0M625.3 158.2h0M625.3 137.4h0M625.4 179.5h0M625.4 174.2h0M625.4 166.1h0M625.5 156.8h0M625.5 160.5h0M625.5 200.2h0M625.6 198.4h0M625.6 168.5h0M625.7 191.0h0M625.7 145.6h0M625.7 140.5h0M625.8 162.3h0M625.8 156.5h0M625.9 161.3h0M625.9 172.9h0M625.9 208.4h0M626.0 159.9h0M626.0 170.7h0M626.1 174.6h0M626.1 169.5h0M626.1 185.7h0M626.2 199.9h0M626.2 151.5h0M626.3 172.9h0M626.3 166.3h0M626.3 176.3h0M626.4 147.4h0M626.4 144.0h0M626.4 138.9h0M626.5 179.3h0M626.5 173.8h0M626.6 171.8h0M626.6 139.1h0M626.6 165.1h0M626.7 159.4h0M626.7 149.6h0M626.8 157.1h0M626.8 182.6h0M626.8 180.1h0M626.9 170.7h0M626.9 179.7h0M627.0 162.1h0M627.0 172.4h0M627.0 171.9h0M627.1 180.6h0M613.9 119.8h0M626.3 212.9h0M626.5 221.0h0M624.8 225.3h0M624.0 137.5h0M626.0 146.0h0M397.0 99.5h0M401.0 95.0h0M403.0 92.5h0M409.0 89.0h0M413.0 87.5h0" stroke="#1f77b4" stroke-width="2.6" stroke-linecap="round" fill="none"/>
<polyline clip-path="url(#c2)" points="505.0,43.7 517.3,45.7 528.6,49.6 540.0,55.0 551.4,62.6 562.7,73.0 574.0,86.5 581.0,97.5 587.4,111.0 594.6,127.3 603.2,144.6 608.0,153.5 611.5,158.8 614.5,162.0 618.0,163.8 622.0,164.5 627.3,164.8" stroke="#ff7f0e" stroke-opacity="0.8" stroke-width="1.1" fill="none"/>
<rect x="366.4" y="34.4" width="273.4" height="200.1" fill="none" stroke="#222" stroke-width="0.55"/>
<path d="M520.90 234.5v1.9M405.57 234.5v1.1M434.63 234.5v1.1M455.24 234.5v1.1M471.23 234.5v1.1M484.29 234.5v1.1M495.34 234.5v1.1M504.91 234.5v1.1M513.35 234.5v1.1M570.57 234.5v1.1M599.63 234.5v1.1M620.24 234.5v1.1M636.23 234.5v1.1M366.4 79.20h-1.9M366.4 194.20h-1.9M366.4 228.82h-1.1M366.4 219.71h-1.1M366.4 212.01h-1.1M366.4 205.34h-1.1M366.4 199.46h-1.1M366.4 159.58h-1.1M366.4 139.33h-1.1M366.4 124.96h-1.1M366.4 113.82h-1.1M366.4 104.71h-1.1M366.4 97.01h-1.1M366.4 90.34h-1.1M366.4 84.46h-1.1M366.4 44.58h-1.1" stroke="#222" stroke-width="0.55" fill="none"/>
<text x="344.90" y="81.80" font-size="6.94">10</text>
<text x="354.04" y="79.10" font-size="4.86">−2</text>
<text x="344.90" y="196.80" font-size="6.94">10</text>
<text x="354.04" y="194.10" font-size="4.86">−3</text>
<text x="512.35" y="246.90" font-size="6.94">10</text>
<text x="521.48" y="244.20" font-size="4.86">−1</text>
<text x="491.71" y="258.60" font-size="6.94">Q(A</text>
<text x="504.62" y="255.90" font-size="4.86">−1</text>
<text x="511.79" y="258.60" font-size="6.94">)</text>
<g transform="translate(337.90 161.08) rotate(-90)">
<text x="0" y="0" font-size="6.94">Intensity(cm</text>
<text x="43.49" y="-2.7" font-size="4.86">−1</text>
<text x="50.66" y="0" font-size="6.94">)</text>
</g>
<rect x="370" y="204.3" width="191.2" height="24.6" rx="1.2" fill="#8a8a8a" fill-opacity="0.7"/>
<rect x="369" y="203.3" width="191.2" height="24.6" rx="1.2" fill="#fff" fill-opacity="0.95" stroke="#cccccc" stroke-width="0.5"/>
<circle cx="379.6" cy="209.0" r="1.25" fill="#1f77b4"/>
<path d="M371.3 220.0h14.6" stroke="#ff7f0e" stroke-opacity="0.72" stroke-width="0.9"/>
<text x="393.00" y="211.60" font-size="6.94" text-anchor="start" textLength="143.40" lengthAdjust="spacingAndGlyphs" >PBI-A_pH10_20%MeOH_BgSub_D10.dat</text>
<text x="393.00" y="222.60" font-size="6.94" text-anchor="start" textLength="162.70" lengthAdjust="spacingAndGlyphs" >M1 [PBI-A_pH10_20%MeOH_BgSub_D10.dat]</text>
<rect x="322.8" y="304" width="325.2" height="133.8" fill="#fff"/>
<clipPath id="c3"><rect x="356.6" y="313.3" width="283.1" height="90.0"/></clipPath>
<polygon clip-path="url(#c3)" points="368.0,351.8 370.0,351.8 372.0,351.9 374.0,352.0 376.0,352.1 378.0,352.2 380.0,352.2 382.0,352.3 384.0,352.4 386.0,352.5 388.0,352.6 390.0,352.7 392.0,352.8 394.0,352.9 396.0,353.0 398.0,353.1 400.0,353.2 402.0,353.3 404.0,353.4 406.0,353.5 408.0,353.7 410.0,353.9 412.0,354.1 414.0,354.3 416.0,354.4 418.0,354.6 420.0,354.8 422.0,355.0 424.0,355.2 426.0,355.3 428.0,355.5 430.0,355.6 432.0,355.8 434.0,356.0 436.0,356.1 438.0,356.3 440.0,356.4 442.0,356.6 444.0,356.8 446.0,356.9 448.0,356.9 450.0,356.9 452.0,356.9 454.0,356.9 456.0,356.9 458.0,356.9 460.0,356.9 462.0,356.9 464.0,356.9 466.0,356.9 468.0,356.8 470.0,356.6 472.0,356.5 474.0,356.3 476.0,356.2 478.0,356.1 480.0,355.9 482.0,355.7 484.0,355.4 486.0,355.1 488.0,354.8 490.0,354.6 492.0,353.9 494.0,353.4 496.0,352.8 498.0,352.2 500.0,351.6 502.0,350.7 504.0,349.8 506.0,348.9 508.0,348.0 510.0,347.1 512.0,346.2 514.0,345.3 516.0,344.3 518.0,343.4 520.0,342.4 522.0,341.5 524.0,340.5 526.0,339.5 528.0,338.5 530.0,337.6 532.0,336.6 534.0,335.7 536.0,334.8 538.0,333.9 540.0,333.0 542.0,332.1 544.0,331.2 546.0,330.5 548.0,329.8 550.0,329.0 552.0,328.2 554.0,327.8 556.0,327.4 558.0,327.0 560.0,326.6 562.0,326.4 564.0,326.3 566.0,326.2 568.0,326.3 570.0,326.5 572.0,326.8 574.0,327.0 576.0,327.6 578.0,328.5 580.0,329.3 582.0,330.2 584.0,331.2 586.0,332.5 588.0,333.7 590.0,334.9 592.0,336.2 594.0,337.4 596.0,338.6 598.0,339.7 600.0,340.8 602.0,341.8 604.0,342.9 606.0,343.9 608.0,345.0 610.0,346.0 612.0,346.8 614.0,347.5 616.0,348.3 618.0,349.0 620.0,349.8 622.0,350.5 624.0,351.1 626.0,351.5 626.0,383.6 624.0,383.2 622.0,382.6 620.0,381.9 618.0,381.1 616.0,380.4 614.0,379.6 612.0,378.9 610.0,378.1 608.0,377.1 606.0,376.1 604.0,375.0 602.0,373.9 600.0,372.9 598.0,371.8 596.0,370.7 594.0,369.5 592.0,368.3 590.0,367.0 588.0,365.8 586.0,364.6 584.0,363.3 582.0,362.3 580.0,361.4 578.0,360.6 576.0,359.7 574.0,359.1 572.0,358.9 570.0,358.6 568.0,358.4 566.0,358.3 564.0,358.4 562.0,358.5 560.0,358.7 558.0,359.1 556.0,359.5 554.0,359.9 552.0,360.4 550.0,361.1 548.0,361.9 546.0,362.6 544.0,363.4 542.0,364.2 540.0,365.1 538.0,366.0 536.0,366.9 534.0,367.8 532.0,368.7 530.0,369.7 528.0,370.6 526.0,371.6 524.0,372.6 522.0,373.6 520.0,374.5 518.0,375.5 516.0,376.4 514.0,377.4 512.0,378.3 510.0,379.2 508.0,380.1 506.0,381.0 504.0,381.9 502.0,382.8 500.0,383.7 498.0,384.3 496.0,384.9 494.0,385.5 492.0,386.1 490.0,386.7 488.0,386.9 486.0,387.2 484.0,387.5 482.0,387.8 480.0,388.1 478.0,388.2 476.0,388.3 474.0,388.4 472.0,388.6 470.0,388.7 468.0,388.9 466.0,389.0 464.0,389.1 462.0,389.1 460.0,389.1 458.0,389.1 456.0,389.1 454.0,389.1 452.0,389.1 450.0,389.1 448.0,389.1 446.0,389.0 444.0,388.9 442.0,388.7 440.0,388.5 438.0,388.4 436.0,388.2 434.0,388.1 432.0,387.9 430.0,387.7 428.0,387.6 426.0,387.4 424.0,387.3 422.0,387.1 420.0,386.9 418.0,386.7 416.0,386.5 414.0,386.4 412.0,386.2 410.0,386.0 408.0,385.8 406.0,385.6 404.0,385.5 402.0,385.4 400.0,385.3 398.0,385.2 396.0,385.1 394.0,385.0 392.0,384.9 390.0,384.8 388.0,384.7 386.0,384.6 384.0,384.5 382.0,384.4 380.0,384.3 378.0,384.3 376.0,384.2 374.0,384.1 372.0,384.0 370.0,383.9 368.0,383.9" fill="#1f77b4"/>
<path clip-path="url(#c3)" d="M369.2 352.7v29.7m-1.4 0h2.8m0-29.7h-2.8M369.5 352.4v29.7m-1.4 0h2.8m0-29.7h-2.8M370.1 352.5v29.7m-1.4 0h2.8m0-29.7h-2.8M369.8 350.3v29.7m-1.4 0h2.8m0-29.7h-2.8M371.0 362.5v29.7m-1.4 0h2.8m0-29.7h-2.8M370.2 355.2v29.7m-1.4 0h2.8m0-29.7h-2.8M371.9 354.9v29.7m-1.4 0h2.8m0-29.7h-2.8M370.5 362.7v29.7m-1.4 0h2.8m0-29.7h-2.8M372.8 359.0v29.7m-1.4 0h2.8m0-29.7h-2.8M370.8 346.5v29.7m-1.4 0h2.8m0-29.7h-2.8M373.6 356.1v29.7m-1.4 0h2.8m0-29.7h-2.8M371.2 356.6v29.7m-1.4 0h2.8m0-29.7h-2.8M374.5 361.1v29.7m-1.4 0h2.8m0-29.7h-2.8M371.5 358.6v29.7m-1.4 0h2.8m0-29.7h-2.8M375.4 356.5v29.7m-1.4 0h2.8m0-29.7h-2.8M371.9 348.2v29.7m-1.4 0h2.8m0-29.7h-2.8M376.3 349.6v29.7m-1.4 0h2.8m0-29.7h-2.8M372.2 354.3v29.7m-1.4 0h2.8m0-29.7h-2.8M377.1 355.4v29.7m-1.4 0h2.8m0-29.7h-2.8M372.6 348.8v29.7m-1.4 0h2.8m0-29.7h-2.8M378.0 351.7v29.7m-1.4 0h2.8m0-29.7h-2.8M372.9 351.5v29.7m-1.4 0h2.8m0-29.7h-2.8M378.9 353.7v29.7m-1.4 0h2.8m0-29.7h-2.8M373.3 354.6v29.7m-1.4 0h2.8m0-29.7h-2.8M379.7 352.2v29.7m-1.4 0h2.8m0-29.7h-2.8M373.6 348.0v29.7m-1.4 0h2.8m0-29.7h-2.8M380.6 358.7v29.7m-1.4 0h2.8m0-29.7h-2.8M373.9 359.9v29.7m-1.4 0h2.8m0-29.7h-2.8M381.4 353.1v29.7m-1.4 0h2.8m0-29.7h-2.8M374.3 357.5v29.7m-1.4 0h2.8m0-29.7h-2.8M382.2 355.4v29.7m-1.4 0h2.8m0-29.7h-2.8M374.6 356.0v29.7m-1.4 0h2.8m0-29.7h-2.8M383.1 355.6v29.7m-1.4 0h2.8m0-29.7h-2.8M375.0 350.0v29.7m-1.4 0h2.8m0-29.7h-2.8M383.9 356.0v29.7m-1.4 0h2.8m0-29.7h-2.8M375.3 357.5v29.7m-1.4 0h2.8m0-29.7h-2.8M384.7 349.9v29.7m-1.4 0h2.8m0-29.7h-2.8M375.7 361.5v29.7m-1.4 0h2.8m0-29.7h-2.8M385.5 362.5v29.7m-1.4 0h2.8m0-29.7h-2.8M376.0 360.9v29.7m-1.4 0h2.8m0-29.7h-2.8M386.4 362.1v29.7m-1.4 0h2.8m0-29.7h-2.8M376.4 356.4v29.7m-1.4 0h2.8m0-29.7h-2.8M387.2 352.3v29.7m-1.4 0h2.8m0-29.7h-2.8M376.7 350.8v29.7m-1.4 0h2.8m0-29.7h-2.8M388.0 350.4v29.7m-1.4 0h2.8m0-29.7h-2.8M377.0 353.8v29.7m-1.4 0h2.8m0-29.7h-2.8M388.8 353.7v29.7m-1.4 0h2.8m0-29.7h-2.8M377.4 356.2v29.7m-1.4 0h2.8m0-29.7h-2.8M389.6 345.4v29.7m-1.4 0h2.8m0-29.7h-2.8M377.7 363.1v29.7m-1.4 0h2.8m0-29.7h-2.8M390.4 363.5v29.7m-1.4 0h2.8m0-29.7h-2.8M378.1 353.3v29.7m-1.4 0h2.8m0-29.7h-2.8M391.2 356.8v29.7m-1.4 0h2.8m0-29.7h-2.8M378.4 355.4v29.7m-1.4 0h2.8m0-29.7h-2.8M391.9 355.1v29.7m-1.4 0h2.8m0-29.7h-2.8M378.8 352.5v29.7m-1.4 0h2.8m0-29.7h-2.8M392.7 353.5v29.7m-1.4 0h2.8m0-29.7h-2.8M379.1 349.9v29.7m-1.4 0h2.8m0-29.7h-2.8M393.5 354.8v29.7m-1.4 0h2.8m0-29.7h-2.8M379.5 353.3v29.7m-1.4 0h2.8m0-29.7h-2.8M394.3 355.5v29.7m-1.4 0h2.8m0-29.7h-2.8M379.8 349.8v29.7m-1.4 0h2.8m0-29.7h-2.8M395.0 354.3v29.7m-1.4 0h2.8m0-29.7h-2.8M380.1 353.7v29.7m-1.4 0h2.8m0-29.7h-2.8M395.8 356.7v29.7m-1.4 0h2.8m0-29.7h-2.8M380.5 349.0v29.7m-1.4 0h2.8m0-29.7h-2.8M396.6 356.0v29.7m-1.4 0h2.8m0-29.7h-2.8M380.8 357.6v29.7m-1.4 0h2.8m0-29.7h-2.8M397.3 356.8v29.7m-1.4 0h2.8m0-29.7h-2.8M381.2 351.9v29.7m-1.4 0h2.8m0-29.7h-2.8M398.1 352.2v29.7m-1.4 0h2.8m0-29.7h-2.8M381.5 352.5v29.7m-1.4 0h2.8m0-29.7h-2.8M398.8 357.4v29.7m-1.4 0h2.8m0-29.7h-2.8M381.9 360.0v29.7m-1.4 0h2.8m0-29.7h-2.8M399.6 353.7v29.7m-1.4 0h2.8m0-29.7h-2.8M382.2 350.8v29.7m-1.4 0h2.8m0-29.7h-2.8M400.3 356.0v29.7m-1.4 0h2.8m0-29.7h-2.8M382.6 354.4v29.7m-1.4 0h2.8m0-29.7h-2.8M401.1 350.6v29.7m-1.4 0h2.8m0-29.7h-2.8M382.9 350.5v29.7m-1.4 0h2.8m0-29.7h-2.8M401.8 354.1v29.7m-1.4 0h2.8m0-29.7h-2.8M383.2 356.4v29.7m-1.4 0h2.8m0-29.7h-2.8M402.5 349.5v29.7m-1.4 0h2.8m0-29.7h-2.8M383.6 349.3v29.7m-1.4 0h2.8m0-29.7h-2.8M403.3 356.7v29.7m-1.4 0h2.8m0-29.7h-2.8M383.9 348.5v29.7m-1.4 0h2.8m0-29.7h-2.8M404.0 355.1v29.7m-1.4 0h2.8m0-29.7h-2.8M384.3 355.1v29.7m-1.4 0h2.8m0-29.7h-2.8M404.7 354.2v29.7m-1.4 0h2.8m0-29.7h-2.8M384.6 349.4v29.7m-1.4 0h2.8m0-29.7h-2.8M405.4 354.4v29.7m-1.4 0h2.8m0-29.7h-2.8M385.0 352.3v29.7m-1.4 0h2.8m0-29.7h-2.8M406.1 356.2v29.7m-1.4 0h2.8m0-29.7h-2.8M385.3 350.1v29.7m-1.4 0h2.8m0-29.7h-2.8M406.8 359.4v29.7m-1.4 0h2.8m0-29.7h-2.8M385.7 346.6v29.7m-1.4 0h2.8m0-29.7h-2.8M407.6 354.1v29.7m-1.4 0h2.8m0-29.7h-2.8M386.0 353.7v29.7m-1.4 0h2.8m0-29.7h-2.8M408.3 359.0v29.7m-1.4 0h2.8m0-29.7h-2.8M386.3 351.2v29.7m-1.4 0h2.8m0-29.7h-2.8M409.0 357.3v29.7m-1.4 0h2.8m0-29.7h-2.8M386.7 351.4v29.7m-1.4 0h2.8m0-29.7h-2.8M409.7 358.2v29.7m-1.4 0h2.8m0-29.7h-2.8M387.0 361.0v29.7m-1.4 0h2.8m0-29.7h-2.8M410.4 353.4v29.7m-1.4 0h2.8m0-29.7h-2.8M387.4 355.6v29.7m-1.4 0h2.8m0-29.7h-2.8M411.0 351.3v29.7m-1.4 0h2.8m0-29.7h-2.8M387.7 357.9v29.7m-1.4 0h2.8m0-29.7h-2.8M411.7 360.3v29.7m-1.4 0h2.8m0-29.7h-2.8M388.1 354.0v29.7m-1.4 0h2.8m0-29.7h-2.8M412.4 350.6v29.7m-1.4 0h2.8m0-29.7h-2.8M388.4 355.5v29.7m-1.4 0h2.8m0-29.7h-2.8M413.1 360.2v29.7m-1.4 0h2.8m0-29.7h-2.8M388.8 358.4v29.7m-1.4 0h2.8m0-29.7h-2.8M413.8 358.9v29.7m-1.4 0h2.8m0-29.7h-2.8M389.1 346.2v29.7m-1.4 0h2.8m0-29.7h-2.8M414.5 352.6v29.7m-1.4 0h2.8m0-29.7h-2.8M389.4 359.8v29.7m-1.4 0h2.8m0-29.7h-2.8M415.1 350.4v29.7m-1.4 0h2.8m0-29.7h-2.8M389.8 358.6v29.7m-1.4 0h2.8m0-29.7h-2.8M415.8 363.5v29.7m-1.4 0h2.8m0-29.7h-2.8M390.1 357.1v29.7m-1.4 0h2.8m0-29.7h-2.8M416.5 360.4v29.7m-1.4 0h2.8m0-29.7h-2.8M390.5 352.5v29.7m-1.4 0h2.8m0-29.7h-2.8M417.1 350.6v29.7m-1.4 0h2.8m0-29.7h-2.8M390.8 353.5v29.7m-1.4 0h2.8m0-29.7h-2.8M417.8 355.0v29.7m-1.4 0h2.8m0-29.7h-2.8M391.2 353.8v29.7m-1.4 0h2.8m0-29.7h-2.8M418.4 358.8v29.7m-1.4 0h2.8m0-29.7h-2.8M391.5 353.4v29.7m-1.4 0h2.8m0-29.7h-2.8M419.1 356.7v29.7m-1.4 0h2.8m0-29.7h-2.8M391.9 355.8v29.7m-1.4 0h2.8m0-29.7h-2.8M419.8 356.0v29.7m-1.4 0h2.8m0-29.7h-2.8M392.2 361.8v29.7m-1.4 0h2.8m0-29.7h-2.8M420.4 357.9v29.7m-1.4 0h2.8m0-29.7h-2.8M392.5 354.4v29.7m-1.4 0h2.8m0-29.7h-2.8M421.1 355.2v29.7m-1.4 0h2.8m0-29.7h-2.8M392.9 351.4v29.7m-1.4 0h2.8m0-29.7h-2.8M421.7 361.8v29.7m-1.4 0h2.8m0-29.7h-2.8M393.2 354.7v29.7m-1.4 0h2.8m0-29.7h-2.8M422.3 351.7v29.7m-1.4 0h2.8m0-29.7h-2.8M393.6 351.7v29.7m-1.4 0h2.8m0-29.7h-2.8M423.0 355.7v29.7m-1.4 0h2.8m0-29.7h-2.8M393.9 352.2v29.7m-1.4 0h2.8m0-29.7h-2.8M423.6 360.9v29.7m-1.4 0h2.8m0-29.7h-2.8M394.3 349.2v29.7m-1.4 0h2.8m0-29.7h-2.8M424.2 358.4v29.7m-1.4 0h2.8m0-29.7h-2.8M394.6 354.7v29.7m-1.4 0h2.8m0-29.7h-2.8M424.9 351.5v29.7m-1.4 0h2.8m0-29.7h-2.8M395.0 354.3v29.7m-1.4 0h2.8m0-29.7h-2.8M425.5 356.1v29.7m-1.4 0h2.8m0-29.7h-2.8M395.3 356.3v29.7m-1.4 0h2.8m0-29.7h-2.8M426.1 354.6v29.7m-1.4 0h2.8m0-29.7h-2.8M395.6 355.5v29.7m-1.4 0h2.8m0-29.7h-2.8M426.8 349.6v29.7m-1.4 0h2.8m0-29.7h-2.8M396.0 349.6v29.7m-1.4 0h2.8m0-29.7h-2.8M427.4 359.9v29.7m-1.4 0h2.8m0-29.7h-2.8M396.3 358.6v29.7m-1.4 0h2.8m0-29.7h-2.8M428.0 356.6v29.7m-1.4 0h2.8m0-29.7h-2.8M396.7 351.7v29.7m-1.4 0h2.8m0-29.7h-2.8M428.6 361.3v29.7m-1.4 0h2.8m0-29.7h-2.8M397.0 345.5v29.7m-1.4 0h2.8m0-29.7h-2.8M429.2 353.4v29.7m-1.4 0h2.8m0-29.7h-2.8M397.4 357.1v29.7m-1.4 0h2.8m0-29.7h-2.8M429.8 359.6v29.7m-1.4 0h2.8m0-29.7h-2.8M397.7 349.9v29.7m-1.4 0h2.8m0-29.7h-2.8M430.4 349.0v29.7m-1.4 0h2.8m0-29.7h-2.8M398.1 360.4v29.7m-1.4 0h2.8m0-29.7h-2.8M431.0 357.6v29.7m-1.4 0h2.8m0-29.7h-2.8M398.4 350.6v29.7m-1.4 0h2.8m0-29.7h-2.8M431.6 357.2v29.7m-1.4 0h2.8m0-29.7h-2.8M398.7 358.1v29.7m-1.4 0h2.8m0-29.7h-2.8M432.2 346.1v29.7m-1.4 0h2.8m0-29.7h-2.8M399.1 359.0v29.7m-1.4 0h2.8m0-29.7h-2.8M432.8 360.2v29.7m-1.4 0h2.8m0-29.7h-2.8M399.4 345.6v29.7m-1.4 0h2.8m0-29.7h-2.8M433.4 360.4v29.7m-1.4 0h2.8m0-29.7h-2.8M399.8 346.9v29.7m-1.4 0h2.8m0-29.7h-2.8M434.0 361.9v29.7m-1.4 0h2.8m0-29.7h-2.8M400.1 356.1v29.7m-1.4 0h2.8m0-29.7h-2.8M434.6 366.7v29.7m-1.4 0h2.8m0-29.7h-2.8M400.5 351.9v29.7m-1.4 0h2.8m0-29.7h-2.8M435.2 357.3v29.7m-1.4 0h2.8m0-29.7h-2.8M400.8 358.8v29.7m-1.4 0h2.8m0-29.7h-2.8M435.8 354.6v29.7m-1.4 0h2.8m0-29.7h-2.8M401.2 351.5v29.7m-1.4 0h2.8m0-29.7h-2.8M436.4 355.8v29.7m-1.4 0h2.8m0-29.7h-2.8M401.5 354.2v29.7m-1.4 0h2.8m0-29.7h-2.8M437.0 352.9v29.7m-1.4 0h2.8m0-29.7h-2.8M401.8 356.5v29.7m-1.4 0h2.8m0-29.7h-2.8M437.5 359.7v29.7m-1.4 0h2.8m0-29.7h-2.8M402.2 354.8v29.7m-1.4 0h2.8m0-29.7h-2.8M438.1 364.6v29.7m-1.4 0h2.8m0-29.7h-2.8M402.5 353.2v29.7m-1.4 0h2.8m0-29.7h-2.8M438.7 363.0v29.7m-1.4 0h2.8m0-29.7h-2.8M402.9 352.2v29.7m-1.4 0h2.8m0-29.7h-2.8M439.3 360.8v29.7m-1.4 0h2.8m0-29.7h-2.8M403.2 346.4v29.7m-1.4 0h2.8m0-29.7h-2.8M439.8 358.5v29.7m-1.4 0h2.8m0-29.7h-2.8M403.6 353.8v29.7m-1.4 0h2.8m0-29.7h-2.8M440.4 355.6v29.7m-1.4 0h2.8m0-29.7h-2.8M403.9 352.0v29.7m-1.4 0h2.8m0-29.7h-2.8M441.0 356.3v29.7m-1.4 0h2.8m0-29.7h-2.8M404.3 351.6v29.7m-1.4 0h2.8m0-29.7h-2.8M441.5 348.5v29.7m-1.4 0h2.8m0-29.7h-2.8M404.6 352.1v29.7m-1.4 0h2.8m0-29.7h-2.8M442.1 355.5v29.7m-1.4 0h2.8m0-29.7h-2.8M404.9 352.4v29.7m-1.4 0h2.8m0-29.7h-2.8M442.7 353.4v29.7m-1.4 0h2.8m0-29.7h-2.8M405.3 354.1v29.7m-1.4 0h2.8m0-29.7h-2.8M443.2 361.2v29.7m-1.4 0h2.8m0-29.7h-2.8M405.6 353.7v29.7m-1.4 0h2.8m0-29.7h-2.8M443.8 355.9v29.7m-1.4 0h2.8m0-29.7h-2.8M406.0 360.4v29.7m-1.4 0h2.8m0-29.7h-2.8M444.3 362.1v29.7m-1.4 0h2.8m0-29.7h-2.8M406.3 358.6v29.7m-1.4 0h2.8m0-29.7h-2.8M444.9 362.9v29.7m-1.4 0h2.8m0-29.7h-2.8M406.7 353.4v29.7m-1.4 0h2.8m0-29.7h-2.8M445.4 357.5v29.7m-1.4 0h2.8m0-29.7h-2.8M407.0 359.5v29.7m-1.4 0h2.8m0-29.7h-2.8M446.0 355.8v29.7m-1.4 0h2.8m0-29.7h-2.8M407.4 354.4v29.7m-1.4 0h2.8m0-29.7h-2.8M446.5 359.7v29.7m-1.4 0h2.8m0-29.7h-2.8M407.7 356.5v29.7m-1.4 0h2.8m0-29.7h-2.8M447.1 357.0v29.7m-1.4 0h2.8m0-29.7h-2.8M408.0 359.1v29.7m-1.4 0h2.8m0-29.7h-2.8M447.6 357.4v29.7m-1.4 0h2.8m0-29.7h-2.8M408.4 358.0v29.7m-1.4 0h2.8m0-29.7h-2.8M448.2 362.6v29.7m-1.4 0h2.8m0-29.7h-2.8M408.7 357.8v29.7m-1.4 0h2.8m0-29.7h-2.8M448.7 361.2v29.7m-1.4 0h2.8m0-29.7h-2.8M409.1 350.1v29.7m-1.4 0h2.8m0-29.7h-2.8M449.2 352.6v29.7m-1.4 0h2.8m0-29.7h-2.8M409.4 352.4v29.7m-1.4 0h2.8m0-29.7h-2.8M449.8 360.1v29.7m-1.4 0h2.8m0-29.7h-2.8M409.8 361.4v29.7m-1.4 0h2.8m0-29.7h-2.8M450.3 353.0v29.7m-1.4 0h2.8m0-29.7h-2.8M410.1 356.4v29.7m-1.4 0h2.8m0-29.7h-2.8M450.8 354.6v29.7m-1.4 0h2.8m0-29.7h-2.8M410.5 352.1v29.7m-1.4 0h2.8m0-29.7h-2.8M451.4 357.0v29.7m-1.4 0h2.8m0-29.7h-2.8M410.8 358.1v29.7m-1.4 0h2.8m0-29.7h-2.8M451.9 359.0v29.7m-1.4 0h2.8m0-29.7h-2.8M411.1 360.2v29.7m-1.4 0h2.8m0-29.7h-2.8M452.4 354.0v29.7m-1.4 0h2.8m0-29.7h-2.8M411.5 359.0v29.7m-1.4 0h2.8m0-29.7h-2.8M452.9 362.1v29.7m-1.4 0h2.8m0-29.7h-2.8M411.8 355.6v29.7m-1.4 0h2.8m0-29.7h-2.8M453.5 360.2v29.7m-1.4 0h2.8m0-29.7h-2.8M412.2 352.9v29.7m-1.4 0h2.8m0-29.7h-2.8M454.0 353.6v29.7m-1.4 0h2.8m0-29.7h-2.8M412.5 353.6v29.7m-1.4 0h2.8m0-29.7h-2.8M454.5 355.5v29.7m-1.4 0h2.8m0-29.7h-2.8M412.9 366.4v29.7m-1.4 0h2.8m0-29.7h-2.8M455.0 356.1v29.7m-1.4 0h2.8m0-29.7h-2.8M413.2 362.3v29.7m-1.4 0h2.8m0-29.7h-2.8M455.5 359.0v29.7m-1.4 0h2.8m0-29.7h-2.8M413.6 356.7v29.7m-1.4 0h2.8m0-29.7h-2.8M456.0 361.3v29.7m-1.4 0h2.8m0-29.7h-2.8M413.9 352.2v29.7m-1.4 0h2.8m0-29.7h-2.8M456.5 362.0v29.7m-1.4 0h2.8m0-29.7h-2.8M414.2 357.1v29.7m-1.4 0h2.8m0-29.7h-2.8M457.1 351.8v29.7m-1.4 0h2.8m0-29.7h-2.8M414.6 358.0v29.7m-1.4 0h2.8m0-29.7h-2.8M457.6 360.5v29.7m-1.4 0h2.8m0-29.7h-2.8M414.9 357.4v29.7m-1.4 0h2.8m0-29.7h-2.8M458.1 364.8v29.7m-1.4 0h2.8m0-29.7h-2.8M415.3 353.8v29.7m-1.4 0h2.8m0-29.7h-2.8M458.6 360.3v29.7m-1.4 0h2.8m0-29.7h-2.8M415.6 358.7v29.7m-1.4 0h2.8m0-29.7h-2.8M459.1 354.4v29.7m-1.4 0h2.8m0-29.7h-2.8M416.0 360.7v29.7m-1.4 0h2.8m0-29.7h-2.8M459.6 352.1v29.7m-1.4 0h2.8m0-29.7h-2.8M416.3 350.2v29.7m-1.4 0h2.8m0-29.7h-2.8M460.1 360.3v29.7m-1.4 0h2.8m0-29.7h-2.8M416.6 351.1v29.7m-1.4 0h2.8m0-29.7h-2.8M460.6 357.7v29.7m-1.4 0h2.8m0-29.7h-2.8M417.0 348.8v29.7m-1.4 0h2.8m0-29.7h-2.8M461.1 358.4v29.7m-1.4 0h2.8m0-29.7h-2.8M417.3 351.0v29.7m-1.4 0h2.8m0-29.7h-2.8M461.6 359.6v29.7m-1.4 0h2.8m0-29.7h-2.8M417.7 349.4v29.7m-1.4 0h2.8m0-29.7h-2.8M462.1 360.0v29.7m-1.4 0h2.8m0-29.7h-2.8M418.0 354.7v29.7m-1.4 0h2.8m0-29.7h-2.8M462.5 358.4v29.7m-1.4 0h2.8m0-29.7h-2.8M418.4 355.6v29.7m-1.4 0h2.8m0-29.7h-2.8M463.0 358.7v29.7m-1.4 0h2.8m0-29.7h-2.8M418.7 350.3v29.7m-1.4 0h2.8m0-29.7h-2.8M463.5 347.4v29.7m-1.4 0h2.8m0-29.7h-2.8M419.1 356.1v29.7m-1.4 0h2.8m0-29.7h-2.8M464.0 354.2v29.7m-1.4 0h2.8m0-29.7h-2.8M419.4 354.0v29.7m-1.4 0h2.8m0-29.7h-2.8M464.5 359.9v29.7m-1.4 0h2.8m0-29.7h-2.8M419.7 347.6v29.7m-1.4 0h2.8m0-29.7h-2.8M465.0 354.9v29.7m-1.4 0h2.8m0-29.7h-2.8M420.1 353.4v29.7m-1.4 0h2.8m0-29.7h-2.8M465.5 353.7v29.7m-1.4 0h2.8m0-29.7h-2.8M420.4 357.4v29.7m-1.4 0h2.8m0-29.7h-2.8M465.9 357.5v29.7m-1.4 0h2.8m0-29.7h-2.8M420.8 352.6v29.7m-1.4 0h2.8m0-29.7h-2.8M466.4 353.9v29.7m-1.4 0h2.8m0-29.7h-2.8M421.1 359.5v29.7m-1.4 0h2.8m0-29.7h-2.8M466.9 355.3v29.7m-1.4 0h2.8m0-29.7h-2.8M421.5 358.6v29.7m-1.4 0h2.8m0-29.7h-2.8M467.4 359.9v29.7m-1.4 0h2.8m0-29.7h-2.8M421.8 348.2v29.7m-1.4 0h2.8m0-29.7h-2.8M467.8 353.4v29.7m-1.4 0h2.8m0-29.7h-2.8M422.2 356.2v29.7m-1.4 0h2.8m0-29.7h-2.8M468.3 359.4v29.7m-1.4 0h2.8m0-29.7h-2.8M422.5 359.5v29.7m-1.4 0h2.8m0-29.7h-2.8M468.8 361.3v29.7m-1.4 0h2.8m0-29.7h-2.8M422.8 360.6v29.7m-1.4 0h2.8m0-29.7h-2.8M469.3 356.3v29.7m-1.4 0h2.8m0-29.7h-2.8M423.2 355.4v29.7m-1.4 0h2.8m0-29.7h-2.8M469.7 361.1v29.7m-1.4 0h2.8m0-29.7h-2.8M423.5 354.5v29.7m-1.4 0h2.8m0-29.7h-2.8M470.2 362.2v29.7m-1.4 0h2.8m0-29.7h-2.8M423.9 349.7v29.7m-1.4 0h2.8m0-29.7h-2.8M470.7 360.5v29.7m-1.4 0h2.8m0-29.7h-2.8M424.2 355.7v29.7m-1.4 0h2.8m0-29.7h-2.8M471.1 349.5v29.7m-1.4 0h2.8m0-29.7h-2.8M424.6 360.5v29.7m-1.4 0h2.8m0-29.7h-2.8M471.6 359.0v29.7m-1.4 0h2.8m0-29.7h-2.8M424.9 356.5v29.7m-1.4 0h2.8m0-29.7h-2.8M472.0 353.2v29.7m-1.4 0h2.8m0-29.7h-2.8M425.3 354.5v29.7m-1.4 0h2.8m0-29.7h-2.8M472.5 364.0v29.7m-1.4 0h2.8m0-29.7h-2.8M425.6 353.0v29.7m-1.4 0h2.8m0-29.7h-2.8M473.0 346.6v29.7m-1.4 0h2.8m0-29.7h-2.8M425.9 352.9v29.7m-1.4 0h2.8m0-29.7h-2.8M473.4 352.6v29.7m-1.4 0h2.8m0-29.7h-2.8M426.3 356.0v29.7m-1.4 0h2.8m0-29.7h-2.8M473.9 355.9v29.7m-1.4 0h2.8m0-29.7h-2.8M426.6 352.7v29.7m-1.4 0h2.8m0-29.7h-2.8M474.3 354.0v29.7m-1.4 0h2.8m0-29.7h-2.8M427.0 361.0v29.7m-1.4 0h2.8m0-29.7h-2.8M474.8 351.4v29.7m-1.4 0h2.8m0-29.7h-2.8M427.3 364.9v29.7m-1.4 0h2.8m0-29.7h-2.8M475.2 355.2v29.7m-1.4 0h2.8m0-29.7h-2.8M427.7 352.1v29.7m-1.4 0h2.8m0-29.7h-2.8M475.7 360.7v29.7m-1.4 0h2.8m0-29.7h-2.8M428.0 359.1v29.7m-1.4 0h2.8m0-29.7h-2.8M476.1 353.0v29.7m-1.4 0h2.8m0-29.7h-2.8M428.4 359.9v29.7m-1.4 0h2.8m0-29.7h-2.8M476.6 349.7v29.7m-1.4 0h2.8m0-29.7h-2.8M428.7 352.9v29.7m-1.4 0h2.8m0-29.7h-2.8M477.0 362.1v29.7m-1.4 0h2.8m0-29.7h-2.8M429.0 355.7v29.7m-1.4 0h2.8m0-29.7h-2.8M477.5 351.8v29.7m-1.4 0h2.8m0-29.7h-2.8M429.4 359.0v29.7m-1.4 0h2.8m0-29.7h-2.8M477.9 361.1v29.7m-1.4 0h2.8m0-29.7h-2.8M429.7 356.7v29.7m-1.4 0h2.8m0-29.7h-2.8M478.4 349.7v29.7m-1.4 0h2.8m0-29.7h-2.8M430.1 355.4v29.7m-1.4 0h2.8m0-29.7h-2.8M478.8 359.0v29.7m-1.4 0h2.8m0-29.7h-2.8M430.4 360.1v29.7m-1.4 0h2.8m0-29.7h-2.8M479.2 365.0v29.7m-1.4 0h2.8m0-29.7h-2.8M430.8 355.8v29.7m-1.4 0h2.8m0-29.7h-2.8M479.7 355.1v29.7m-1.4 0h2.8m0-29.7h-2.8M431.1 356.8v29.7m-1.4 0h2.8m0-29.7h-2.8M480.1 362.2v29.7m-1.4 0h2.8m0-29.7h-2.8M431.5 353.0v29.7m-1.4 0h2.8m0-29.7h-2.8M480.5 362.6v29.7m-1.4 0h2.8m0-29.7h-2.8M431.8 346.0v29.7m-1.4 0h2.8m0-29.7h-2.8M481.0 360.4v29.7m-1.4 0h2.8m0-29.7h-2.8M432.1 354.2v29.7m-1.4 0h2.8m0-29.7h-2.8M481.4 358.9v29.7m-1.4 0h2.8m0-29.7h-2.8M432.5 359.9v29.7m-1.4 0h2.8m0-29.7h-2.8M481.8 351.9v29.7m-1.4 0h2.8m0-29.7h-2.8M432.8 356.7v29.7m-1.4 0h2.8m0-29.7h-2.8M482.3 357.8v29.7m-1.4 0h2.8m0-29.7h-2.8M433.2 359.6v29.7m-1.4 0h2.8m0-29.7h-2.8M482.7 352.9v29.7m-1.4 0h2.8m0-29.7h-2.8M433.5 353.0v29.7m-1.4 0h2.8m0-29.7h-2.8M483.1 348.6v29.7m-1.4 0h2.8m0-29.7h-2.8M433.9 367.8v29.7m-1.4 0h2.8m0-29.7h-2.8M483.6 355.8v29.7m-1.4 0h2.8m0-29.7h-2.8M434.2 356.2v29.7m-1.4 0h2.8m0-29.7h-2.8M484.0 350.3v29.7m-1.4 0h2.8m0-29.7h-2.8M434.6 361.1v29.7m-1.4 0h2.8m0-29.7h-2.8M484.4 354.3v29.7m-1.4 0h2.8m0-29.7h-2.8M434.9 363.3v29.7m-1.4 0h2.8m0-29.7h-2.8M484.8 360.1v29.7m-1.4 0h2.8m0-29.7h-2.8M435.2 357.3v29.7m-1.4 0h2.8m0-29.7h-2.8M485.3 359.5v29.7m-1.4 0h2.8m0-29.7h-2.8M435.6 352.6v29.7m-1.4 0h2.8m0-29.7h-2.8M485.7 355.0v29.7m-1.4 0h2.8m0-29.7h-2.8M435.9 354.9v29.7m-1.4 0h2.8m0-29.7h-2.8M486.1 351.0v29.7m-1.4 0h2.8m0-29.7h-2.8M436.3 357.4v29.7m-1.4 0h2.8m0-29.7h-2.8M486.5 355.6v29.7m-1.4 0h2.8m0-29.7h-2.8M436.6 363.4v29.7m-1.4 0h2.8m0-29.7h-2.8M486.9 345.2v29.7m-1.4 0h2.8m0-29.7h-2.8M437.0 354.6v29.7m-1.4 0h2.8m0-29.7h-2.8M487.4 352.3v29.7m-1.4 0h2.8m0-29.7h-2.8M437.3 355.5v29.7m-1.4 0h2.8m0-29.7h-2.8M487.8 357.8v29.7m-1.4 0h2.8m0-29.7h-2.8M437.7 359.1v29.7m-1.4 0h2.8m0-29.7h-2.8M488.2 356.1v29.7m-1.4 0h2.8m0-29.7h-2.8M438.0 355.5v29.7m-1.4 0h2.8m0-29.7h-2.8M488.6 358.0v29.7m-1.4 0h2.8m0-29.7h-2.8M438.3 359.0v29.7m-1.4 0h2.8m0-29.7h-2.8M489.0 348.1v29.7m-1.4 0h2.8m0-29.7h-2.8M438.7 356.4v29.7m-1.4 0h2.8m0-29.7h-2.8M489.4 350.1v29.7m-1.4 0h2.8m0-29.7h-2.8M439.0 352.6v29.7m-1.4 0h2.8m0-29.7h-2.8M489.8 356.4v29.7m-1.4 0h2.8m0-29.7h-2.8M439.4 357.8v29.7m-1.4 0h2.8m0-29.7h-2.8M490.2 356.2v29.7m-1.4 0h2.8m0-29.7h-2.8M439.7 353.9v29.7m-1.4 0h2.8m0-29.7h-2.8M490.6 354.7v29.7m-1.4 0h2.8m0-29.7h-2.8M440.1 353.8v29.7m-1.4 0h2.8m0-29.7h-2.8M491.0 357.0v29.7m-1.4 0h2.8m0-29.7h-2.8M440.4 360.6v29.7m-1.4 0h2.8m0-29.7h-2.8M491.5 362.7v29.7m-1.4 0h2.8m0-29.7h-2.8M440.8 363.0v29.7m-1.4 0h2.8m0-29.7h-2.8M491.9 351.8v29.7m-1.4 0h2.8m0-29.7h-2.8M441.1 355.8v29.7m-1.4 0h2.8m0-29.7h-2.8M492.3 351.1v29.7m-1.4 0h2.8m0-29.7h-2.8M441.4 359.0v29.7m-1.4 0h2.8m0-29.7h-2.8M492.7 363.3v29.7m-1.4 0h2.8m0-29.7h-2.8M441.8 360.8v29.7m-1.4 0h2.8m0-29.7h-2.8M493.1 345.6v29.7m-1.4 0h2.8m0-29.7h-2.8M442.1 352.5v29.7m-1.4 0h2.8m0-29.7h-2.8M493.5 349.3v29.7m-1.4 0h2.8m0-29.7h-2.8M442.5 360.0v29.7m-1.4 0h2.8m0-29.7h-2.8M493.9 354.6v29.7m-1.4 0h2.8m0-29.7h-2.8M442.8 359.1v29.7m-1.4 0h2.8m0-29.7h-2.8M494.3 362.0v29.7m-1.4 0h2.8m0-29.7h-2.8M443.2 354.4v29.7m-1.4 0h2.8m0-29.7h-2.8M494.7 350.8v29.7m-1.4 0h2.8m0-29.7h-2.8M443.5 366.2v29.7m-1.4 0h2.8m0-29.7h-2.8M495.1 355.7v29.7m-1.4 0h2.8m0-29.7h-2.8M443.9 354.7v29.7m-1.4 0h2.8m0-29.7h-2.8M495.4 345.6v29.7m-1.4 0h2.8m0-29.7h-2.8M444.2 351.6v29.7m-1.4 0h2.8m0-29.7h-2.8M495.8 343.7v29.7m-1.4 0h2.8m0-29.7h-2.8M444.5 358.3v29.7m-1.4 0h2.8m0-29.7h-2.8M496.2 354.1v29.7m-1.4 0h2.8m0-29.7h-2.8M444.9 362.2v29.7m-1.4 0h2.8m0-29.7h-2.8M496.6 353.2v29.7m-1.4 0h2.8m0-29.7h-2.8M445.2 355.1v29.7m-1.4 0h2.8m0-29.7h-2.8M497.0 350.5v29.7m-1.4 0h2.8m0-29.7h-2.8M445.6 366.1v29.7m-1.4 0h2.8m0-29.7h-2.8M497.4 346.1v29.7m-1.4 0h2.8m0-29.7h-2.8M445.9 358.8v29.7m-1.4 0h2.8m0-29.7h-2.8M497.8 353.5v29.7m-1.4 0h2.8m0-29.7h-2.8M446.3 360.7v29.7m-1.4 0h2.8m0-29.7h-2.8M498.2 351.6v29.7m-1.4 0h2.8m0-29.7h-2.8M446.6 360.2v29.7m-1.4 0h2.8m0-29.7h-2.8M498.6 356.6v29.7m-1.4 0h2.8m0-29.7h-2.8M447.0 357.5v29.7m-1.4 0h2.8m0-29.7h-2.8M499.0 351.1v29.7m-1.4 0h2.8m0-29.7h-2.8M447.3 357.4v29.7m-1.4 0h2.8m0-29.7h-2.8M499.3 348.9v29.7m-1.4 0h2.8m0-29.7h-2.8M447.6 357.3v29.7m-1.4 0h2.8m0-29.7h-2.8M499.7 351.6v29.7m-1.4 0h2.8m0-29.7h-2.8M448.0 359.0v29.7m-1.4 0h2.8m0-29.7h-2.8M500.1 358.3v29.7m-1.4 0h2.8m0-29.7h-2.8M448.3 363.6v29.7m-1.4 0h2.8m0-29.7h-2.8M500.5 350.7v29.7m-1.4 0h2.8m0-29.7h-2.8M448.7 360.7v29.7m-1.4 0h2.8m0-29.7h-2.8M500.9 353.6v29.7m-1.4 0h2.8m0-29.7h-2.8M449.0 361.3v29.7m-1.4 0h2.8m0-29.7h-2.8M501.2 352.3v29.7m-1.4 0h2.8m0-29.7h-2.8M449.4 359.3v29.7m-1.4 0h2.8m0-29.7h-2.8M501.6 350.1v29.7m-1.4 0h2.8m0-29.7h-2.8M449.7 354.9v29.7m-1.4 0h2.8m0-29.7h-2.8M502.0 355.5v29.7m-1.4 0h2.8m0-29.7h-2.8M450.1 363.6v29.7m-1.4 0h2.8m0-29.7h-2.8M502.4 354.5v29.7m-1.4 0h2.8m0-29.7h-2.8M450.4 360.0v29.7m-1.4 0h2.8m0-29.7h-2.8M502.8 352.7v29.7m-1.4 0h2.8m0-29.7h-2.8M450.7 356.3v29.7m-1.4 0h2.8m0-29.7h-2.8M503.1 343.9v29.7m-1.4 0h2.8m0-29.7h-2.8M451.1 360.9v29.7m-1.4 0h2.8m0-29.7h-2.8M503.5 352.0v29.7m-1.4 0h2.8m0-29.7h-2.8M451.4 355.8v29.7m-1.4 0h2.8m0-29.7h-2.8M503.9 347.0v29.7m-1.4 0h2.8m0-29.7h-2.8M451.8 363.5v29.7m-1.4 0h2.8m0-29.7h-2.8M504.2 343.3v29.7m-1.4 0h2.8m0-29.7h-2.8M452.1 365.5v29.7m-1.4 0h2.8m0-29.7h-2.8M504.6 353.4v29.7m-1.4 0h2.8m0-29.7h-2.8M452.5 368.1v29.7m-1.4 0h2.8m0-29.7h-2.8M505.0 347.5v29.7m-1.4 0h2.8m0-29.7h-2.8M452.8 358.1v29.7m-1.4 0h2.8m0-29.7h-2.8M505.4 348.3v29.7m-1.4 0h2.8m0-29.7h-2.8M453.2 358.8v29.7m-1.4 0h2.8m0-29.7h-2.8M505.7 349.3v29.7m-1.4 0h2.8m0-29.7h-2.8M453.5 355.0v29.7m-1.4 0h2.8m0-29.7h-2.8M506.1 354.6v29.7m-1.4 0h2.8m0-29.7h-2.8M453.8 354.9v29.7m-1.4 0h2.8m0-29.7h-2.8M506.5 347.8v29.7m-1.4 0h2.8m0-29.7h-2.8M454.2 360.5v29.7m-1.4 0h2.8m0-29.7h-2.8M506.8 347.5v29.7m-1.4 0h2.8m0-29.7h-2.8M454.5 356.3v29.7m-1.4 0h2.8m0-29.7h-2.8M507.2 351.1v29.7m-1.4 0h2.8m0-29.7h-2.8M454.9 356.6v29.7m-1.4 0h2.8m0-29.7h-2.8M507.6 344.2v29.7m-1.4 0h2.8m0-29.7h-2.8M455.2 357.7v29.7m-1.4 0h2.8m0-29.7h-2.8M507.9 348.3v29.7m-1.4 0h2.8m0-29.7h-2.8M455.6 365.3v29.7m-1.4 0h2.8m0-29.7h-2.8M508.3 344.5v29.7m-1.4 0h2.8m0-29.7h-2.8M455.9 362.2v29.7m-1.4 0h2.8m0-29.7h-2.8M508.6 345.6v29.7m-1.4 0h2.8m0-29.7h-2.8M456.3 356.7v29.7m-1.4 0h2.8m0-29.7h-2.8M509.0 347.4v29.7m-1.4 0h2.8m0-29.7h-2.8M456.6 359.3v29.7m-1.4 0h2.8m0-29.7h-2.8M509.4 352.3v29.7m-1.4 0h2.8m0-29.7h-2.8M456.9 365.5v29.7m-1.4 0h2.8m0-29.7h-2.8M509.7 345.8v29.7m-1.4 0h2.8m0-29.7h-2.8M457.3 363.7v29.7m-1.4 0h2.8m0-29.7h-2.8M510.1 352.5v29.7m-1.4 0h2.8m0-29.7h-2.8M457.6 361.6v29.7m-1.4 0h2.8m0-29.7h-2.8M510.4 345.0v29.7m-1.4 0h2.8m0-29.7h-2.8M458.0 361.9v29.7m-1.4 0h2.8m0-29.7h-2.8M510.8 347.5v29.7m-1.4 0h2.8m0-29.7h-2.8M458.3 359.6v29.7m-1.4 0h2.8m0-29.7h-2.8M511.1 346.7v29.7m-1.4 0h2.8m0-29.7h-2.8M458.7 360.9v29.7m-1.4 0h2.8m0-29.7h-2.8M511.5 352.3v29.7m-1.4 0h2.8m0-29.7h-2.8M459.0 362.9v29.7m-1.4 0h2.8m0-29.7h-2.8M511.9 346.6v29.7m-1.4 0h2.8m0-29.7h-2.8M459.4 362.3v29.7m-1.4 0h2.8m0-29.7h-2.8M512.2 353.4v29.7m-1.4 0h2.8m0-29.7h-2.8M459.7 354.2v29.7m-1.4 0h2.8m0-29.7h-2.8M512.6 353.3v29.7m-1.4 0h2.8m0-29.7h-2.8M460.0 352.5v29.7m-1.4 0h2.8m0-29.7h-2.8M512.9 349.3v29.7m-1.4 0h2.8m0-29.7h-2.8M460.4 360.6v29.7m-1.4 0h2.8m0-29.7h-2.8M513.3 353.0v29.7m-1.4 0h2.8m0-29.7h-2.8M460.7 359.3v29.7m-1.4 0h2.8m0-29.7h-2.8M513.6 344.6v29.7m-1.4 0h2.8m0-29.7h-2.8M461.1 354.8v29.7m-1.4 0h2.8m0-29.7h-2.8M514.0 341.2v29.7m-1.4 0h2.8m0-29.7h-2.8M461.4 361.4v29.7m-1.4 0h2.8m0-29.7h-2.8M514.3 345.3v29.7m-1.4 0h2.8m0-29.7h-2.8M461.8 355.1v29.7m-1.4 0h2.8m0-29.7h-2.8M514.7 348.4v29.7m-1.4 0h2.8m0-29.7h-2.8M462.1 354.9v29.7m-1.4 0h2.8m0-29.7h-2.8M515.0 344.1v29.7m-1.4 0h2.8m0-29.7h-2.8M462.5 356.2v29.7m-1.4 0h2.8m0-29.7h-2.8M515.4 352.8v29.7m-1.4 0h2.8m0-29.7h-2.8M462.8 364.3v29.7m-1.4 0h2.8m0-29.7h-2.8M515.7 345.0v29.7m-1.4 0h2.8m0-29.7h-2.8M463.1 351.6v29.7m-1.4 0h2.8m0-29.7h-2.8M516.0 346.7v29.7m-1.4 0h2.8m0-29.7h-2.8M463.5 358.5v29.7m-1.4 0h2.8m0-29.7h-2.8M516.4 346.8v29.7m-1.4 0h2.8m0-29.7h-2.8M463.8 360.5v29.7m-1.4 0h2.8m0-29.7h-2.8M516.7 343.8v29.7m-1.4 0h2.8m0-29.7h-2.8M464.2 362.0v29.7m-1.4 0h2.8m0-29.7h-2.8M517.1 348.5v29.7m-1.4 0h2.8m0-29.7h-2.8M464.5 359.0v29.7m-1.4 0h2.8m0-29.7h-2.8M517.4 343.1v29.7m-1.4 0h2.8m0-29.7h-2.8M464.9 356.1v29.7m-1.4 0h2.8m0-29.7h-2.8M517.7 347.6v29.7m-1.4 0h2.8m0-29.7h-2.8M465.2 353.5v29.7m-1.4 0h2.8m0-29.7h-2.8M518.1 343.9v29.7m-1.4 0h2.8m0-29.7h-2.8M465.5 355.0v29.7m-1.4 0h2.8m0-29.7h-2.8M518.4 338.5v29.7m-1.4 0h2.8m0-29.7h-2.8M465.9 360.6v29.7m-1.4 0h2.8m0-29.7h-2.8M518.8 344.1v29.7m-1.4 0h2.8m0-29.7h-2.8M466.2 358.2v29.7m-1.4 0h2.8m0-29.7h-2.8M519.1 347.7v29.7m-1.4 0h2.8m0-29.7h-2.8M466.6 351.8v29.7m-1.4 0h2.8m0-29.7h-2.8M519.4 343.6v29.7m-1.4 0h2.8m0-29.7h-2.8M466.9 359.2v29.7m-1.4 0h2.8m0-29.7h-2.8M519.8 347.2v29.7m-1.4 0h2.8m0-29.7h-2.8M467.3 353.4v29.7m-1.4 0h2.8m0-29.7h-2.8M520.1 346.6v29.7m-1.4 0h2.8m0-29.7h-2.8M467.6 358.9v29.7m-1.4 0h2.8m0-29.7h-2.8M520.4 349.1v29.7m-1.4 0h2.8m0-29.7h-2.8M468.0 362.7v29.7m-1.4 0h2.8m0-29.7h-2.8M520.8 345.6v29.7m-1.4 0h2.8m0-29.7h-2.8M468.3 367.0v29.7m-1.4 0h2.8m0-29.7h-2.8M521.1 343.1v29.7m-1.4 0h2.8m0-29.7h-2.8M468.6 356.1v29.7m-1.4 0h2.8m0-29.7h-2.8M521.4 341.5v29.7m-1.4 0h2.8m0-29.7h-2.8M469.0 353.9v29.7m-1.4 0h2.8m0-29.7h-2.8M521.8 342.7v29.7m-1.4 0h2.8m0-29.7h-2.8M469.3 350.0v29.7m-1.4 0h2.8m0-29.7h-2.8M522.1 342.3v29.7m-1.4 0h2.8m0-29.7h-2.8M469.7 359.6v29.7m-1.4 0h2.8m0-29.7h-2.8M522.4 346.6v29.7m-1.4 0h2.8m0-29.7h-2.8M470.0 356.4v29.7m-1.4 0h2.8m0-29.7h-2.8M522.8 348.1v29.7m-1.4 0h2.8m0-29.7h-2.8M470.4 355.1v29.7m-1.4 0h2.8m0-29.7h-2.8M523.1 341.6v29.7m-1.4 0h2.8m0-29.7h-2.8M470.7 349.9v29.7m-1.4 0h2.8m0-29.7h-2.8M523.4 338.8v29.7m-1.4 0h2.8m0-29.7h-2.8M471.1 354.4v29.7m-1.4 0h2.8m0-29.7h-2.8M523.7 347.9v29.7m-1.4 0h2.8m0-29.7h-2.8M471.4 359.9v29.7m-1.4 0h2.8m0-29.7h-2.8M524.1 337.1v29.7m-1.4 0h2.8m0-29.7h-2.8M471.7 359.9v29.7m-1.4 0h2.8m0-29.7h-2.8M524.4 343.5v29.7m-1.4 0h2.8m0-29.7h-2.8M472.1 356.7v29.7m-1.4 0h2.8m0-29.7h-2.8M524.7 341.4v29.7m-1.4 0h2.8m0-29.7h-2.8M472.4 356.4v29.7m-1.4 0h2.8m0-29.7h-2.8M525.0 338.9v29.7m-1.4 0h2.8m0-29.7h-2.8M472.8 350.4v29.7m-1.4 0h2.8m0-29.7h-2.8M525.4 340.6v29.7m-1.4 0h2.8m0-29.7h-2.8M473.1 362.9v29.7m-1.4 0h2.8m0-29.7h-2.8M525.7 346.7v29.7m-1.4 0h2.8m0-29.7h-2.8M473.5 356.4v29.7m-1.4 0h2.8m0-29.7h-2.8M526.0 337.6v29.7m-1.4 0h2.8m0-29.7h-2.8M473.8 356.7v29.7m-1.4 0h2.8m0-29.7h-2.8M526.3 344.2v29.7m-1.4 0h2.8m0-29.7h-2.8M474.2 359.0v29.7m-1.4 0h2.8m0-29.7h-2.8M526.7 338.0v29.7m-1.4 0h2.8m0-29.7h-2.8M474.5 359.0v29.7m-1.4 0h2.8m0-29.7h-2.8M527.0 339.4v29.7m-1.4 0h2.8m0-29.7h-2.8M474.8 359.6v29.7m-1.4 0h2.8m0-29.7h-2.8M527.3 338.4v29.7m-1.4 0h2.8m0-29.7h-2.8M475.2 351.4v29.7m-1.4 0h2.8m0-29.7h-2.8M527.6 340.2v29.7m-1.4 0h2.8m0-29.7h-2.8M475.5 360.6v29.7m-1.4 0h2.8m0-29.7h-2.8M527.9 335.2v29.7m-1.4 0h2.8m0-29.7h-2.8M475.9 357.0v29.7m-1.4 0h2.8m0-29.7h-2.8M528.2 343.2v29.7m-1.4 0h2.8m0-29.7h-2.8M476.2 355.9v29.7m-1.4 0h2.8m0-29.7h-2.8M528.6 336.8v29.7m-1.4 0h2.8m0-29.7h-2.8M476.6 365.7v29.7m-1.4 0h2.8m0-29.7h-2.8M528.9 342.7v29.7m-1.4 0h2.8m0-29.7h-2.8M476.9 361.6v29.7m-1.4 0h2.8m0-29.7h-2.8M529.2 335.3v29.7m-1.4 0h2.8m0-29.7h-2.8M477.3 364.0v29.7m-1.4 0h2.8m0-29.7h-2.8M529.5 332.2v29.7m-1.4 0h2.8m0-29.7h-2.8M477.6 355.2v29.7m-1.4 0h2.8m0-29.7h-2.8M529.8 341.9v29.7m-1.4 0h2.8m0-29.7h-2.8M477.9 362.7v29.7m-1.4 0h2.8m0-29.7h-2.8M530.1 334.9v29.7m-1.4 0h2.8m0-29.7h-2.8M478.3 354.5v29.7m-1.4 0h2.8m0-29.7h-2.8M530.5 339.3v29.7m-1.4 0h2.8m0-29.7h-2.8M478.6 349.4v29.7m-1.4 0h2.8m0-29.7h-2.8M530.8 341.0v29.7m-1.4 0h2.8m0-29.7h-2.8M479.0 359.5v29.7m-1.4 0h2.8m0-29.7h-2.8M531.1 336.4v29.7m-1.4 0h2.8m0-29.7h-2.8M479.3 359.4v29.7m-1.4 0h2.8m0-29.7h-2.8M531.4 341.3v29.7m-1.4 0h2.8m0-29.7h-2.8M479.7 358.4v29.7m-1.4 0h2.8m0-29.7h-2.8M531.7 340.1v29.7m-1.4 0h2.8m0-29.7h-2.8M480.0 363.3v29.7m-1.4 0h2.8m0-29.7h-2.8M532.0 335.9v29.7m-1.4 0h2.8m0-29.7h-2.8M480.4 357.8v29.7m-1.4 0h2.8m0-29.7h-2.8M532.3 335.6v29.7m-1.4 0h2.8m0-29.7h-2.8M480.7 361.3v29.7m-1.4 0h2.8m0-29.7h-2.8M532.6 335.9v29.7m-1.4 0h2.8m0-29.7h-2.8M481.0 358.9v29.7m-1.4 0h2.8m0-29.7h-2.8M532.9 338.0v29.7m-1.4 0h2.8m0-29.7h-2.8M481.4 357.2v29.7m-1.4 0h2.8m0-29.7h-2.8M533.2 344.3v29.7m-1.4 0h2.8m0-29.7h-2.8M481.7 356.6v29.7m-1.4 0h2.8m0-29.7h-2.8M533.5 342.9v29.7m-1.4 0h2.8m0-29.7h-2.8M482.1 360.2v29.7m-1.4 0h2.8m0-29.7h-2.8M533.8 342.4v29.7m-1.4 0h2.8m0-29.7h-2.8M482.4 356.1v29.7m-1.4 0h2.8m0-29.7h-2.8M534.2 340.6v29.7m-1.4 0h2.8m0-29.7h-2.8M482.8 359.8v29.7m-1.4 0h2.8m0-29.7h-2.8M534.5 334.2v29.7m-1.4 0h2.8m0-29.7h-2.8M483.1 357.8v29.7m-1.4 0h2.8m0-29.7h-2.8M534.8 336.1v29.7m-1.4 0h2.8m0-29.7h-2.8M483.5 356.5v29.7m-1.4 0h2.8m0-29.7h-2.8M535.1 341.7v29.7m-1.4 0h2.8m0-29.7h-2.8M483.8 353.7v29.7m-1.4 0h2.8m0-29.7h-2.8M535.4 329.5v29.7m-1.4 0h2.8m0-29.7h-2.8M484.1 349.5v29.7m-1.4 0h2.8m0-29.7h-2.8M535.7 334.3v29.7m-1.4 0h2.8m0-29.7h-2.8M484.5 353.9v29.7m-1.4 0h2.8m0-29.7h-2.8M536.0 336.1v29.7m-1.4 0h2.8m0-29.7h-2.8M484.8 358.8v29.7m-1.4 0h2.8m0-29.7h-2.8M536.3 343.0v29.7m-1.4 0h2.8m0-29.7h-2.8M485.2 357.7v29.7m-1.4 0h2.8m0-29.7h-2.8M536.6 337.6v29.7m-1.4 0h2.8m0-29.7h-2.8M485.5 353.4v29.7m-1.4 0h2.8m0-29.7h-2.8M536.9 338.0v29.7m-1.4 0h2.8m0-29.7h-2.8M485.9 361.8v29.7m-1.4 0h2.8m0-29.7h-2.8M537.2 340.9v29.7m-1.4 0h2.8m0-29.7h-2.8M486.2 348.4v29.7m-1.4 0h2.8m0-29.7h-2.8M537.5 339.0v29.7m-1.4 0h2.8m0-29.7h-2.8M486.6 362.6v29.7m-1.4 0h2.8m0-29.7h-2.8M537.8 338.6v29.7m-1.4 0h2.8m0-29.7h-2.8M486.9 350.1v29.7m-1.4 0h2.8m0-29.7h-2.8M538.1 333.8v29.7m-1.4 0h2.8m0-29.7h-2.8M487.2 358.5v29.7m-1.4 0h2.8m0-29.7h-2.8M538.4 336.6v29.7m-1.4 0h2.8m0-29.7h-2.8M487.6 352.8v29.7m-1.4 0h2.8m0-29.7h-2.8M538.7 331.2v29.7m-1.4 0h2.8m0-29.7h-2.8M487.9 359.9v29.7m-1.4 0h2.8m0-29.7h-2.8M539.0 329.3v29.7m-1.4 0h2.8m0-29.7h-2.8M488.3 361.8v29.7m-1.4 0h2.8m0-29.7h-2.8M539.2 334.6v29.7m-1.4 0h2.8m0-29.7h-2.8M488.6 357.2v29.7m-1.4 0h2.8m0-29.7h-2.8M539.5 329.0v29.7m-1.4 0h2.8m0-29.7h-2.8M489.0 353.5v29.7m-1.4 0h2.8m0-29.7h-2.8M539.8 337.1v29.7m-1.4 0h2.8m0-29.7h-2.8M489.3 349.9v29.7m-1.4 0h2.8m0-29.7h-2.8M540.1 342.5v29.7m-1.4 0h2.8m0-29.7h-2.8M489.7 350.1v29.7m-1.4 0h2.8m0-29.7h-2.8M540.4 329.1v29.7m-1.4 0h2.8m0-29.7h-2.8M490.0 355.9v29.7m-1.4 0h2.8m0-29.7h-2.8M540.7 335.8v29.7m-1.4 0h2.8m0-29.7h-2.8M490.3 358.6v29.7m-1.4 0h2.8m0-29.7h-2.8M541.0 332.2v29.7m-1.4 0h2.8m0-29.7h-2.8M490.7 354.7v29.7m-1.4 0h2.8m0-29.7h-2.8M541.3 332.7v29.7m-1.4 0h2.8m0-29.7h-2.8M491.0 353.1v29.7m-1.4 0h2.8m0-29.7h-2.8M541.6 323.1v29.7m-1.4 0h2.8m0-29.7h-2.8M491.4 359.2v29.7m-1.4 0h2.8m0-29.7h-2.8M541.9 334.4v29.7m-1.4 0h2.8m0-29.7h-2.8M491.7 355.9v29.7m-1.4 0h2.8m0-29.7h-2.8M542.2 330.7v29.7m-1.4 0h2.8m0-29.7h-2.8M492.1 356.1v29.7m-1.4 0h2.8m0-29.7h-2.8M542.5 333.0v29.7m-1.4 0h2.8m0-29.7h-2.8M492.4 354.7v29.7m-1.4 0h2.8m0-29.7h-2.8M542.7 337.4v29.7m-1.4 0h2.8m0-29.7h-2.8M492.8 348.0v29.7m-1.4 0h2.8m0-29.7h-2.8M543.0 333.8v29.7m-1.4 0h2.8m0-29.7h-2.8M493.1 350.5v29.7m-1.4 0h2.8m0-29.7h-2.8M543.3 331.4v29.7m-1.4 0h2.8m0-29.7h-2.8M493.4 360.8v29.7m-1.4 0h2.8m0-29.7h-2.8M543.6 328.2v29.7m-1.4 0h2.8m0-29.7h-2.8M493.8 354.2v29.7m-1.4 0h2.8m0-29.7h-2.8M543.9 330.1v29.7m-1.4 0h2.8m0-29.7h-2.8M494.1 358.3v29.7m-1.4 0h2.8m0-29.7h-2.8M544.2 328.4v29.7m-1.4 0h2.8m0-29.7h-2.8M494.5 347.6v29.7m-1.4 0h2.8m0-29.7h-2.8M544.5 334.4v29.7m-1.4 0h2.8m0-29.7h-2.8M494.8 352.9v29.7m-1.4 0h2.8m0-29.7h-2.8M544.7 330.9v29.7m-1.4 0h2.8m0-29.7h-2.8M495.2 358.6v29.7m-1.4 0h2.8m0-29.7h-2.8M545.0 328.5v29.7m-1.4 0h2.8m0-29.7h-2.8M495.5 352.6v29.7m-1.4 0h2.8m0-29.7h-2.8M545.3 332.6v29.7m-1.4 0h2.8m0-29.7h-2.8M495.9 355.7v29.7m-1.4 0h2.8m0-29.7h-2.8M545.6 329.8v29.7m-1.4 0h2.8m0-29.7h-2.8M496.2 358.1v29.7m-1.4 0h2.8m0-29.7h-2.8M545.9 340.8v29.7m-1.4 0h2.8m0-29.7h-2.8M496.5 352.1v29.7m-1.4 0h2.8m0-29.7h-2.8M546.2 339.2v29.7m-1.4 0h2.8m0-29.7h-2.8M496.9 345.2v29.7m-1.4 0h2.8m0-29.7h-2.8M546.4 337.2v29.7m-1.4 0h2.8m0-29.7h-2.8M497.2 352.2v29.7m-1.4 0h2.8m0-29.7h-2.8M546.7 332.0v29.7m-1.4 0h2.8m0-29.7h-2.8M497.6 352.1v29.7m-1.4 0h2.8m0-29.7h-2.8M547.0 328.8v29.7m-1.4 0h2.8m0-29.7h-2.8M497.9 348.2v29.7m-1.4 0h2.8m0-29.7h-2.8M547.3 329.6v29.7m-1.4 0h2.8m0-29.7h-2.8M498.3 358.5v29.7m-1.4 0h2.8m0-29.7h-2.8M547.6 335.7v29.7m-1.4 0h2.8m0-29.7h-2.8M498.6 351.8v29.7m-1.4 0h2.8m0-29.7h-2.8M547.8 328.9v29.7m-1.4 0h2.8m0-29.7h-2.8M499.0 350.2v29.7m-1.4 0h2.8m0-29.7h-2.8M548.1 326.1v29.7m-1.4 0h2.8m0-29.7h-2.8M499.3 360.2v29.7m-1.4 0h2.8m0-29.7h-2.8M548.4 333.5v29.7m-1.4 0h2.8m0-29.7h-2.8M499.6 353.3v29.7m-1.4 0h2.8m0-29.7h-2.8M548.7 328.7v29.7m-1.4 0h2.8m0-29.7h-2.8M500.0 348.6v29.7m-1.4 0h2.8m0-29.7h-2.8M548.9 335.9v29.7m-1.4 0h2.8m0-29.7h-2.8M500.3 355.8v29.7m-1.4 0h2.8m0-29.7h-2.8M549.2 326.6v29.7m-1.4 0h2.8m0-29.7h-2.8M500.7 356.4v29.7m-1.4 0h2.8m0-29.7h-2.8M549.5 325.9v29.7m-1.4 0h2.8m0-29.7h-2.8M501.0 354.9v29.7m-1.4 0h2.8m0-29.7h-2.8M549.8 326.4v29.7m-1.4 0h2.8m0-29.7h-2.8M501.4 350.5v29.7m-1.4 0h2.8m0-29.7h-2.8M550.1 332.2v29.7m-1.4 0h2.8m0-29.7h-2.8M501.7 353.7v29.7m-1.4 0h2.8m0-29.7h-2.8M550.3 334.2v29.7m-1.4 0h2.8m0-29.7h-2.8M502.1 348.5v29.7m-1.4 0h2.8m0-29.7h-2.8M550.6 336.3v29.7m-1.4 0h2.8m0-29.7h-2.8M502.4 357.1v29.7m-1.4 0h2.8m0-29.7h-2.8M550.9 329.8v29.7m-1.4 0h2.8m0-29.7h-2.8M502.7 353.4v29.7m-1.4 0h2.8m0-29.7h-2.8M551.1 326.6v29.7m-1.4 0h2.8m0-29.7h-2.8M503.1 350.8v29.7m-1.4 0h2.8m0-29.7h-2.8M551.4 324.3v29.7m-1.4 0h2.8m0-29.7h-2.8M503.4 351.6v29.7m-1.4 0h2.8m0-29.7h-2.8M551.7 330.4v29.7m-1.4 0h2.8m0-29.7h-2.8M503.8 356.5v29.7m-1.4 0h2.8m0-29.7h-2.8M552.0 333.3v29.7m-1.4 0h2.8m0-29.7h-2.8M504.1 354.2v29.7m-1.4 0h2.8m0-29.7h-2.8M552.2 327.9v29.7m-1.4 0h2.8m0-29.7h-2.8M504.5 349.9v29.7m-1.4 0h2.8m0-29.7h-2.8M552.5 328.0v29.7m-1.4 0h2.8m0-29.7h-2.8M504.8 351.5v29.7m-1.4 0h2.8m0-29.7h-2.8M552.8 321.5v29.7m-1.4 0h2.8m0-29.7h-2.8M505.2 353.6v29.7m-1.4 0h2.8m0-29.7h-2.8M553.0 322.9v29.7m-1.4 0h2.8m0-29.7h-2.8M505.5 348.3v29.7m-1.4 0h2.8m0-29.7h-2.8M553.3 329.3v29.7m-1.4 0h2.8m0-29.7h-2.8M505.8 348.1v29.7m-1.4 0h2.8m0-29.7h-2.8M553.6 335.8v29.7m-1.4 0h2.8m0-29.7h-2.8M506.2 349.6v29.7m-1.4 0h2.8m0-29.7h-2.8M553.8 335.4v29.7m-1.4 0h2.8m0-29.7h-2.8M506.5 354.6v29.7m-1.4 0h2.8m0-29.7h-2.8M554.1 327.0v29.7m-1.4 0h2.8m0-29.7h-2.8M506.9 351.3v29.7m-1.4 0h2.8m0-29.7h-2.8M554.4 334.2v29.7m-1.4 0h2.8m0-29.7h-2.8M507.2 348.2v29.7m-1.4 0h2.8m0-29.7h-2.8M554.6 329.2v29.7m-1.4 0h2.8m0-29.7h-2.8M507.6 347.2v29.7m-1.4 0h2.8m0-29.7h-2.8M554.9 329.1v29.7m-1.4 0h2.8m0-29.7h-2.8M507.9 347.8v29.7m-1.4 0h2.8m0-29.7h-2.8M555.2 329.1v29.7m-1.4 0h2.8m0-29.7h-2.8M508.3 353.2v29.7m-1.4 0h2.8m0-29.7h-2.8M555.4 334.3v29.7m-1.4 0h2.8m0-29.7h-2.8M508.6 349.5v29.7m-1.4 0h2.8m0-29.7h-2.8M555.7 329.5v29.7m-1.4 0h2.8m0-29.7h-2.8M508.9 352.3v29.7m-1.4 0h2.8m0-29.7h-2.8M556.0 327.4v29.7m-1.4 0h2.8m0-29.7h-2.8M509.3 344.4v29.7m-1.4 0h2.8m0-29.7h-2.8M556.2 333.0v29.7m-1.4 0h2.8m0-29.7h-2.8M509.6 344.7v29.7m-1.4 0h2.8m0-29.7h-2.8M556.5 332.2v29.7m-1.4 0h2.8m0-29.7h-2.8M510.0 344.5v29.7m-1.4 0h2.8m0-29.7h-2.8M556.8 335.8v29.7m-1.4 0h2.8m0-29.7h-2.8M510.3 344.0v29.7m-1.4 0h2.8m0-29.7h-2.8M557.0 331.8v29.7m-1.4 0h2.8m0-29.7h-2.8M510.7 354.1v29.7m-1.4 0h2.8m0-29.7h-2.8M557.3 324.5v29.7m-1.4 0h2.8m0-29.7h-2.8M511.0 353.9v29.7m-1.4 0h2.8m0-29.7h-2.8M557.5 325.0v29.7m-1.4 0h2.8m0-29.7h-2.8M511.3 340.6v29.7m-1.4 0h2.8m0-29.7h-2.8M557.8 331.1v29.7m-1.4 0h2.8m0-29.7h-2.8M511.7 350.4v29.7m-1.4 0h2.8m0-29.7h-2.8M558.1 327.3v29.7m-1.4 0h2.8m0-29.7h-2.8M512.0 337.2v29.7m-1.4 0h2.8m0-29.7h-2.8M558.3 327.9v29.7m-1.4 0h2.8m0-29.7h-2.8M512.4 346.0v29.7m-1.4 0h2.8m0-29.7h-2.8M558.6 326.5v29.7m-1.4 0h2.8m0-29.7h-2.8M512.7 345.9v29.7m-1.4 0h2.8m0-29.7h-2.8M558.8 320.8v29.7m-1.4 0h2.8m0-29.7h-2.8M513.1 344.6v29.7m-1.4 0h2.8m0-29.7h-2.8M559.1 335.2v29.7m-1.4 0h2.8m0-29.7h-2.8M513.4 353.0v29.7m-1.4 0h2.8m0-29.7h-2.8M559.4 326.4v29.7m-1.4 0h2.8m0-29.7h-2.8M513.8 343.7v29.7m-1.4 0h2.8m0-29.7h-2.8M559.6 329.4v29.7m-1.4 0h2.8m0-29.7h-2.8M514.1 350.7v29.7m-1.4 0h2.8m0-29.7h-2.8M559.9 330.7v29.7m-1.4 0h2.8m0-29.7h-2.8M514.4 341.5v29.7m-1.4 0h2.8m0-29.7h-2.8M560.1 328.4v29.7m-1.4 0h2.8m0-29.7h-2.8M514.8 346.6v29.7m-1.4 0h2.8m0-29.7h-2.8M560.4 333.5v29.7m-1.4 0h2.8m0-29.7h-2.8M515.1 350.7v29.7m-1.4 0h2.8m0-29.7h-2.8M560.6 329.8v29.7m-1.4 0h2.8m0-29.7h-2.8M515.5 350.7v29.7m-1.4 0h2.8m0-29.7h-2.8M560.9 326.1v29.7m-1.4 0h2.8m0-29.7h-2.8M515.8 351.8v29.7m-1.4 0h2.8m0-29.7h-2.8M561.2 326.0v29.7m-1.4 0h2.8m0-29.7h-2.8M516.2 347.0v29.7m-1.4 0h2.8m0-29.7h-2.8M561.4 331.4v29.7m-1.4 0h2.8m0-29.7h-2.8M516.5 341.6v29.7m-1.4 0h2.8m0-29.7h-2.8M561.7 324.8v29.7m-1.4 0h2.8m0-29.7h-2.8M516.9 338.0v29.7m-1.4 0h2.8m0-29.7h-2.8M561.9 328.3v29.7m-1.4 0h2.8m0-29.7h-2.8M517.2 344.7v29.7m-1.4 0h2.8m0-29.7h-2.8M562.2 326.3v29.7m-1.4 0h2.8m0-29.7h-2.8M517.5 346.8v29.7m-1.4 0h2.8m0-29.7h-2.8M562.4 319.1v29.7m-1.4 0h2.8m0-29.7h-2.8M517.9 344.5v29.7m-1.4 0h2.8m0-29.7h-2.8M562.7 327.9v29.7m-1.4 0h2.8m0-29.7h-2.8M518.2 343.4v29.7m-1.4 0h2.8m0-29.7h-2.8M562.9 330.8v29.7m-1.4 0h2.8m0-29.7h-2.8M518.6 351.4v29.7m-1.4 0h2.8m0-29.7h-2.8M563.2 325.8v29.7m-1.4 0h2.8m0-29.7h-2.8M518.9 340.3v29.7m-1.4 0h2.8m0-29.7h-2.8M563.4 325.1v29.7m-1.4 0h2.8m0-29.7h-2.8M519.3 344.3v29.7m-1.4 0h2.8m0-29.7h-2.8M563.7 329.9v29.7m-1.4 0h2.8m0-29.7h-2.8M519.6 340.3v29.7m-1.4 0h2.8m0-29.7h-2.8M563.9 331.6v29.7m-1.4 0h2.8m0-29.7h-2.8M520.0 339.5v29.7m-1.4 0h2.8m0-29.7h-2.8M564.2 330.8v29.7m-1.4 0h2.8m0-29.7h-2.8M520.3 345.2v29.7m-1.4 0h2.8m0-29.7h-2.8M564.4 329.4v29.7m-1.4 0h2.8m0-29.7h-2.8M520.6 352.0v29.7m-1.4 0h2.8m0-29.7h-2.8M564.7 326.4v29.7m-1.4 0h2.8m0-29.7h-2.8M521.0 342.5v29.7m-1.4 0h2.8m0-29.7h-2.8M564.9 329.4v29.7m-1.4 0h2.8m0-29.7h-2.8M521.3 346.5v29.7m-1.4 0h2.8m0-29.7h-2.8M565.2 322.1v29.7m-1.4 0h2.8m0-29.7h-2.8M521.7 343.9v29.7m-1.4 0h2.8m0-29.7h-2.8M565.4 324.5v29.7m-1.4 0h2.8m0-29.7h-2.8M522.0 345.2v29.7m-1.4 0h2.8m0-29.7h-2.8M565.7 332.9v29.7m-1.4 0h2.8m0-29.7h-2.8M522.4 342.7v29.7m-1.4 0h2.8m0-29.7h-2.8M565.9 327.0v29.7m-1.4 0h2.8m0-29.7h-2.8M522.7 343.1v29.7m-1.4 0h2.8m0-29.7h-2.8M566.2 316.4v29.7m-1.4 0h2.8m0-29.7h-2.8M523.1 345.3v29.7m-1.4 0h2.8m0-29.7h-2.8M566.4 329.6v29.7m-1.4 0h2.8m0-29.7h-2.8M523.4 342.6v29.7m-1.4 0h2.8m0-29.7h-2.8M566.7 325.8v29.7m-1.4 0h2.8m0-29.7h-2.8M523.7 338.9v29.7m-1.4 0h2.8m0-29.7h-2.8M566.9 326.6v29.7m-1.4 0h2.8m0-29.7h-2.8M524.1 346.5v29.7m-1.4 0h2.8m0-29.7h-2.8M567.1 327.0v29.7m-1.4 0h2.8m0-29.7h-2.8M524.4 346.9v29.7m-1.4 0h2.8m0-29.7h-2.8M567.4 317.0v29.7m-1.4 0h2.8m0-29.7h-2.8M524.8 339.4v29.7m-1.4 0h2.8m0-29.7h-2.8M567.6 328.5v29.7m-1.4 0h2.8m0-29.7h-2.8M525.1 341.1v29.7m-1.4 0h2.8m0-29.7h-2.8M567.9 320.8v29.7m-1.4 0h2.8m0-29.7h-2.8M525.5 338.3v29.7m-1.4 0h2.8m0-29.7h-2.8M568.1 332.5v29.7m-1.4 0h2.8m0-29.7h-2.8M525.8 335.6v29.7m-1.4 0h2.8m0-29.7h-2.8M568.4 323.5v29.7m-1.4 0h2.8m0-29.7h-2.8M526.2 336.2v29.7m-1.4 0h2.8m0-29.7h-2.8M568.6 325.3v29.7m-1.4 0h2.8m0-29.7h-2.8M526.5 343.1v29.7m-1.4 0h2.8m0-29.7h-2.8M568.8 330.0v29.7m-1.4 0h2.8m0-29.7h-2.8M526.8 332.1v29.7m-1.4 0h2.8m0-29.7h-2.8M569.1 333.5v29.7m-1.4 0h2.8m0-29.7h-2.8M527.2 337.7v29.7m-1.4 0h2.8m0-29.7h-2.8M569.3 325.3v29.7m-1.4 0h2.8m0-29.7h-2.8M527.5 346.7v29.7m-1.4 0h2.8m0-29.7h-2.8M569.6 327.3v29.7m-1.4 0h2.8m0-29.7h-2.8M527.9 334.8v29.7m-1.4 0h2.8m0-29.7h-2.8M569.8 325.1v29.7m-1.4 0h2.8m0-29.7h-2.8M528.2 336.7v29.7m-1.4 0h2.8m0-29.7h-2.8M570.1 323.7v29.7m-1.4 0h2.8m0-29.7h-2.8M528.6 338.1v29.7m-1.4 0h2.8m0-29.7h-2.8M570.3 331.3v29.7m-1.4 0h2.8m0-29.7h-2.8M528.9 340.7v29.7m-1.4 0h2.8m0-29.7h-2.8M570.5 322.2v29.7m-1.4 0h2.8m0-29.7h-2.8M529.3 350.1v29.7m-1.4 0h2.8m0-29.7h-2.8M570.8 323.8v29.7m-1.4 0h2.8m0-29.7h-2.8M529.6 339.4v29.7m-1.4 0h2.8m0-29.7h-2.8M571.0 328.0v29.7m-1.4 0h2.8m0-29.7h-2.8M529.9 341.8v29.7m-1.4 0h2.8m0-29.7h-2.8M571.3 326.6v29.7m-1.4 0h2.8m0-29.7h-2.8M530.3 340.5v29.7m-1.4 0h2.8m0-29.7h-2.8M571.5 336.4v29.7m-1.4 0h2.8m0-29.7h-2.8M530.6 338.8v29.7m-1.4 0h2.8m0-29.7h-2.8M571.7 323.6v29.7m-1.4 0h2.8m0-29.7h-2.8M531.0 339.6v29.7m-1.4 0h2.8m0-29.7h-2.8M572.0 324.7v29.7m-1.4 0h2.8m0-29.7h-2.8M531.3 336.7v29.7m-1.4 0h2.8m0-29.7h-2.8M572.2 328.8v29.7m-1.4 0h2.8m0-29.7h-2.8M531.7 339.4v29.7m-1.4 0h2.8m0-29.7h-2.8M572.4 326.9v29.7m-1.4 0h2.8m0-29.7h-2.8M532.0 341.3v29.7m-1.4 0h2.8m0-29.7h-2.8M572.7 327.3v29.7m-1.4 0h2.8m0-29.7h-2.8M532.4 332.4v29.7m-1.4 0h2.8m0-29.7h-2.8M572.9 331.6v29.7m-1.4 0h2.8m0-29.7h-2.8M532.7 336.1v29.7m-1.4 0h2.8m0-29.7h-2.8M573.1 333.0v29.7m-1.4 0h2.8m0-29.7h-2.8M533.0 334.7v29.7m-1.4 0h2.8m0-29.7h-2.8M573.4 330.5v29.7m-1.4 0h2.8m0-29.7h-2.8M533.4 338.5v29.7m-1.4 0h2.8m0-29.7h-2.8M573.6 317.3v29.7m-1.4 0h2.8m0-29.7h-2.8M533.7 331.0v29.7m-1.4 0h2.8m0-29.7h-2.8M573.9 323.7v29.7m-1.4 0h2.8m0-29.7h-2.8M534.1 342.6v29.7m-1.4 0h2.8m0-29.7h-2.8M574.1 320.6v29.7m-1.4 0h2.8m0-29.7h-2.8M534.4 340.4v29.7m-1.4 0h2.8m0-29.7h-2.8M574.3 332.7v29.7m-1.4 0h2.8m0-29.7h-2.8M534.8 338.6v29.7m-1.4 0h2.8m0-29.7h-2.8M574.6 331.0v29.7m-1.4 0h2.8m0-29.7h-2.8M535.1 334.4v29.7m-1.4 0h2.8m0-29.7h-2.8M574.8 328.3v29.7m-1.4 0h2.8m0-29.7h-2.8M535.5 337.2v29.7m-1.4 0h2.8m0-29.7h-2.8M575.0 330.1v29.7m-1.4 0h2.8m0-29.7h-2.8M535.8 339.0v29.7m-1.4 0h2.8m0-29.7h-2.8M575.2 327.6v29.7m-1.4 0h2.8m0-29.7h-2.8M536.1 333.1v29.7m-1.4 0h2.8m0-29.7h-2.8M575.5 326.3v29.7m-1.4 0h2.8m0-29.7h-2.8M536.5 337.5v29.7m-1.4 0h2.8m0-29.7h-2.8M575.7 322.0v29.7m-1.4 0h2.8m0-29.7h-2.8M536.8 330.6v29.7m-1.4 0h2.8m0-29.7h-2.8M575.9 327.1v29.7m-1.4 0h2.8m0-29.7h-2.8M537.2 333.3v29.7m-1.4 0h2.8m0-29.7h-2.8M576.2 327.8v29.7m-1.4 0h2.8m0-29.7h-2.8M537.5 324.6v29.7m-1.4 0h2.8m0-29.7h-2.8M576.4 327.6v29.7m-1.4 0h2.8m0-29.7h-2.8M537.9 334.2v29.7m-1.4 0h2.8m0-29.7h-2.8M576.6 332.2v29.7m-1.4 0h2.8m0-29.7h-2.8M538.2 327.0v29.7m-1.4 0h2.8m0-29.7h-2.8M576.9 327.9v29.7m-1.4 0h2.8m0-29.7h-2.8M538.6 336.8v29.7m-1.4 0h2.8m0-29.7h-2.8M577.1 331.2v29.7m-1.4 0h2.8m0-29.7h-2.8M538.9 339.5v29.7m-1.4 0h2.8m0-29.7h-2.8M577.3 333.6v29.7m-1.4 0h2.8m0-29.7h-2.8M539.2 330.3v29.7m-1.4 0h2.8m0-29.7h-2.8M577.6 332.0v29.7m-1.4 0h2.8m0-29.7h-2.8M539.6 333.0v29.7m-1.4 0h2.8m0-29.7h-2.8M577.8 326.3v29.7m-1.4 0h2.8m0-29.7h-2.8M539.9 340.4v29.7m-1.4 0h2.8m0-29.7h-2.8M578.0 327.1v29.7m-1.4 0h2.8m0-29.7h-2.8M540.3 330.6v29.7m-1.4 0h2.8m0-29.7h-2.8M578.2 328.1v29.7m-1.4 0h2.8m0-29.7h-2.8M540.6 330.5v29.7m-1.4 0h2.8m0-29.7h-2.8M578.5 333.9v29.7m-1.4 0h2.8m0-29.7h-2.8M541.0 335.3v29.7m-1.4 0h2.8m0-29.7h-2.8M578.7 335.6v29.7m-1.4 0h2.8m0-29.7h-2.8M541.3 335.3v29.7m-1.4 0h2.8m0-29.7h-2.8M578.9 327.6v29.7m-1.4 0h2.8m0-29.7h-2.8M541.7 337.7v29.7m-1.4 0h2.8m0-29.7h-2.8M579.1 327.5v29.7m-1.4 0h2.8m0-29.7h-2.8M542.0 331.4v29.7m-1.4 0h2.8m0-29.7h-2.8M579.4 329.6v29.7m-1.4 0h2.8m0-29.7h-2.8M542.3 333.3v29.7m-1.4 0h2.8m0-29.7h-2.8M579.6 335.2v29.7m-1.4 0h2.8m0-29.7h-2.8M542.7 330.5v29.7m-1.4 0h2.8m0-29.7h-2.8M579.8 331.9v29.7m-1.4 0h2.8m0-29.7h-2.8M543.0 332.7v29.7m-1.4 0h2.8m0-29.7h-2.8M580.0 325.5v29.7m-1.4 0h2.8m0-29.7h-2.8M543.4 328.3v29.7m-1.4 0h2.8m0-29.7h-2.8M580.3 329.8v29.7m-1.4 0h2.8m0-29.7h-2.8M543.7 334.2v29.7m-1.4 0h2.8m0-29.7h-2.8M580.5 332.1v29.7m-1.4 0h2.8m0-29.7h-2.8M544.1 334.4v29.7m-1.4 0h2.8m0-29.7h-2.8M580.7 331.1v29.7m-1.4 0h2.8m0-29.7h-2.8M544.4 330.5v29.7m-1.4 0h2.8m0-29.7h-2.8M580.9 332.7v29.7m-1.4 0h2.8m0-29.7h-2.8M544.8 328.1v29.7m-1.4 0h2.8m0-29.7h-2.8M581.2 325.6v29.7m-1.4 0h2.8m0-29.7h-2.8M545.1 330.7v29.7m-1.4 0h2.8m0-29.7h-2.8M581.4 325.4v29.7m-1.4 0h2.8m0-29.7h-2.8M545.4 329.8v29.7m-1.4 0h2.8m0-29.7h-2.8M581.6 328.2v29.7m-1.4 0h2.8m0-29.7h-2.8M545.8 329.5v29.7m-1.4 0h2.8m0-29.7h-2.8M581.8 331.2v29.7m-1.4 0h2.8m0-29.7h-2.8M546.1 328.4v29.7m-1.4 0h2.8m0-29.7h-2.8M582.1 329.7v29.7m-1.4 0h2.8m0-29.7h-2.8M546.5 324.6v29.7m-1.4 0h2.8m0-29.7h-2.8M582.3 332.1v29.7m-1.4 0h2.8m0-29.7h-2.8M546.8 327.8v29.7m-1.4 0h2.8m0-29.7h-2.8M582.5 333.3v29.7m-1.4 0h2.8m0-29.7h-2.8M547.2 320.3v29.7m-1.4 0h2.8m0-29.7h-2.8M582.7 328.5v29.7m-1.4 0h2.8m0-29.7h-2.8M547.5 332.1v29.7m-1.4 0h2.8m0-29.7h-2.8M582.9 322.0v29.7m-1.4 0h2.8m0-29.7h-2.8M547.9 329.5v29.7m-1.4 0h2.8m0-29.7h-2.8M583.2 332.3v29.7m-1.4 0h2.8m0-29.7h-2.8M548.2 331.3v29.7m-1.4 0h2.8m0-29.7h-2.8M583.4 326.0v29.7m-1.4 0h2.8m0-29.7h-2.8M548.5 331.7v29.7m-1.4 0h2.8m0-29.7h-2.8M583.6 332.8v29.7m-1.4 0h2.8m0-29.7h-2.8M548.9 326.7v29.7m-1.4 0h2.8m0-29.7h-2.8M583.8 335.3v29.7m-1.4 0h2.8m0-29.7h-2.8M549.2 330.3v29.7m-1.4 0h2.8m0-29.7h-2.8M584.0 332.5v29.7m-1.4 0h2.8m0-29.7h-2.8M549.6 328.5v29.7m-1.4 0h2.8m0-29.7h-2.8M584.3 334.8v29.7m-1.4 0h2.8m0-29.7h-2.8M549.9 330.6v29.7m-1.4 0h2.8m0-29.7h-2.8M584.5 337.3v29.7m-1.4 0h2.8m0-29.7h-2.8M550.3 331.9v29.7m-1.4 0h2.8m0-29.7h-2.8M584.7 330.4v29.7m-1.4 0h2.8m0-29.7h-2.8M550.6 329.1v29.7m-1.4 0h2.8m0-29.7h-2.8M584.9 336.7v29.7m-1.4 0h2.8m0-29.7h-2.8M551.0 328.4v29.7m-1.4 0h2.8m0-29.7h-2.8M585.1 334.7v29.7m-1.4 0h2.8m0-29.7h-2.8M551.3 331.8v29.7m-1.4 0h2.8m0-29.7h-2.8M585.3 332.5v29.7m-1.4 0h2.8m0-29.7h-2.8M551.6 320.1v29.7m-1.4 0h2.8m0-29.7h-2.8M585.6 333.9v29.7m-1.4 0h2.8m0-29.7h-2.8M552.0 330.3v29.7m-1.4 0h2.8m0-29.7h-2.8M585.8 334.1v29.7m-1.4 0h2.8m0-29.7h-2.8M552.3 326.3v29.7m-1.4 0h2.8m0-29.7h-2.8M586.0 338.6v29.7m-1.4 0h2.8m0-29.7h-2.8M552.7 328.8v29.7m-1.4 0h2.8m0-29.7h-2.8M586.2 331.3v29.7m-1.4 0h2.8m0-29.7h-2.8M553.0 326.3v29.7m-1.4 0h2.8m0-29.7h-2.8M586.4 335.4v29.7m-1.4 0h2.8m0-29.7h-2.8M553.4 324.7v29.7m-1.4 0h2.8m0-29.7h-2.8M586.6 330.0v29.7m-1.4 0h2.8m0-29.7h-2.8M553.7 337.2v29.7m-1.4 0h2.8m0-29.7h-2.8M586.9 339.5v29.7m-1.4 0h2.8m0-29.7h-2.8M554.1 333.3v29.7m-1.4 0h2.8m0-29.7h-2.8M587.1 339.9v29.7m-1.4 0h2.8m0-29.7h-2.8M554.4 331.4v29.7m-1.4 0h2.8m0-29.7h-2.8M587.3 327.6v29.7m-1.4 0h2.8m0-29.7h-2.8M554.7 333.7v29.7m-1.4 0h2.8m0-29.7h-2.8M587.5 339.6v29.7m-1.4 0h2.8m0-29.7h-2.8M555.1 330.8v29.7m-1.4 0h2.8m0-29.7h-2.8M587.7 326.8v29.7m-1.4 0h2.8m0-29.7h-2.8M555.4 333.8v29.7m-1.4 0h2.8m0-29.7h-2.8M587.9 340.4v29.7m-1.4 0h2.8m0-29.7h-2.8M555.8 326.6v29.7m-1.4 0h2.8m0-29.7h-2.8M588.1 335.5v29.7m-1.4 0h2.8m0-29.7h-2.8M556.1 331.7v29.7m-1.4 0h2.8m0-29.7h-2.8M588.4 334.8v29.7m-1.4 0h2.8m0-29.7h-2.8M556.5 333.0v29.7m-1.4 0h2.8m0-29.7h-2.8M588.6 335.6v29.7m-1.4 0h2.8m0-29.7h-2.8M556.8 331.2v29.7m-1.4 0h2.8m0-29.7h-2.8M588.8 335.7v29.7m-1.4 0h2.8m0-29.7h-2.8M557.1 322.3v29.7m-1.4 0h2.8m0-29.7h-2.8M589.0 331.5v29.7m-1.4 0h2.8m0-29.7h-2.8M557.5 339.3v29.7m-1.4 0h2.8m0-29.7h-2.8M589.2 336.8v29.7m-1.4 0h2.8m0-29.7h-2.8M557.8 333.5v29.7m-1.4 0h2.8m0-29.7h-2.8M589.4 340.4v29.7m-1.4 0h2.8m0-29.7h-2.8M558.2 335.1v29.7m-1.4 0h2.8m0-29.7h-2.8M589.6 338.2v29.7m-1.4 0h2.8m0-29.7h-2.8M558.5 325.6v29.7m-1.4 0h2.8m0-29.7h-2.8M589.8 336.1v29.7m-1.4 0h2.8m0-29.7h-2.8M558.9 320.2v29.7m-1.4 0h2.8m0-29.7h-2.8M590.0 335.4v29.7m-1.4 0h2.8m0-29.7h-2.8M559.2 331.6v29.7m-1.4 0h2.8m0-29.7h-2.8M590.3 327.5v29.7m-1.4 0h2.8m0-29.7h-2.8M559.6 328.6v29.7m-1.4 0h2.8m0-29.7h-2.8M590.5 339.8v29.7m-1.4 0h2.8m0-29.7h-2.8M559.9 333.2v29.7m-1.4 0h2.8m0-29.7h-2.8M590.7 332.8v29.7m-1.4 0h2.8m0-29.7h-2.8M560.2 325.1v29.7m-1.4 0h2.8m0-29.7h-2.8M590.9 329.0v29.7m-1.4 0h2.8m0-29.7h-2.8M560.6 323.6v29.7m-1.4 0h2.8m0-29.7h-2.8M591.1 339.0v29.7m-1.4 0h2.8m0-29.7h-2.8M560.9 336.1v29.7m-1.4 0h2.8m0-29.7h-2.8M591.3 332.3v29.7m-1.4 0h2.8m0-29.7h-2.8M561.3 333.3v29.7m-1.4 0h2.8m0-29.7h-2.8M591.5 338.8v29.7m-1.4 0h2.8m0-29.7h-2.8M561.6 325.6v29.7m-1.4 0h2.8m0-29.7h-2.8M591.7 346.1v29.7m-1.4 0h2.8m0-29.7h-2.8M562.0 317.4v29.7m-1.4 0h2.8m0-29.7h-2.8M591.9 337.1v29.7m-1.4 0h2.8m0-29.7h-2.8M562.3 328.5v29.7m-1.4 0h2.8m0-29.7h-2.8M592.1 346.1v29.7m-1.4 0h2.8m0-29.7h-2.8M562.7 334.9v29.7m-1.4 0h2.8m0-29.7h-2.8M592.3 346.8v29.7m-1.4 0h2.8m0-29.7h-2.8M563.0 328.1v29.7m-1.4 0h2.8m0-29.7h-2.8M592.5 341.7v29.7m-1.4 0h2.8m0-29.7h-2.8M563.3 333.1v29.7m-1.4 0h2.8m0-29.7h-2.8M592.8 339.9v29.7m-1.4 0h2.8m0-29.7h-2.8M563.7 329.0v29.7m-1.4 0h2.8m0-29.7h-2.8M593.0 337.2v29.7m-1.4 0h2.8m0-29.7h-2.8M564.0 325.9v29.7m-1.4 0h2.8m0-29.7h-2.8M593.2 333.1v29.7m-1.4 0h2.8m0-29.7h-2.8M564.4 335.5v29.7m-1.4 0h2.8m0-29.7h-2.8M593.4 336.4v29.7m-1.4 0h2.8m0-29.7h-2.8M564.7 319.0v29.7m-1.4 0h2.8m0-29.7h-2.8M593.6 339.4v29.7m-1.4 0h2.8m0-29.7h-2.8M565.1 327.3v29.7m-1.4 0h2.8m0-29.7h-2.8M593.8 339.2v29.7m-1.4 0h2.8m0-29.7h-2.8M565.4 334.9v29.7m-1.4 0h2.8m0-29.7h-2.8M594.0 338.2v29.7m-1.4 0h2.8m0-29.7h-2.8M565.8 326.3v29.7m-1.4 0h2.8m0-29.7h-2.8M594.2 335.7v29.7m-1.4 0h2.8m0-29.7h-2.8M566.1 327.3v29.7m-1.4 0h2.8m0-29.7h-2.8M594.4 337.1v29.7m-1.4 0h2.8m0-29.7h-2.8M566.4 328.2v29.7m-1.4 0h2.8m0-29.7h-2.8M594.6 350.0v29.7m-1.4 0h2.8m0-29.7h-2.8M566.8 329.0v29.7m-1.4 0h2.8m0-29.7h-2.8M594.8 335.6v29.7m-1.4 0h2.8m0-29.7h-2.8M567.1 335.3v29.7m-1.4 0h2.8m0-29.7h-2.8M595.0 342.8v29.7m-1.4 0h2.8m0-29.7h-2.8M567.5 330.7v29.7m-1.4 0h2.8m0-29.7h-2.8M595.2 342.3v29.7m-1.4 0h2.8m0-29.7h-2.8M567.8 330.8v29.7m-1.4 0h2.8m0-29.7h-2.8M595.4 342.2v29.7m-1.4 0h2.8m0-29.7h-2.8M568.2 333.3v29.7m-1.4 0h2.8m0-29.7h-2.8M595.6 343.7v29.7m-1.4 0h2.8m0-29.7h-2.8M568.5 333.0v29.7m-1.4 0h2.8m0-29.7h-2.8M595.8 337.7v29.7m-1.4 0h2.8m0-29.7h-2.8M568.9 327.6v29.7m-1.4 0h2.8m0-29.7h-2.8M596.0 336.9v29.7m-1.4 0h2.8m0-29.7h-2.8M569.2 331.5v29.7m-1.4 0h2.8m0-29.7h-2.8M596.2 343.4v29.7m-1.4 0h2.8m0-29.7h-2.8M569.5 325.8v29.7m-1.4 0h2.8m0-29.7h-2.8M596.4 342.5v29.7m-1.4 0h2.8m0-29.7h-2.8M569.9 338.4v29.7m-1.4 0h2.8m0-29.7h-2.8M596.6 345.3v29.7m-1.4 0h2.8m0-29.7h-2.8M570.2 323.2v29.7m-1.4 0h2.8m0-29.7h-2.8M596.8 339.9v29.7m-1.4 0h2.8m0-29.7h-2.8M570.6 330.4v29.7m-1.4 0h2.8m0-29.7h-2.8M597.0 340.3v29.7m-1.4 0h2.8m0-29.7h-2.8M570.9 329.4v29.7m-1.4 0h2.8m0-29.7h-2.8M597.2 345.4v29.7m-1.4 0h2.8m0-29.7h-2.8M571.3 329.2v29.7m-1.4 0h2.8m0-29.7h-2.8M597.4 336.2v29.7m-1.4 0h2.8m0-29.7h-2.8M571.6 330.9v29.7m-1.4 0h2.8m0-29.7h-2.8M597.6 340.3v29.7m-1.4 0h2.8m0-29.7h-2.8M572.0 328.4v29.7m-1.4 0h2.8m0-29.7h-2.8M597.8 338.5v29.7m-1.4 0h2.8m0-29.7h-2.8M572.3 322.4v29.7m-1.4 0h2.8m0-29.7h-2.8M598.0 335.9v29.7m-1.4 0h2.8m0-29.7h-2.8M572.6 326.6v29.7m-1.4 0h2.8m0-29.7h-2.8M598.2 336.7v29.7m-1.4 0h2.8m0-29.7h-2.8M573.0 317.1v29.7m-1.4 0h2.8m0-29.7h-2.8M598.4 345.9v29.7m-1.4 0h2.8m0-29.7h-2.8M573.3 323.4v29.7m-1.4 0h2.8m0-29.7h-2.8M598.6 338.3v29.7m-1.4 0h2.8m0-29.7h-2.8M573.7 330.4v29.7m-1.4 0h2.8m0-29.7h-2.8M598.8 331.5v29.7m-1.4 0h2.8m0-29.7h-2.8M574.0 333.7v29.7m-1.4 0h2.8m0-29.7h-2.8M599.0 338.3v29.7m-1.4 0h2.8m0-29.7h-2.8M574.4 331.0v29.7m-1.4 0h2.8m0-29.7h-2.8M599.2 339.6v29.7m-1.4 0h2.8m0-29.7h-2.8M574.7 329.6v29.7m-1.4 0h2.8m0-29.7h-2.8M599.4 342.1v29.7m-1.4 0h2.8m0-29.7h-2.8M575.1 328.4v29.7m-1.4 0h2.8m0-29.7h-2.8M599.6 334.3v29.7m-1.4 0h2.8m0-29.7h-2.8M575.4 322.5v29.7m-1.4 0h2.8m0-29.7h-2.8M599.8 341.7v29.7m-1.4 0h2.8m0-29.7h-2.8M575.7 334.4v29.7m-1.4 0h2.8m0-29.7h-2.8M600.0 339.8v29.7m-1.4 0h2.8m0-29.7h-2.8M576.1 331.0v29.7m-1.4 0h2.8m0-29.7h-2.8M600.2 342.8v29.7m-1.4 0h2.8m0-29.7h-2.8M576.4 331.0v29.7m-1.4 0h2.8m0-29.7h-2.8M600.4 346.3v29.7m-1.4 0h2.8m0-29.7h-2.8M576.8 323.0v29.7m-1.4 0h2.8m0-29.7h-2.8M600.6 343.4v29.7m-1.4 0h2.8m0-29.7h-2.8M577.1 328.6v29.7m-1.4 0h2.8m0-29.7h-2.8M600.8 341.1v29.7m-1.4 0h2.8m0-29.7h-2.8M577.5 325.9v29.7m-1.4 0h2.8m0-29.7h-2.8M601.0 339.3v29.7m-1.4 0h2.8m0-29.7h-2.8M577.8 325.4v29.7m-1.4 0h2.8m0-29.7h-2.8M601.2 338.1v29.7m-1.4 0h2.8m0-29.7h-2.8M578.2 340.0v29.7m-1.4 0h2.8m0-29.7h-2.8M601.4 349.7v29.7m-1.4 0h2.8m0-29.7h-2.8M578.5 329.9v29.7m-1.4 0h2.8m0-29.7h-2.8M601.6 345.9v29.7m-1.4 0h2.8m0-29.7h-2.8M578.8 326.0v29.7m-1.4 0h2.8m0-29.7h-2.8M601.8 331.9v29.7m-1.4 0h2.8m0-29.7h-2.8M579.2 322.7v29.7m-1.4 0h2.8m0-29.7h-2.8M602.0 343.6v29.7m-1.4 0h2.8m0-29.7h-2.8M579.5 336.2v29.7m-1.4 0h2.8m0-29.7h-2.8M602.2 343.0v29.7m-1.4 0h2.8m0-29.7h-2.8M579.9 326.4v29.7m-1.4 0h2.8m0-29.7h-2.8M602.4 342.2v29.7m-1.4 0h2.8m0-29.7h-2.8M580.2 326.6v29.7m-1.4 0h2.8m0-29.7h-2.8M602.6 337.6v29.7m-1.4 0h2.8m0-29.7h-2.8M580.6 329.8v29.7m-1.4 0h2.8m0-29.7h-2.8M602.7 341.8v29.7m-1.4 0h2.8m0-29.7h-2.8M580.9 327.6v29.7m-1.4 0h2.8m0-29.7h-2.8M602.9 339.9v29.7m-1.4 0h2.8m0-29.7h-2.8M581.3 327.3v29.7m-1.4 0h2.8m0-29.7h-2.8M603.1 344.6v29.7m-1.4 0h2.8m0-29.7h-2.8M581.6 336.9v29.7m-1.4 0h2.8m0-29.7h-2.8M603.3 342.9v29.7m-1.4 0h2.8m0-29.7h-2.8M581.9 340.5v29.7m-1.4 0h2.8m0-29.7h-2.8M603.5 337.2v29.7m-1.4 0h2.8m0-29.7h-2.8M582.3 332.7v29.7m-1.4 0h2.8m0-29.7h-2.8M603.7 339.2v29.7m-1.4 0h2.8m0-29.7h-2.8M582.6 331.0v29.7m-1.4 0h2.8m0-29.7h-2.8M603.9 344.5v29.7m-1.4 0h2.8m0-29.7h-2.8M583.0 334.1v29.7m-1.4 0h2.8m0-29.7h-2.8M604.1 348.8v29.7m-1.4 0h2.8m0-29.7h-2.8M583.3 329.8v29.7m-1.4 0h2.8m0-29.7h-2.8M604.3 339.2v29.7m-1.4 0h2.8m0-29.7h-2.8M583.7 331.5v29.7m-1.4 0h2.8m0-29.7h-2.8M604.5 345.6v29.7m-1.4 0h2.8m0-29.7h-2.8M584.0 329.6v29.7m-1.4 0h2.8m0-29.7h-2.8M604.7 348.1v29.7m-1.4 0h2.8m0-29.7h-2.8M584.4 339.6v29.7m-1.4 0h2.8m0-29.7h-2.8M604.9 338.7v29.7m-1.4 0h2.8m0-29.7h-2.8M584.7 334.4v29.7m-1.4 0h2.8m0-29.7h-2.8M605.0 348.8v29.7m-1.4 0h2.8m0-29.7h-2.8M585.0 325.2v29.7m-1.4 0h2.8m0-29.7h-2.8M605.2 345.6v29.7m-1.4 0h2.8m0-29.7h-2.8M585.4 332.4v29.7m-1.4 0h2.8m0-29.7h-2.8M605.4 339.0v29.7m-1.4 0h2.8m0-29.7h-2.8M585.7 338.9v29.7m-1.4 0h2.8m0-29.7h-2.8M605.6 345.8v29.7m-1.4 0h2.8m0-29.7h-2.8M586.1 331.8v29.7m-1.4 0h2.8m0-29.7h-2.8M605.8 346.9v29.7m-1.4 0h2.8m0-29.7h-2.8M586.4 336.6v29.7m-1.4 0h2.8m0-29.7h-2.8M606.0 348.3v29.7m-1.4 0h2.8m0-29.7h-2.8M586.8 336.5v29.7m-1.4 0h2.8m0-29.7h-2.8M606.2 346.9v29.7m-1.4 0h2.8m0-29.7h-2.8M587.1 329.5v29.7m-1.4 0h2.8m0-29.7h-2.8M606.4 343.6v29.7m-1.4 0h2.8m0-29.7h-2.8M587.5 335.1v29.7m-1.4 0h2.8m0-29.7h-2.8M606.6 334.4v29.7m-1.4 0h2.8m0-29.7h-2.8M587.8 343.5v29.7m-1.4 0h2.8m0-29.7h-2.8M606.8 344.0v29.7m-1.4 0h2.8m0-29.7h-2.8M588.1 330.7v29.7m-1.4 0h2.8m0-29.7h-2.8M606.9 338.2v29.7m-1.4 0h2.8m0-29.7h-2.8M588.5 336.2v29.7m-1.4 0h2.8m0-29.7h-2.8M607.1 345.9v29.7m-1.4 0h2.8m0-29.7h-2.8M588.8 333.0v29.7m-1.4 0h2.8m0-29.7h-2.8M607.3 344.1v29.7m-1.4 0h2.8m0-29.7h-2.8M589.2 332.0v29.7m-1.4 0h2.8m0-29.7h-2.8M607.5 342.9v29.7m-1.4 0h2.8m0-29.7h-2.8M589.5 335.4v29.7m-1.4 0h2.8m0-29.7h-2.8M607.7 343.4v29.7m-1.4 0h2.8m0-29.7h-2.8M589.9 338.8v29.7m-1.4 0h2.8m0-29.7h-2.8M607.9 345.6v29.7m-1.4 0h2.8m0-29.7h-2.8M590.2 336.8v29.7m-1.4 0h2.8m0-29.7h-2.8M608.1 347.9v29.7m-1.4 0h2.8m0-29.7h-2.8M590.6 341.7v29.7m-1.4 0h2.8m0-29.7h-2.8M608.3 348.8v29.7m-1.4 0h2.8m0-29.7h-2.8M590.9 337.6v29.7m-1.4 0h2.8m0-29.7h-2.8M608.4 345.8v29.7m-1.4 0h2.8m0-29.7h-2.8M591.2 333.6v29.7m-1.4 0h2.8m0-29.7h-2.8M608.6 345.1v29.7m-1.4 0h2.8m0-29.7h-2.8M591.6 339.9v29.7m-1.4 0h2.8m0-29.7h-2.8M608.8 347.6v29.7m-1.4 0h2.8m0-29.7h-2.8M591.9 335.7v29.7m-1.4 0h2.8m0-29.7h-2.8M609.0 341.3v29.7m-1.4 0h2.8m0-29.7h-2.8M592.3 331.3v29.7m-1.4 0h2.8m0-29.7h-2.8M609.2 348.1v29.7m-1.4 0h2.8m0-29.7h-2.8M592.6 342.0v29.7m-1.4 0h2.8m0-29.7h-2.8M609.4 348.5v29.7m-1.4 0h2.8m0-29.7h-2.8M593.0 332.3v29.7m-1.4 0h2.8m0-29.7h-2.8M609.6 346.1v29.7m-1.4 0h2.8m0-29.7h-2.8M593.3 339.1v29.7m-1.4 0h2.8m0-29.7h-2.8M609.7 343.4v29.7m-1.4 0h2.8m0-29.7h-2.8M593.7 339.8v29.7m-1.4 0h2.8m0-29.7h-2.8M609.9 346.4v29.7m-1.4 0h2.8m0-29.7h-2.8M594.0 335.2v29.7m-1.4 0h2.8m0-29.7h-2.8M610.1 342.2v29.7m-1.4 0h2.8m0-29.7h-2.8M594.3 342.1v29.7m-1.4 0h2.8m0-29.7h-2.8M610.3 348.8v29.7m-1.4 0h2.8m0-29.7h-2.8M594.7 335.4v29.7m-1.4 0h2.8m0-29.7h-2.8M610.5 343.3v29.7m-1.4 0h2.8m0-29.7h-2.8M595.0 342.9v29.7m-1.4 0h2.8m0-29.7h-2.8M610.7 349.9v29.7m-1.4 0h2.8m0-29.7h-2.8M595.4 338.2v29.7m-1.4 0h2.8m0-29.7h-2.8M610.8 354.1v29.7m-1.4 0h2.8m0-29.7h-2.8M595.7 338.5v29.7m-1.4 0h2.8m0-29.7h-2.8M611.0 343.3v29.7m-1.4 0h2.8m0-29.7h-2.8M596.1 344.3v29.7m-1.4 0h2.8m0-29.7h-2.8M611.2 346.9v29.7m-1.4 0h2.8m0-29.7h-2.8M596.4 341.5v29.7m-1.4 0h2.8m0-29.7h-2.8M611.4 347.9v29.7m-1.4 0h2.8m0-29.7h-2.8M596.8 336.2v29.7m-1.4 0h2.8m0-29.7h-2.8M611.6 343.0v29.7m-1.4 0h2.8m0-29.7h-2.8M597.1 339.7v29.7m-1.4 0h2.8m0-29.7h-2.8M611.8 353.6v29.7m-1.4 0h2.8m0-29.7h-2.8M597.4 336.5v29.7m-1.4 0h2.8m0-29.7h-2.8M611.9 353.5v29.7m-1.4 0h2.8m0-29.7h-2.8M597.8 341.7v29.7m-1.4 0h2.8m0-29.7h-2.8M612.1 343.5v29.7m-1.4 0h2.8m0-29.7h-2.8M598.1 342.1v29.7m-1.4 0h2.8m0-29.7h-2.8M612.3 350.4v29.7m-1.4 0h2.8m0-29.7h-2.8M598.5 337.5v29.7m-1.4 0h2.8m0-29.7h-2.8M612.5 339.4v29.7m-1.4 0h2.8m0-29.7h-2.8M598.8 342.8v29.7m-1.4 0h2.8m0-29.7h-2.8M612.7 343.7v29.7m-1.4 0h2.8m0-29.7h-2.8M599.2 343.4v29.7m-1.4 0h2.8m0-29.7h-2.8M612.8 340.5v29.7m-1.4 0h2.8m0-29.7h-2.8M599.5 341.2v29.7m-1.4 0h2.8m0-29.7h-2.8M613.0 345.1v29.7m-1.4 0h2.8m0-29.7h-2.8M599.9 335.9v29.7m-1.4 0h2.8m0-29.7h-2.8M613.2 347.4v29.7m-1.4 0h2.8m0-29.7h-2.8M600.2 342.8v29.7m-1.4 0h2.8m0-29.7h-2.8M613.4 346.2v29.7m-1.4 0h2.8m0-29.7h-2.8M600.5 337.5v29.7m-1.4 0h2.8m0-29.7h-2.8M613.6 349.4v29.7m-1.4 0h2.8m0-29.7h-2.8M600.9 335.3v29.7m-1.4 0h2.8m0-29.7h-2.8M613.7 350.8v29.7m-1.4 0h2.8m0-29.7h-2.8M601.2 344.6v29.7m-1.4 0h2.8m0-29.7h-2.8M613.9 355.6v29.7m-1.4 0h2.8m0-29.7h-2.8M601.6 346.4v29.7m-1.4 0h2.8m0-29.7h-2.8M614.1 350.2v29.7m-1.4 0h2.8m0-29.7h-2.8M601.9 344.1v29.7m-1.4 0h2.8m0-29.7h-2.8M614.3 348.9v29.7m-1.4 0h2.8m0-29.7h-2.8M602.3 337.8v29.7m-1.4 0h2.8m0-29.7h-2.8M614.5 354.9v29.7m-1.4 0h2.8m0-29.7h-2.8M602.6 345.5v29.7m-1.4 0h2.8m0-29.7h-2.8M614.6 347.8v29.7m-1.4 0h2.8m0-29.7h-2.8M603.0 338.9v29.7m-1.4 0h2.8m0-29.7h-2.8M614.8 355.1v29.7m-1.4 0h2.8m0-29.7h-2.8M603.3 345.9v29.7m-1.4 0h2.8m0-29.7h-2.8M615.0 344.3v29.7m-1.4 0h2.8m0-29.7h-2.8M603.6 346.7v29.7m-1.4 0h2.8m0-29.7h-2.8M615.2 356.9v29.7m-1.4 0h2.8m0-29.7h-2.8M604.0 344.0v29.7m-1.4 0h2.8m0-29.7h-2.8M615.4 350.9v29.7m-1.4 0h2.8m0-29.7h-2.8M604.3 342.6v29.7m-1.4 0h2.8m0-29.7h-2.8M615.5 346.7v29.7m-1.4 0h2.8m0-29.7h-2.8M604.7 348.8v29.7m-1.4 0h2.8m0-29.7h-2.8M615.7 360.4v29.7m-1.4 0h2.8m0-29.7h-2.8M605.0 345.1v29.7m-1.4 0h2.8m0-29.7h-2.8M615.9 348.9v29.7m-1.4 0h2.8m0-29.7h-2.8M605.4 348.1v29.7m-1.4 0h2.8m0-29.7h-2.8M616.1 348.3v29.7m-1.4 0h2.8m0-29.7h-2.8M605.7 348.0v29.7m-1.4 0h2.8m0-29.7h-2.8M616.2 353.0v29.7m-1.4 0h2.8m0-29.7h-2.8M606.0 341.0v29.7m-1.4 0h2.8m0-29.7h-2.8M616.4 345.3v29.7m-1.4 0h2.8m0-29.7h-2.8M606.4 345.1v29.7m-1.4 0h2.8m0-29.7h-2.8M616.6 353.1v29.7m-1.4 0h2.8m0-29.7h-2.8M606.7 346.7v29.7m-1.4 0h2.8m0-29.7h-2.8M616.8 354.8v29.7m-1.4 0h2.8m0-29.7h-2.8M607.1 340.1v29.7m-1.4 0h2.8m0-29.7h-2.8M616.9 351.8v29.7m-1.4 0h2.8m0-29.7h-2.8M607.4 343.4v29.7m-1.4 0h2.8m0-29.7h-2.8M617.1 350.3v29.7m-1.4 0h2.8m0-29.7h-2.8M607.8 347.4v29.7m-1.4 0h2.8m0-29.7h-2.8M617.3 346.0v29.7m-1.4 0h2.8m0-29.7h-2.8M608.1 345.3v29.7m-1.4 0h2.8m0-29.7h-2.8M617.5 345.3v29.7m-1.4 0h2.8m0-29.7h-2.8M608.5 347.5v29.7m-1.4 0h2.8m0-29.7h-2.8M617.6 346.6v29.7m-1.4 0h2.8m0-29.7h-2.8M608.8 344.6v29.7m-1.4 0h2.8m0-29.7h-2.8M617.8 351.1v29.7m-1.4 0h2.8m0-29.7h-2.8M609.1 344.1v29.7m-1.4 0h2.8m0-29.7h-2.8M618.0 354.9v29.7m-1.4 0h2.8m0-29.7h-2.8M609.5 344.4v29.7m-1.4 0h2.8m0-29.7h-2.8M618.2 353.8v29.7m-1.4 0h2.8m0-29.7h-2.8M609.8 348.3v29.7m-1.4 0h2.8m0-29.7h-2.8M618.3 346.1v29.7m-1.4 0h2.8m0-29.7h-2.8M610.2 346.4v29.7m-1.4 0h2.8m0-29.7h-2.8M618.5 347.0v29.7m-1.4 0h2.8m0-29.7h-2.8M610.5 345.9v29.7m-1.4 0h2.8m0-29.7h-2.8M618.7 349.4v29.7m-1.4 0h2.8m0-29.7h-2.8M610.9 355.0v29.7m-1.4 0h2.8m0-29.7h-2.8M618.9 348.9v29.7m-1.4 0h2.8m0-29.7h-2.8M611.2 354.1v29.7m-1.4 0h2.8m0-29.7h-2.8M619.0 352.4v29.7m-1.4 0h2.8m0-29.7h-2.8M611.6 342.5v29.7m-1.4 0h2.8m0-29.7h-2.8M619.2 341.3v29.7m-1.4 0h2.8m0-29.7h-2.8M611.9 350.7v29.7m-1.4 0h2.8m0-29.7h-2.8M619.4 342.7v29.7m-1.4 0h2.8m0-29.7h-2.8M612.2 351.0v29.7m-1.4 0h2.8m0-29.7h-2.8M619.6 355.0v29.7m-1.4 0h2.8m0-29.7h-2.8M612.6 349.8v29.7m-1.4 0h2.8m0-29.7h-2.8M619.7 350.0v29.7m-1.4 0h2.8m0-29.7h-2.8M612.9 347.3v29.7m-1.4 0h2.8m0-29.7h-2.8M619.9 352.0v29.7m-1.4 0h2.8m0-29.7h-2.8M613.3 347.2v29.7m-1.4 0h2.8m0-29.7h-2.8M620.1 348.8v29.7m-1.4 0h2.8m0-29.7h-2.8M613.6 347.1v29.7m-1.4 0h2.8m0-29.7h-2.8M620.3 355.8v29.7m-1.4 0h2.8m0-29.7h-2.8M614.0 346.2v29.7m-1.4 0h2.8m0-29.7h-2.8M620.4 352.7v29.7m-1.4 0h2.8m0-29.7h-2.8M614.3 344.2v29.7m-1.4 0h2.8m0-29.7h-2.8M620.6 348.3v29.7m-1.4 0h2.8m0-29.7h-2.8M614.7 343.4v29.7m-1.4 0h2.8m0-29.7h-2.8M620.8 350.5v29.7m-1.4 0h2.8m0-29.7h-2.8M615.0 351.9v29.7m-1.4 0h2.8m0-29.7h-2.8M620.9 352.6v29.7m-1.4 0h2.8m0-29.7h-2.8M615.3 347.2v29.7m-1.4 0h2.8m0-29.7h-2.8M621.1 353.9v29.7m-1.4 0h2.8m0-29.7h-2.8M615.7 348.0v29.7m-1.4 0h2.8m0-29.7h-2.8M621.3 353.0v29.7m-1.4 0h2.8m0-29.7h-2.8M616.0 350.6v29.7m-1.4 0h2.8m0-29.7h-2.8M621.5 353.7v29.7m-1.4 0h2.8m0-29.7h-2.8M616.4 339.6v29.7m-1.4 0h2.8m0-29.7h-2.8M621.6 346.3v29.7m-1.4 0h2.8m0-29.7h-2.8M616.7 352.9v29.7m-1.4 0h2.8m0-29.7h-2.8M621.8 351.2v29.7m-1.4 0h2.8m0-29.7h-2.8M617.1 359.0v29.7m-1.4 0h2.8m0-29.7h-2.8M622.0 350.8v29.7m-1.4 0h2.8m0-29.7h-2.8M617.4 347.8v29.7m-1.4 0h2.8m0-29.7h-2.8M622.1 357.9v29.7m-1.4 0h2.8m0-29.7h-2.8M617.8 352.4v29.7m-1.4 0h2.8m0-29.7h-2.8M622.3 359.6v29.7m-1.4 0h2.8m0-29.7h-2.8M618.1 352.3v29.7m-1.4 0h2.8m0-29.7h-2.8M622.5 351.1v29.7m-1.4 0h2.8m0-29.7h-2.8M618.4 353.3v29.7m-1.4 0h2.8m0-29.7h-2.8M622.6 348.8v29.7m-1.4 0h2.8m0-29.7h-2.8M618.8 348.7v29.7m-1.4 0h2.8m0-29.7h-2.8M622.8 349.8v29.7m-1.4 0h2.8m0-29.7h-2.8M619.1 349.8v29.7m-1.4 0h2.8m0-29.7h-2.8M623.0 355.3v29.7m-1.4 0h2.8m0-29.7h-2.8M619.5 348.8v29.7m-1.4 0h2.8m0-29.7h-2.8M623.1 353.5v29.7m-1.4 0h2.8m0-29.7h-2.8M619.8 348.9v29.7m-1.4 0h2.8m0-29.7h-2.8M623.3 355.8v29.7m-1.4 0h2.8m0-29.7h-2.8M620.2 340.0v29.7m-1.4 0h2.8m0-29.7h-2.8M623.5 351.4v29.7m-1.4 0h2.8m0-29.7h-2.8M620.5 351.9v29.7m-1.4 0h2.8m0-29.7h-2.8M623.7 347.9v29.7m-1.4 0h2.8m0-29.7h-2.8M620.9 355.4v29.7m-1.4 0h2.8m0-29.7h-2.8M623.8 353.2v29.7m-1.4 0h2.8m0-29.7h-2.8M621.2 356.6v29.7m-1.4 0h2.8m0-29.7h-2.8M624.0 356.2v29.7m-1.4 0h2.8m0-29.7h-2.8M621.5 354.2v29.7m-1.4 0h2.8m0-29.7h-2.8M624.2 351.8v29.7m-1.4 0h2.8m0-29.7h-2.8M621.9 347.3v29.7m-1.4 0h2.8m0-29.7h-2.8M624.3 351.5v29.7m-1.4 0h2.8m0-29.7h-2.8M622.2 350.0v29.7m-1.4 0h2.8m0-29.7h-2.8M624.5 353.4v29.7m-1.4 0h2.8m0-29.7h-2.8M622.6 350.1v29.7m-1.4 0h2.8m0-29.7h-2.8M624.7 363.5v29.7m-1.4 0h2.8m0-29.7h-2.8M622.9 345.6v29.7m-1.4 0h2.8m0-29.7h-2.8M624.8 357.3v29.7m-1.4 0h2.8m0-29.7h-2.8M623.3 350.3v29.7m-1.4 0h2.8m0-29.7h-2.8M625.0 351.6v29.7m-1.4 0h2.8m0-29.7h-2.8M623.6 356.0v29.7m-1.4 0h2.8m0-29.7h-2.8M625.2 352.6v29.7m-1.4 0h2.8m0-29.7h-2.8M624.0 347.4v29.7m-1.4 0h2.8m0-29.7h-2.8M625.3 354.3v29.7m-1.4 0h2.8m0-29.7h-2.8M624.3 351.6v29.7m-1.4 0h2.8m0-29.7h-2.8M625.5 344.3v29.7m-1.4 0h2.8m0-29.7h-2.8M624.6 353.3v29.7m-1.4 0h2.8m0-29.7h-2.8M625.7 348.4v29.7m-1.4 0h2.8m0-29.7h-2.8M625.0 349.5v29.7m-1.4 0h2.8m0-29.7h-2.8M625.8 354.7v29.7m-1.4 0h2.8m0-29.7h-2.8M625.3 353.8v29.7m-1.4 0h2.8m0-29.7h-2.8M626.0 351.6v29.7m-1.4 0h2.8m0-29.7h-2.8M625.7 361.5v29.7m-1.4 0h2.8m0-29.7h-2.8M626.2 354.5v29.7m-1.4 0h2.8m0-29.7h-2.8M626.0 350.3v29.7m-1.4 0h2.8m0-29.7h-2.8M626.3 353.8v29.7m-1.4 0h2.8m0-29.7h-2.8M626.4 352.3v29.7m-1.4 0h2.8m0-29.7h-2.8M626.5 343.9v29.7m-1.4 0h2.8m0-29.7h-2.8M626.7 346.5v29.7m-1.4 0h2.8m0-29.7h-2.8M626.7 347.2v29.7m-1.4 0h2.8m0-29.7h-2.8M627.1 361.3v29.7m-1.4 0h2.8m0-29.7h-2.8M626.8 352.2v29.7m-1.4 0h2.8m0-29.7h-2.8M627.4 351.9v29.7m-1.4 0h2.8m0-29.7h-2.8" stroke="#1f77b4" stroke-width="1.0" fill="none"/>
<rect x="356.6" y="313.3" width="283.1" height="90.0" fill="none" stroke="#222" stroke-width="0.55"/>
<path d="M356.6 336.10h-1.9M356.6 365.80h-1.9M356.6 395.50h-1.9M402.6 403.3v1.9M368.97 403.3v1.1M386.72 403.3v1.1M507.06 403.3v1.1M568.16 403.3v1.1M611.51 403.3v1.1" stroke="#222" stroke-width="0.55" fill="none"/>
<text x="351.90" y="338.70" font-size="6.94" text-anchor="end" >2</text>
<text x="351.90" y="368.40" font-size="6.94" text-anchor="end" >0</text>
<text x="351.90" y="398.10" font-size="6.94" text-anchor="end" >−2</text>
<text x="394.45" y="415.20" font-size="6.94">10</text>
<text x="403.58" y="412.50" font-size="4.86">−1</text>
<text x="492.19" y="414.20" font-size="6.94">2</text>
<text x="498.21" y="414.20" font-size="6.94">×</text>
<text x="505.62" y="414.20" font-size="6.94">10</text>
<text x="514.76" y="411.50" font-size="4.86">−1</text>
<text x="553.30" y="414.20" font-size="6.94">3</text>
<text x="559.31" y="414.20" font-size="6.94">×</text>
<text x="566.73" y="414.20" font-size="6.94">10</text>
<text x="575.86" y="411.50" font-size="4.86">−1</text>
<text x="596.65" y="414.20" font-size="6.94">4</text>
<text x="602.67" y="414.20" font-size="6.94">×</text>
<text x="610.08" y="414.20" font-size="6.94">10</text>
<text x="619.21" y="411.50" font-size="4.86">−1</text>
<text x="486.81" y="428.30" font-size="6.94">Q(A</text>
<text x="499.72" y="425.60" font-size="4.86">−1</text>
<text x="506.89" y="428.30" font-size="6.94">)</text>
<g transform="translate(336.10 396.75) rotate(-90)">
<text x="0" y="0" font-size="6.94">Residuals(normalized)</text>
</g>
<rect x="399" y="317" width="238.4" height="13.3" rx="1.2" fill="#8a8a8a" fill-opacity="0.7"/>
<rect x="398" y="316" width="238.4" height="13.3" rx="1.2" fill="#fff" stroke="#cccccc" stroke-width="0.5"/>
<path d="M407.9 319.0v7.4m-1.3 0h2.6m0-7.4h-2.6" stroke="#1f77b4" stroke-width="1.0" fill="none"/>
<circle cx="407.9" cy="322.7" r="1.25" fill="#1f77b4"/>
<text x="420.70" y="325.30" font-size="6.94" text-anchor="start" textLength="211.70" lengthAdjust="spacingAndGlyphs" >Residuals for M1[PBI-A_pH10_20%MeOH_BgSub_D10.dat]</text>
</svg>
</div></body></html>
